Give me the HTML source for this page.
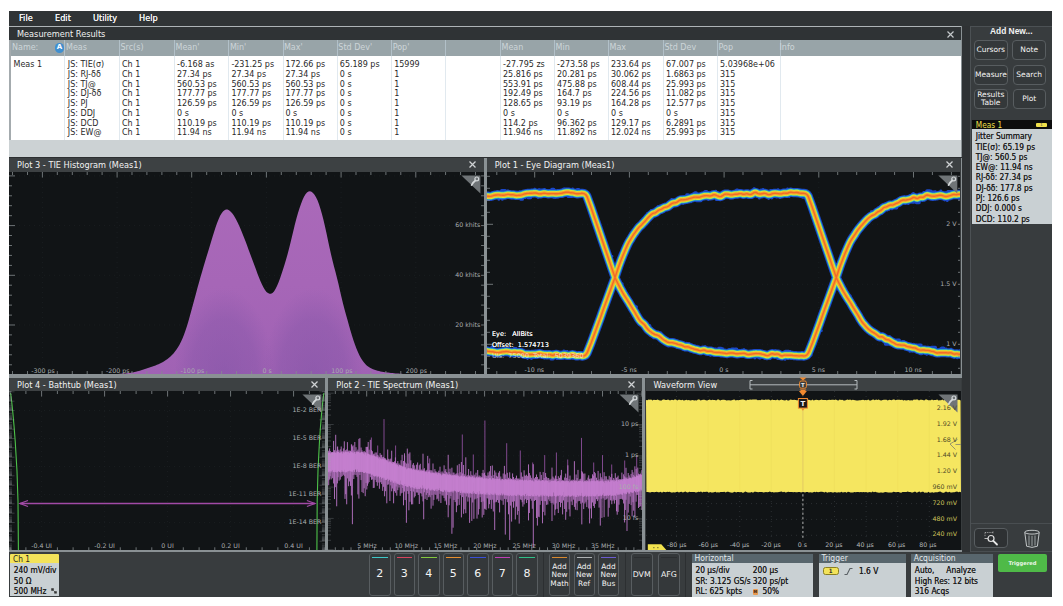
<!DOCTYPE html><html><head><meta charset="utf-8"><title>Scope</title><style>
*{box-sizing:border-box;margin:0;padding:0}
html,body{width:1063px;height:606px;background:#fff;overflow:hidden}
body{font-family:"DejaVu Sans","Liberation Sans",sans-serif;font-size:8px;color:#fff;position:relative}
.a{position:absolute}
#app{left:9px;top:11px;width:1043px;height:586px;background:#383c3e}
.t{position:absolute;white-space:nowrap;line-height:1}
.ptitle{position:absolute;background:#3d4143;color:#f2f2f2;font-size:8.2px;line-height:14px;padding-left:8px;overflow:hidden;white-space:nowrap}
.plot{position:absolute;background:#111416;overflow:hidden}
.x{position:absolute;top:3.2px;width:7px;height:7px}
.lbl{position:absolute;white-space:nowrap;font-size:6.3px;color:#a9adaf;line-height:8px}
.btn{position:absolute;border:1px solid #585d60;border-radius:4px;background:#34383a;color:#f4f4f4;text-align:center}
.cd{font-family:"DejaVu Sans Condensed","DejaVu Sans","Liberation Sans",sans-serif;font-stretch:condensed}
.bdg{position:absolute;font-family:"DejaVu Sans Condensed","DejaVu Sans","Liberation Sans",sans-serif;font-stretch:condensed;background:#c9d0d3;color:#1c1c1c;font-size:8px}
.bdg .h{position:absolute;left:0;top:0;right:0;height:9.5px;background:#58666d;color:#e4eaed;font-size:8.5px;line-height:9.5px;padding-left:3px}
</style></head><body>
<div id="app" class="a">
<div class="a" style="left:0px;top:0px;width:1043px;height:14.5px;background:#303436"></div>
<div class="t" style="left:10px;top:2.6px;font-size:8.2px;color:#f4f4f4;text-shadow:0 0 .4px #fff">File</div>
<div class="t" style="left:46px;top:2.6px;font-size:8.2px;color:#f4f4f4;text-shadow:0 0 .4px #fff">Edit</div>
<div class="t" style="left:84px;top:2.6px;font-size:8.2px;color:#f4f4f4;text-shadow:0 0 .4px #fff">Utility</div>
<div class="t" style="left:130px;top:2.6px;font-size:8.2px;color:#f4f4f4;text-shadow:0 0 .4px #fff">Help</div>
<div class="a" style="left:0px;top:14.5px;width:953px;height:1.5px;background:#aeb4b7"></div>
<div class="a" style="left:0px;top:16px;width:953px;height:13px;background:#2f3335"></div>
<div class="t" style="left:8px;top:18.6px;font-size:8.2px;color:#f0f0f0">Measurement Results</div>
<svg class="a" style="left:937.7px;top:19.6px" width="7" height="7" viewBox="0 0 7 7"><path d="M0.5 0.5L6.5 6.5M6.500 0.500L0.500 6.500" stroke="#c4c8ca" stroke-width="1.2" fill="none"/></svg>
<div class="a" style="left:0px;top:29px;width:953px;height:15.5px;background:#98a4a8"></div>
<div class="a" style="left:0px;top:44.5px;width:953px;height:84px;background:#fff"></div>
<div class="a" style="left:0px;top:128.5px;width:953px;height:17.6px;background:#ccd2d4"></div>
<div class="a" style="left:0px;top:146.1px;width:953px;height:1.2px;background:#2c2f31"></div>
<div class="a" style="left:952px;top:14.5px;width:1.5px;height:131.5px;background:#8a9194"></div>
<div class="a" style="left:0px;top:29px;width:2px;height:100px;background:#a4abae"></div>
<div class="t" style="left:3px;top:33px;color:#cdd5d8;font-size:8px">Name:</div>
<div class="a" style="left:45.8px;top:32.4px;width:9.4px;height:9.4px;border-radius:4.7px;background:#3f8fd0;color:#fff;font-size:7px;line-height:9.4px;text-align:center;font-weight:bold">A</div>
<div class="t" style="left:57px;top:33px;color:#cdd5d8;font-size:8px">Meas</div>
<div class="t" style="left:111.5px;top:33px;color:#cdd5d8;font-size:8px">Src(s)</div>
<div class="t" style="left:166.5px;top:33px;color:#cdd5d8;font-size:8px">Mean'</div>
<div class="t" style="left:220.9px;top:33px;color:#cdd5d8;font-size:8px">Min'</div>
<div class="t" style="left:274.9px;top:33px;color:#cdd5d8;font-size:8px">Max'</div>
<div class="t" style="left:329.3px;top:33px;color:#cdd5d8;font-size:8px">Std Dev'</div>
<div class="t" style="left:383.7px;top:33px;color:#cdd5d8;font-size:8px">Pop'</div>
<div class="t" style="left:492.5px;top:33px;color:#cdd5d8;font-size:8px">Mean</div>
<div class="t" style="left:546.5px;top:33px;color:#cdd5d8;font-size:8px">Min</div>
<div class="t" style="left:600.5px;top:33px;color:#cdd5d8;font-size:8px">Max</div>
<div class="t" style="left:655.5px;top:33px;color:#cdd5d8;font-size:8px">Std Dev</div>
<div class="t" style="left:709.5px;top:33px;color:#cdd5d8;font-size:8px">Pop</div>
<div class="t" style="left:770.5px;top:33px;color:#cdd5d8;font-size:8px">Info</div>
<div class="a" style="left:54.5px;top:29px;width:1px;height:99.5px;background:rgba(200,215,225,.55)"></div>
<div class="a" style="left:109.5px;top:29px;width:1px;height:99.5px;background:rgba(200,215,225,.55)"></div>
<div class="a" style="left:164.5px;top:29px;width:1px;height:99.5px;background:rgba(200,215,225,.55)"></div>
<div class="a" style="left:219px;top:29px;width:1px;height:99.5px;background:rgba(200,215,225,.55)"></div>
<div class="a" style="left:273.5px;top:29px;width:1px;height:99.5px;background:rgba(200,215,225,.55)"></div>
<div class="a" style="left:328px;top:29px;width:1px;height:99.5px;background:rgba(200,215,225,.55)"></div>
<div class="a" style="left:382px;top:29px;width:1px;height:99.5px;background:rgba(200,215,225,.55)"></div>
<div class="a" style="left:436px;top:29px;width:1px;height:99.5px;background:rgba(200,215,225,.55)"></div>
<div class="a" style="left:491px;top:29px;width:1px;height:99.5px;background:rgba(200,215,225,.55)"></div>
<div class="a" style="left:545px;top:29px;width:1px;height:99.5px;background:rgba(200,215,225,.55)"></div>
<div class="a" style="left:599px;top:29px;width:1px;height:99.5px;background:rgba(200,215,225,.55)"></div>
<div class="a" style="left:653.5px;top:29px;width:1px;height:99.5px;background:rgba(200,215,225,.55)"></div>
<div class="a" style="left:708px;top:29px;width:1px;height:99.5px;background:rgba(200,215,225,.55)"></div>
<div class="a" style="left:770.5px;top:29px;width:1px;height:99.5px;background:rgba(200,215,225,.55)"></div>
<div class="t" style="left:4.5px;top:50px;color:#2a2a2a;font-size:8px">Meas 1</div>
<div class="t" style="left:58.8px;top:49.1px;color:#2a2a2a;font-size:8px;line-height:9.73px">JS: TIE(σ)<br>JS: RJ-δδ<br>JS: TJ@<br>JS: DJ-δδ<br>JS: PJ<br>JS: DDJ<br>JS: DCD<br>JS: EW@</div>
<div class="t" style="left:113px;top:49.1px;color:#2a2a2a;font-size:8px;line-height:9.73px">Ch 1<br>Ch 1<br>Ch 1<br>Ch 1<br>Ch 1<br>Ch 1<br>Ch 1<br>Ch 1</div>
<div class="t" style="left:168px;top:49.1px;color:#2a2a2a;font-size:8px;line-height:9.73px">-6.168 as<br>27.34 ps<br>560.53 ps<br>177.77 ps<br>126.59 ps<br>0 s<br>110.19 ps<br>11.94 ns</div>
<div class="t" style="left:222.4px;top:49.1px;color:#2a2a2a;font-size:8px;line-height:9.73px">-231.25 ps<br>27.34 ps<br>560.53 ps<br>177.77 ps<br>126.59 ps<br>0 s<br>110.19 ps<br>11.94 ns</div>
<div class="t" style="left:276.4px;top:49.1px;color:#2a2a2a;font-size:8px;line-height:9.73px">172.66 ps<br>27.34 ps<br>560.53 ps<br>177.77 ps<br>126.59 ps<br>0 s<br>110.19 ps<br>11.94 ns</div>
<div class="t" style="left:330.8px;top:49.1px;color:#2a2a2a;font-size:8px;line-height:9.73px">65.189 ps<br>0 s<br>0 s<br>0 s<br>0 s<br>0 s<br>0 s<br>0 s</div>
<div class="t" style="left:385.2px;top:49.1px;color:#2a2a2a;font-size:8px;line-height:9.73px">15999<br>1<br>1<br>1<br>1<br>1<br>1<br>1</div>
<div class="t" style="left:494px;top:49.1px;color:#2a2a2a;font-size:8px;line-height:9.73px">-27.795 zs<br>25.816 ps<br>553.91 ps<br>192.49 ps<br>128.65 ps<br>0 s<br>114.2 ps<br>11.946 ns</div>
<div class="t" style="left:548px;top:49.1px;color:#2a2a2a;font-size:8px;line-height:9.73px">-273.58 ps<br>20.281 ps<br>475.88 ps<br>164.7 ps<br>93.19 ps<br>0 s<br>96.362 ps<br>11.892 ns</div>
<div class="t" style="left:602px;top:49.1px;color:#2a2a2a;font-size:8px;line-height:9.73px">233.64 ps<br>30.062 ps<br>608.44 ps<br>224.56 ps<br>164.28 ps<br>0 s<br>129.17 ps<br>12.024 ns</div>
<div class="t" style="left:657px;top:49.1px;color:#2a2a2a;font-size:8px;line-height:9.73px">67.007 ps<br>1.6863 ps<br>25.993 ps<br>11.082 ps<br>12.577 ps<br>0 s<br>6.2891 ps<br>25.993 ps</div>
<div class="t" style="left:711px;top:49.1px;color:#2a2a2a;font-size:8px;line-height:9.73px">5.03968e+06<br>315<br>315<br>315<br>315<br>315<br>315<br>315</div>
<div class="ptitle" style="left:0px;top:147.3px;width:474.9px;height:13.4px;">Plot 3 - TIE Histogram (Meas1)<svg class="x" style="right:7.5px" viewBox="0 0 7 7"><path d="M0.5 0.5L6.5 6.5M6.500 0.500L0.500 6.500" stroke="#cfd2d4" stroke-width="1.25" fill="none"/></svg></div>
<div class="a" style="left:474.9px;top:147.3px;width:2.8px;height:219px;background:#8a9194"></div>
<div class="a" style="left:0px;top:362.7px;width:953px;height:4.3px;background:#8a9194"></div>
<div class="plot" style="left:0px;top:160.7px;width:474.9px;height:202px">
<svg class="a" style="left:0;top:0" width="474.9" height="202" viewBox="0 0 474.9 202">
<path d="M33.4 0V202M108.1 0V202M182.7 0V202M257.4 0V202M332.1 0V202M406.8 0V202M0 3.9H474.9M0 53.6H474.9M0 103.3H474.9M0 153H474.9M0 202.7H474.9" stroke="#202427" stroke-width="0.8" stroke-dasharray="0.8 4.2" fill="none"/>
<defs><linearGradient id="hg" x1="0" y1="0" x2="0" y2="1"><stop offset="0" stop-color="#aa69b9"/><stop offset="0.5" stop-color="#a666b7"/><stop offset="1" stop-color="#a062b4"/></linearGradient><radialGradient id="hr"><stop offset="0" stop-color="#7d52a4" stop-opacity=".5"/><stop offset="0.65" stop-color="#8054a6" stop-opacity=".36"/><stop offset="1" stop-color="#8456a8" stop-opacity="0"/></radialGradient><clipPath id="hc"><path d="M91 202L91 202.6L92.5 202.6L94 202.5L95.5 202.5L97 202.4L98.5 202.4L100 202.3L101.5 202.3L103 202.2L104.5 202.1L106 202.1L107.5 202L109 201.9L110.5 201.8L112 201.7L113.5 201.6L115 201.5L116.5 201.4L118 201.2L119.5 201L121 200.9L122.5 200.6L124 200.4L125.5 200.1L127 199.7L128.5 199.3L130 198.9L131.5 198.5L133 198L134.5 197.5L136 197L137.5 196.5L139 196L140.5 195.5L142 195L143.5 194.5L145 194L146.5 193.4L148 192.8L149.5 192.2L151 191.5L152.5 190.8L154 190L155.5 189.1L157 188.1L158.5 187L160 185.8L161.5 184.5L163 183.1L164.5 181.5L166 179.6L167.5 177.6L169 175.3L170.5 172.7L172 169.8L173.5 166.5L175 162.8L176.5 158.6L178 154L179.5 148.9L181 143.6L182.5 138.1L184 132.6L185.5 127L187 121.4L188.5 115.8L190 110.4L191.5 105.1L193 99.9L194.5 94.8L196 89.8L197.5 84.8L199 79.9L200.5 74.9L202 70L203.5 65.1L205 60.2L206.5 55.6L208 51.2L209.5 47.4L211 44.1L212.5 41.5L214 39.6L215.5 38.3L217 37.6L218.5 37.6L220 38.2L221.5 39.4L223 41L224.5 43L226 45.5L227.5 48.3L229 51.3L230.5 54.6L232 58.1L233.5 61.7L235 65.4L236.5 69.3L238 73.3L239.5 77.4L241 81.4L242.5 85.5L244 89.5L245.5 93.6L247 97.6L248.5 101.7L250 105.6L251.5 109.2L253 112.6L254.5 115.5L256 118L257.5 119.9L259 121.1L260.5 121.8L262 121.7L263.5 120.9L265 119.4L266.5 117.1L268 114.1L269.5 110.4L271 106.4L272.5 102.1L274 97.5L275.5 92.8L277 87.7L278.5 82.4L280 76.8L281.5 70.8L283 64.5L284.5 58.2L286 52L287.5 46.2L289 41L290.5 36.2L292 31.9L293.5 28L295 24.8L296.5 22.3L298 20.5L299.5 19.5L301 19.3L302.5 19.8L304 20.9L305.5 22.7L307 25.2L308.5 28.3L310 32.2L311.5 36.9L313 42.2L314.5 48.1L316 54.5L317.5 61.3L319 68.4L320.5 75.5L322 82.2L323.5 88.5L325 94.4L326.5 100L328 105.9L329.5 112.1L331 118.7L332.5 125.2L334 131.4L335.5 137.2L337 142.7L338.5 148.1L340 153.6L341.5 158.8L343 163.8L344.5 168.5L346 172.8L347.5 176.7L349 180.2L350.5 183.4L352 186.2L353.5 188.6L355 190.6L356.5 192.3L358 193.7L359.5 194.8L361 195.8L362.5 196.6L364 197.3L365.5 197.8L367 198.3L368.5 198.7L370 199.1L371.5 199.4L373 199.7L374.5 200L376 200.2L377.5 200.4L379 200.6L380.5 200.8L382 200.9L383.5 201.1L385 201.2L386.5 201.4L388 201.5L389.5 201.6L391 201.7L392.5 201.8L394 201.9L395.5 202L397 202.1L398.5 202.2L400 202.3L401.5 202.3L403 202.4L404.5 202.4L406 202.5L407.5 202.5L409 202.6L410.5 202.6L412 202.6L413.5 202.7L415 202.7L416 202Z"/></clipPath></defs>
<path d="M91 202L91 202.6L92.5 202.6L94 202.5L95.5 202.5L97 202.4L98.5 202.4L100 202.3L101.5 202.3L103 202.2L104.5 202.1L106 202.1L107.5 202L109 201.9L110.5 201.8L112 201.7L113.5 201.6L115 201.5L116.5 201.4L118 201.2L119.5 201L121 200.9L122.5 200.6L124 200.4L125.5 200.1L127 199.7L128.5 199.3L130 198.9L131.5 198.5L133 198L134.5 197.5L136 197L137.5 196.5L139 196L140.5 195.5L142 195L143.5 194.5L145 194L146.5 193.4L148 192.8L149.5 192.2L151 191.5L152.5 190.8L154 190L155.5 189.1L157 188.1L158.5 187L160 185.8L161.5 184.5L163 183.1L164.5 181.5L166 179.6L167.5 177.6L169 175.3L170.5 172.7L172 169.8L173.5 166.5L175 162.8L176.5 158.6L178 154L179.5 148.9L181 143.6L182.5 138.1L184 132.6L185.5 127L187 121.4L188.5 115.8L190 110.4L191.5 105.1L193 99.9L194.5 94.8L196 89.8L197.5 84.8L199 79.9L200.5 74.9L202 70L203.5 65.1L205 60.2L206.5 55.6L208 51.2L209.5 47.4L211 44.1L212.5 41.5L214 39.6L215.5 38.3L217 37.6L218.5 37.6L220 38.2L221.5 39.4L223 41L224.5 43L226 45.5L227.5 48.3L229 51.3L230.5 54.6L232 58.1L233.5 61.7L235 65.4L236.5 69.3L238 73.3L239.5 77.4L241 81.4L242.5 85.5L244 89.5L245.5 93.6L247 97.6L248.5 101.7L250 105.6L251.5 109.2L253 112.6L254.5 115.5L256 118L257.5 119.9L259 121.1L260.5 121.8L262 121.7L263.5 120.9L265 119.4L266.5 117.1L268 114.1L269.5 110.4L271 106.4L272.5 102.1L274 97.5L275.5 92.8L277 87.7L278.5 82.4L280 76.8L281.5 70.8L283 64.5L284.5 58.2L286 52L287.5 46.2L289 41L290.5 36.2L292 31.9L293.5 28L295 24.8L296.5 22.3L298 20.5L299.5 19.5L301 19.3L302.5 19.8L304 20.9L305.5 22.7L307 25.2L308.5 28.3L310 32.2L311.5 36.9L313 42.2L314.5 48.1L316 54.5L317.5 61.3L319 68.4L320.5 75.5L322 82.2L323.5 88.5L325 94.4L326.5 100L328 105.9L329.5 112.1L331 118.7L332.5 125.2L334 131.4L335.5 137.2L337 142.7L338.5 148.1L340 153.6L341.5 158.8L343 163.8L344.5 168.5L346 172.8L347.5 176.7L349 180.2L350.5 183.4L352 186.2L353.5 188.6L355 190.6L356.5 192.3L358 193.7L359.5 194.8L361 195.8L362.5 196.6L364 197.3L365.5 197.8L367 198.3L368.5 198.7L370 199.1L371.5 199.4L373 199.7L374.5 200L376 200.2L377.5 200.4L379 200.6L380.5 200.8L382 200.9L383.5 201.1L385 201.2L386.5 201.4L388 201.5L389.5 201.6L391 201.7L392.5 201.8L394 201.9L395.5 202L397 202.1L398.5 202.2L400 202.3L401.5 202.3L403 202.4L404.5 202.4L406 202.5L407.5 202.5L409 202.6L410.5 202.6L412 202.6L413.5 202.7L415 202.7L416 202Z" fill="url(#hg)"/>
<g clip-path="url(#hc)"><ellipse cx="215" cy="204.3" rx="50" ry="88" fill="url(#hr)"/><ellipse cx="304" cy="204.3" rx="50" ry="88" fill="url(#hr)"/></g>
<path d="M3.5 0v3M3.5 202v-3M18.5 0v3M18.5 202v-3M33.4 0v5.5M48.3 0v3M48.3 202v-3M63.3 0v3M63.3 202v-3M78.2 0v3M78.2 202v-3M93.1 0v3M93.1 202v-3M108.1 0v5.5M123 0v3M123 202v-3M137.9 0v3M137.9 202v-3M152.9 0v3M152.9 202v-3M167.8 0v3M167.8 202v-3M182.7 0v5.5M197.7 0v3M197.7 202v-3M212.6 0v3M212.6 202v-3M227.5 0v3M227.5 202v-3M242.5 0v3M242.5 202v-3M257.4 0v5.5M272.3 0v3M272.3 202v-3M287.3 0v3M287.3 202v-3M302.2 0v3M302.2 202v-3M317.1 0v3M317.1 202v-3M332.1 0v5.5M347 0v3M347 202v-3M361.9 0v3M361.9 202v-3M376.9 0v3M376.9 202v-3M391.8 0v3M391.8 202v-3M406.8 0v5.5M421.7 0v3M421.7 202v-3M436.6 0v3M436.6 202v-3M451.6 0v3M451.6 202v-3M466.5 0v3M466.5 202v-3M0 3.9h6M474.9 3.9h-2.8M0 13.8h3M474.9 13.8h-2.8M0 23.8h3M474.9 23.8h-2.8M0 33.7h3M474.9 33.7h-2.8M0 43.7h3M474.9 43.7h-2.8M0 53.6h6M474.9 53.6h-2.8M0 63.5h3M474.9 63.5h-2.8M0 73.5h3M474.9 73.5h-2.8M0 83.4h3M474.9 83.4h-2.8M0 93.4h3M474.9 93.4h-2.8M0 103.3h6M474.9 103.3h-2.8M0 113.2h3M474.9 113.2h-2.8M0 123.2h3M474.9 123.2h-2.8M0 133.1h3M474.9 133.1h-2.8M0 143.1h3M474.9 143.1h-2.8M0 153h6M474.9 153h-2.8M0 162.9h3M474.9 162.9h-2.8M0 172.9h3M474.9 172.9h-2.8M0 182.8h3M474.9 182.8h-2.8M0 192.8h3M474.9 192.8h-2.8M0 202.7h6M474.9 202.7h-2.8" stroke="#858b8e" stroke-width="0.8" fill="none"/>
<g transform="translate(471.4,3.5)"><path d="M-19 0H0V18Z" fill="#6f7477"/><circle cx="-3.6" cy="3.4" r="1.9" fill="none" stroke="#d4d8da" stroke-width="1.2"/><path d="M-5 5Q-7.500 6.800 -8.800 9.600" stroke="#d4d8da" stroke-width="1.7" fill="none" stroke-linecap="round"/></g>
</svg>
<div class="lbl" style="left:4px;top:195.2px;width:60px;text-align:center;">-300 ps</div>
<div class="lbl" style="left:78.7px;top:195.2px;width:60px;text-align:center;">-200 ps</div>
<div class="lbl" style="left:153.4px;top:195.2px;width:60px;text-align:center;">-100 ps</div>
<div class="lbl" style="left:228.1px;top:195.2px;width:60px;text-align:center;">0 s</div>
<div class="lbl" style="left:302.8px;top:195.2px;width:60px;text-align:center;">100 ps</div>
<div class="lbl" style="left:377.5px;top:195.2px;width:60px;text-align:center;">200 ps</div>
<div class="lbl" style="right:3.6px;top:49.6px;text-align:right;">60 khits</div>
<div class="lbl" style="right:3.6px;top:99.3px;text-align:right;">40 khits</div>
<div class="lbl" style="right:3.6px;top:149px;text-align:right;">20 khits</div>
</div>
<div class="ptitle" style="left:477.7px;top:147.3px;width:473.8px;height:13.4px;">Plot 1 - Eye Diagram (Meas1)<svg class="x" style="right:7px" viewBox="0 0 7 7"><path d="M0.5 0.5L6.5 6.5M6.500 0.500L0.500 6.500" stroke="#cfd2d4" stroke-width="1.25" fill="none"/></svg></div>
<div class="a" style="left:951.5px;top:147.3px;width:1.5px;height:219px;background:#8a9194"></div>
<div class="plot" style="left:477.7px;top:160.7px;width:473.8px;height:202px">
<svg class="a" style="left:0;top:0" width="473.8" height="202" viewBox="0 0 473.8 202">
<path d="M47.7 0V202M142.4 0V202M237.1 0V202M331.8 0V202M426.5 0V202M0 52.3H473.8M0 112.3H473.8M0 172.3H473.8" stroke="#202427" stroke-width="0.8" stroke-dasharray="0.8 4.2" fill="none"/>
<g fill="none" stroke-linejoin="round" stroke-linecap="round">
<path d="M-4 175.9h0.1M-2.2 175.8h0.1M-0.1 182.3h0.1M7.9 184.2h0.1M10.8 177.2h0.1M11.8 176.7h0.1M18.1 176.4h0.1M20.4 183h0.1M22.5 183.4h0.1M25 184h0.1M27.3 176.1h0.1M29 176.3h0.1M33.1 183.5h0.1M33.9 177.5h0.1M40.5 186.6h0.1M44.4 186.7h0.1M46.2 179.4h0.1M48.3 178.8h0.1M57.5 186.1h0.1M58.5 179.6h0.1M60.4 179.6h0.1M66.4 179.9h0.1M70 186.8h0.1M75.6 186.5h0.1M76.8 178.9h0.1M78 179.2h0.1M80.1 179.4h0.1M85.8 186.5h0.1M93.6 180.3h0.1M124.7 103.1h0.1M139.6 79.8h0.1M140.3 68.8h0.1M143.3 72.2h0.1M147.9 58.2h0.1M149.7 56.2h0.1M153.1 51.2h0.1M160.3 41.5h0.1M164.3 38.2h0.1M170.9 34.6h0.1M173.2 33.8h0.1M181.1 30.2h0.1M182.9 29h0.1M184.6 27.3h0.1M189.8 33.9h0.1M191 26.2h0.1M194.6 30.9h0.1M196 31.5h0.1M200.1 23.6h0.1M203.8 29.9h0.1M206.6 21.6h0.1M211.8 22.2h0.1M214.4 28.2h0.1M216.9 20.5h0.1M221.3 27.6h0.1M224.4 20h0.1M228.7 19.1h0.1M236.4 26.3h0.1M244 26h0.1M250.6 18.9h0.1M261.2 19h0.1M267 16.5h0.1M272.3 26.3h0.1M274.1 17.9h0.1M276 17.3h0.1M281.5 26.6h0.1M283.5 18.4h0.1M284.8 26.1h0.1M287.3 18.2h0.1M289.5 25.3h0.1M291 17.6h0.1M293 25.6h0.1M296.2 24.2h0.1M300.5 16.7h0.1M302.2 24.6h0.1M309.8 24h0.1M313.5 24.6h0.1M351.7 117.8h0.1M363.2 123.9h0.1M362.4 134.8h0.1M367.8 141.1h0.1M373.1 150.6h0.1M380.6 153.2h0.1M385.8 163.1h0.1M387 157.6h0.1M392 167.7h0.1M393 161.2h0.1M395.7 161.7h0.1M397.6 170.5h0.1M402.2 172.2h0.1M402.6 164.6h0.1M407.4 168.2h0.1M411.8 169.7h0.1M415.5 169.4h0.1M416.9 169.5h0.1M420.2 177.3h0.1M422.8 179.4h0.1M425 179.2h0.1M426.9 172.6h0.1M429.9 172.8h0.1M439.7 182.4h0.1M444.2 182h0.1M445 183h0.1M448.2 176.3h0.1M449.9 177.7h0.1M452.1 177.5h0.1M453.6 176.6h0.1M454.4 176.6h0.1M458.2 177.3h0.1M458.9 176.7h0.1M464 177.1h0.1M467.2 185.3h0.1M470.2 186h0.1M473 178.5h0.1M475.1 178.2h0.1M477.2 177.1h0.1M-4.1 28.6h0.1M-2 27.9h0.1M10.2 19.5h0.1M11.8 27.4h0.1M15.3 27.5h0.1M16.3 20.2h0.1M20.7 18.8h0.1M24.9 26.1h0.1M26.1 26h0.1M32.9 19.9h0.1M38.2 25.6h0.1M41.2 25h0.1M43.6 25.6h0.1M47.7 17.1h0.1M50.9 25.5h0.1M52 17.6h0.1M55.5 24.7h0.1M57.5 17.3h0.1M60.6 18.7h0.1M62.4 18.4h0.1M66.6 25.5h0.1M68.5 25.4h0.1M70.9 25.3h0.1M75.8 24.3h0.1M81.8 17.2h0.1M85.6 16.9h0.1M87.4 24.2h0.1M89.3 18.3h0.1M90.9 18.3h0.1M92.5 24.8h0.1M125 84.3h0.1M135.2 111.7h0.1M140.8 123.7h0.1M145.3 139.4h0.1M146.5 135.9h0.1M148.6 139h0.1M150.3 141.7h0.1M152.3 152.3h0.1M155.3 154.5h0.1M158.3 151.9h0.1M160.5 153.2h0.1M166.6 165.9h0.1M173.8 160.7h0.1M174.2 162.6h0.1M181.3 174.2h0.1M187 167.7h0.1M195.8 177h0.1M196.1 170.6h0.1M199.2 171.1h0.1M200.2 171.3h0.1M202.1 171.6h0.1M205.2 179.6h0.1M212.4 175.6h0.1M218.2 174.6h0.1M220.7 182.3h0.1M223.4 183.4h0.1M227.5 183.3h0.1M228.9 176.8h0.1M233.5 177.6h0.1M235.6 176.5h0.1M242.3 177.3h0.1M249.1 178.2h0.1M250.9 178.3h0.1M253.7 184.8h0.1M256.9 177.6h0.1M267.9 186.1h0.1M269.9 178.3h0.1M270.6 185.2h0.1M278 186.4h0.1M283.1 186.7h0.1M288.4 178.5h0.1M292.8 186.3h0.1M298 187.4h0.1M303.1 179.2h0.1M320.3 183.2h0.1M324.1 183.2h0.1M334.4 158.8h0.1M349.1 94h0.1M367.4 59.3h0.1M375.9 56.2h0.1M377.3 46.5h0.1M382 50.4h0.1M384.3 39.5h0.1M386.6 39.4h0.1M391.4 35.6h0.1M395.7 32.9h0.1M398.8 31.2h0.1M402.1 37.2h0.1M404.9 37h0.1M407.1 29.2h0.1M411.8 27.5h0.1M417.4 24.6h0.1M418.4 31.4h0.1M421.3 31.8h0.1M423.3 23.6h0.1M425.5 21.9h0.1M426.3 21.3h0.1M440.9 26.2h0.1M445.7 27.8h0.1M447.6 19.9h0.1M448.3 19.5h0.1M450.5 26.6h0.1M453.8 18.9h0.1M457.8 28.1h0.1M460.2 28.8h0.1M466.6 18.9h0.1M471.9 26.5h0.1M472.4 26.5h0.1M474.6 26.4h0.1M477.1 26.5h0.1" stroke="#1b48c8" stroke-width="2.6"/>
<path d="M4.9 175.1h1.1M64.1 186.9h1.8M169.1 36.5h1.1M199.8 22.9h1.3M207.9 20.8h1.3M209.7 28.7h4M218 19.5h1.7M229.3 27.3h1.2M249.6 18.2h1.1M315.5 25.1h3.8M398.4 172.1h2.5M409.7 168.1h2.6M431.5 173.1h2.5M433.5 181.7h1.1M444.5 175.4h3.9M454.7 176.2h2M14.6 18.7h3.7M33.9 27.2h1.5M41.2 25.7h2.2M52.7 18h3.5M64.8 17.3h2M76.6 17h1.4M81.2 24.4h3.4M90.1 17.5h1.8M146.7 134.8h2.6M161.2 153.7h1.6M231.6 176.4h2.6M244.7 177h2.2M247.8 177.2h1.9M272.4 185.8h1M290.8 186.4h2.9M298.5 179.3h3.3M408.4 35.8h1.3M425.7 30.2h1.1M429.3 30.6h2.9M436.7 20.6h1.3M440 18.8h2.7M441.4 19.1h2.6M445.1 20.1h2.2M458.4 20.9h3M460.9 19.6h3.5" stroke="#1b48c8" stroke-width="3.2"/>
<path d="M-126.3 21.3L-124.3 21.6L-122.7 22.5L-121.3 24.5L-117.3 35.4L-114.9 42.4L-112.5 49.4L-110.1 56.4L-107.7 63.5L-105.3 70.5L-102.9 77.5L-100.5 84.5L-98.1 91.6L-95.7 98.6L-93.3 105.6L-92.3 107.7L-91.3 109.8L-90.3 111.8L-89.3 113.7L-88.3 115.7L-87.3 117.5L-86.3 119.3L-85.3 121L-84.3 122.6L-83.3 124.1L-82.3 125.6L-81.3 127.2L-80.3 128.9L-79.3 130.6L-78.3 132.4L-77.3 134L-76.3 135.6L-75.3 137.2L-74.3 138.7L-73.3 140.1L-72.3 141.7L-71.3 143.6L-70.3 145.6L-69.3 147.6L-68.3 149.4L-67.3 150.8L-66.3 152L-65.3 153.2L-64.3 154.2L-63.3 154.9L-62.3 155.7L-61.3 156.5L-60.3 157.4L-59.3 158.5L-58.3 159.4L-57.3 160L-56.3 160.5L-55.3 161.2L-54.3 161.9L-53.3 162.6L-52.3 163.1L-51.3 163.3L-50.3 163.6L-49.3 164.1L-48.3 164.9L-47.3 165.8L-46.3 166.7L-45.3 167.5L-44.3 168.3L-43.3 168.9L-42.3 169.4L-41.3 169.6L-40.3 169.7L-39.3 169.8L-38.3 169.9L-37.3 170.3L-36.3 170.8L-35.3 171.2L-34.3 171.5L-33.3 171.5L-32.3 171.6L-31.3 172.1L-30.3 172.8L-29.3 173.5L-28.3 174.1L-27.3 174.4L-26.3 174.4L-25.3 174.4L-24.3 174.3L-23.3 174.4L-22.3 174.9L-21.3 175.5L-20.3 176L-19.3 176.1L-18.3 176L-17.3 175.9L-16.3 176L-15.3 176.3L-14.3 176.6L-13.3 176.8L-12.3 177.2L-11.3 177.7L-10.3 178.3L-9.3 178.6L-8.3 178.7L-7.3 178.7L-6.3 178.8L-5.3 178.9L-4.3 179L-3.3 179L-2.3 178.9L-1.3 178.8L-0.3 178.9L0.7 179.2L1.7 179.4L2.7 179.5L3.7 179.6L4.7 179.7L5.7 179.8L6.7 180L7.7 180.2L8.7 180.5L9.7 180.6L10.7 180.7L11.7 180.6L12.7 180.4L13.7 180.2L14.7 180L15.7 179.9L16.7 179.8L17.7 179.7L18.7 179.5L19.7 179.5L20.7 179.6L21.7 179.8L22.7 180.1L23.7 180.4L24.7 180.6L25.7 180.4L26.7 180.2L27.7 180.2L28.7 180.3L29.7 180.5L30.7 180.5L31.7 180.5L32.7 180.4L33.7 180.5L34.7 180.8L35.7 181.4L36.7 182L37.7 182.3L38.7 182.4L39.7 182.4L40.7 182.4L41.7 182.4L42.7 182.5L43.7 182.5L44.7 182.4L45.7 182.4L46.7 182.4L47.7 182.4L48.7 182.4L49.7 182.3L50.7 182L51.7 181.8L52.7 181.7L53.7 181.9L54.7 182.2L55.7 182.4L56.7 182.6L57.7 182.7L58.7 182.7L59.7 182.8L60.7 182.8L61.7 182.7L62.7 182.7L63.7 182.8L64.7 183.1L65.7 183.3L66.7 183.1L67.7 182.7L68.7 182.4L69.7 182.4L70.7 182.7L71.7 183.2L72.7 183.4L73.7 183.5L74.7 183.3L75.7 183L76.7 182.9L77.7 182.8L78.7 183L79.7 183.3L80.7 183.5L81.7 183.5L82.7 183.4L83.7 183.1L84.7 182.8L85.7 182.7L86.7 182.9L87.7 183.2L88.7 183.7L89.7 183.9L90.7 183.8L91.7 183.7L92.7 183.6L93.7 183.7L94.7 183.8L95.1 184.1L97.1 183.8L98.7 182.9L100.1 180.9L104.1 171L106.5 164.5L108.9 157.9L111.3 151.4L113.7 144.9L116 138.3L118.4 131.8L120.8 125.2L123.2 118.7L125.6 112.1L128 105.6L129 102.5L130 99.5L131 96.6L132 93.7L133 91L134 88.3L135 85.8L136 83.3L137 80.9L138 78.5L139 76.2L140 73.9L141 71.8L142 69.9L143 68.3L144 66.7L145 65L146 63.4L147 61.9L148 60.6L149 59.2L150 57.8L151 56.5L152 55.3L153 54.3L154 53.4L155 52.4L156 51.3L157 50.3L158 49.2L159 48.1L160 46.9L161 45.7L162 44.7L163 43.7L164 42.8L165 42L166 41.4L167 41.1L168 40.9L169 40.3L170 39.5L171 38.7L172 38.1L173 37.7L174 37.4L175 36.9L176 36.2L177 35.6L178 35.3L179 35.1L180 34.8L181 34.4L182 33.7L183 32.9L184 32.1L185 31.5L186 31.1L187 30.9L188 30.8L189 30.6L190 30.1L191 29.4L192 28.7L193 28.1L194 27.8L195 27.9L196 27.9L197 27.7L198 27.6L199 27.5L200 27.2L201 27L202 26.7L203 26.4L204 26.1L205 25.8L206 25.5L207 25.2L208 25.1L209 25.1L210 25.2L211 25.2L212 25.2L213 25.1L214 24.7L215 24.3L216 24.1L217 23.8L218 23.7L219 23.6L220 23.6L221 23.7L222 23.9L223 24L224 23.8L225 23.5L226 23L227 22.7L228 22.8L229 23.2L230 23.7L231 24L232 24.4L233 24.6L234 24.5L235 24L236 23.3L237 22.7L238 22.2L239 22.1L240 22.1L241 22.2L242 22.4L243 22.7L244 22.9L245 22.9L246 22.7L247 22.4L248 22.2L249 22.2L250 22.2L251 22L252 21.8L253 21.6L254 21.6L255 21.9L256 22.3L257 22.3L258 22.1L259 21.9L260 21.8L261 22L262 22.4L263 22.5L264 22.4L265 22L266 21.3L267 20.7L268 20.4L269 20.5L270 21L271 21.6L272 21.9L273 22L274 21.9L275 21.7L276 21.5L277 21.3L278 21.4L279 21.7L280 22.1L281 22.5L282 22.6L283 22.5L284 22.2L285 21.8L286 21.5L287 21.4L288 21.3L289 21.4L290 21.5L291 21.6L292 21.8L293 21.9L294 21.9L295 21.7L296 21.3L297 21.1L298 21.1L299 21.3L300 21.3L301 21L302 20.6L303 20.3L304 20.2L305 20.4L306 20.6L307 20.6L308 20.6L309 20.5L310 20.5L311 20.7L312 21L313 21.1L314 21.3L315 21.3L316 21.3L316.3 21.3L318.3 21.6L319.9 22.5L321.3 24.5L325.3 35.4L327.7 42.4L330.1 49.4L332.5 56.4L334.9 63.5L337.3 70.5L339.7 77.5L342.1 84.5L344.5 91.6L346.9 98.6L349.3 105.6L350.3 107.7L351.3 109.8L352.3 111.8L353.3 113.7L354.3 115.7L355.3 117.5L356.3 119.3L357.3 121L358.3 122.7L359.3 124.3L360.3 125.9L361.3 127.4L362.3 128.9L363.3 130.5L364.3 132.2L365.3 133.9L366.3 135.6L367.3 137.2L368.3 138.8L369.3 140.4L370.3 142L371.3 143.7L372.3 145.4L373.3 147.2L374.3 148.8L375.3 150.3L376.3 151.5L377.3 152.6L378.3 153.8L379.3 154.9L380.3 156L381.3 156.9L382.3 157.8L383.3 158.5L384.3 159.3L385.3 159.9L386.3 160.5L387.3 161L388.3 161.7L389.3 162.4L390.3 163.2L391.3 164.1L392.3 164.7L393.3 164.9L394.3 164.8L395.3 164.8L396.3 165.3L397.3 166.2L398.3 167L399.3 167.5L400.3 167.7L401.3 167.8L402.3 168.2L403.3 168.9L404.3 169.6L405.3 170.2L406.3 170.7L407.3 171.2L408.3 171.8L409.3 172.4L410.3 172.7L411.3 172.8L412.3 172.9L413.3 173L414.3 173.1L415.3 173.1L416.3 173.1L417.3 173.2L418.3 173.6L419.3 174.2L420.3 174.6L421.3 174.8L422.3 174.9L423.3 175.1L424.3 175.4L425.3 175.7L426.3 175.8L427.3 175.9L428.3 176L429.3 176.5L430.3 177.1L431.3 177.6L432.3 177.9L433.3 178.1L434.3 178.1L435.3 178L436.3 178L437.3 178L438.3 178.3L439.3 178.4L440.3 178.4L441.3 178.4L442.3 178.6L443.3 178.9L444.3 179.2L445.3 179.4L446.3 179.5L447.3 179.9L448.3 180.4L449.3 180.8L450.3 181L451.3 180.9L452.3 180.8L453.3 180.7L454.3 180.7L455.3 180.7L456.3 180.7L457.3 180.7L458.3 180.6L459.3 180.7L460.3 180.9L461.3 181L462.3 180.9L463.3 180.8L464.3 180.9L465.3 181.3L466.3 181.8L467.3 182.1L468.3 182L469.3 181.9L470.3 181.9L471.3 182.1L472.3 182.2L473.3 182.3L474.3 182.1L475.3 181.9L476.3 181.7L477.3 181.5L478.3 181.4L479.3 181.5L480.3 181.9L481.3 182.3L482.3 182.4L483.3 182.1L484.3 181.4L485.3 180.8L486.3 180.6L487.3 180.7L488.3 181.3L489.3 182L490.3 182.6L491.3 183L492.3 183.2L493.3 183.2L494.3 183.2L495.3 183.1L496.3 182.9L497.3 182.7L498.3 182.6L499.3 182.5L500.3 182.6L501.3 182.7L502.3 182.8L503.3 183L504.3 183.1L505.3 183L506.3 183L507.3 182.9L508.3 182.9L509.3 182.9L510.3 182.9L511.3 182.9L512.3 183L513.3 183.1L514.3 183.4L515.3 183.5L516.3 183.5L517.3 183.4L518.3 183.1L519.3 182.7L520.3 182.5L521.3 182.7L522.3 183.1L523.3 183.6L524.3 183.7L525.3 183.5L526.3 183.2L527.3 183.1L528.3 183.2L529.3 183.6L530.3 183.8L531.3 183.9L532.3 183.9L533.3 183.9L534.3 183.9L535.3 183.9L536.3 183.8L537.3 183.8L537.7 184.1L539.7 183.8L541.3 182.9L542.7 180.9L546.7 171L549.1 164.5L551.5 157.9L553.9 151.4L556.3 144.9L558.6 138.3L561 131.8L563.4 125.2L565.8 118.7L568.2 112.1L570.6 105.6L571.6 102.5L572.6 99.5L573.6 96.6L574.6 93.7L575.6 91L576.6 88.3L577.6 85.8L578.6 83.3L579.6 80.8L580.6 78.3L581.6 76L582.6 73.8L583.6 71.8L584.6 69.9L585.6 68.2L586.6 66.5L587.6 65L588.6 63.4L589.6 62.1L590.6 60.8L591.6 59.5L592.6 58.2L593.6 56.8L594.6 55.5L595.6 54.5L596.6 53.7L597.6 53L598.6 51.9L599.6 50.4L600.6 48.9L601.6 47.7L602.6 46.7L603.6 45.8L604.6 44.7L605.6 43.7L606.6 43L607.6 42.5L608.6 42L609.6 41.6L610.6 41L611.6 40.2L612.6 39.2L613.6 38.1L614.6 37.2L615.6 36.7L616.6 36.6L617.6 36.6L618.6 36.3L619.6 35.7L620.6 35.1L621.6 34.5L622.6 34L623.6 33.5L624.6 32.9L625.6 32.2L626.6 31.4L627.6 30.8L628.6 30.5L629.6 30.5L630.6 30.7L631.6 30.7L632.6 30.5L633.6 30L634.6 29.6L635.6 29L636.6 28.4L637.6 27.9L638.6 27.7L639.6 27.5L640.6 27.4L641.6 27.2L642.6 27L643.6 26.9L644.6 26.9L645.6 26.6L646.6 26.3L647.6 26.1L648.6 26.1L649.6 26.1L650.6 25.9L651.6 25.4L652.6 24.9L653.6 24.5L654.6 24.5L655.6 24.5L656.6 24.4L657.6 24.4L658.6 24.3L659.6 24.4L660.6 24.5L661.6 24.6L662.6 24.6L663.6 24.5L664.6 24.3L665.6 24.1L666.6 23.8L667.6 23.4L668.6 23.1L669.6 22.7L670.6 22.7L671.6 22.8L672.6 23.1L673.6 23.5L674.6 23.7L675.6 23.7L676.6 23.5L677.6 23.2L678.6 23L679.6 22.9L680.6 23L681.6 23.1L682.6 23.1L683.6 22.9L684.6 22.7L685.6 22.4L686.6 22.3L687.6 22.4L688.6 22.5L689.6 22.4L690.6 22.2L691.6 22.1L692.6 22.1L693.6 22.2L694.6 22.2L695.6 22.2L696.6 22.2L697.6 22.2L698.6 22.3L699.6 22.5L700.6 22.7L701.6 22.7L702.6 22.6L703.6 22.3L704.6 21.9L705.6 21.5L706.6 21.2L707.6 21.2L708.6 21.4L709.6 21.6L710.6 21.7L711.6 21.5L712.6 21.2L713.6 21L714.6 21.1L715.6 21.3L716.6 21.5L717.6 21.6L718.6 21.6L719.6 21.6L720.6 21.7L721.6 21.9L722.6 22.1L723.6 22.2L724.6 22.2L725.6 22L726.6 21.8L727.6 21.9L728.6 22.2L729.6 22.3L730.6 22.4L731.6 22.3L732.6 22.2L733.6 22.2L734.6 22.3L735.6 22.2L736.6 22L737.6 21.8L738.6 21.5L739.6 21.1L740.6 21L741.6 21.2L742.6 21.8L743.6 22.4L744.6 22.5L745.6 22.4L746.6 22.1L747.6 21.8L748.6 21.6L749.6 21.1L750.6 20.6L751.6 20.3L752.6 20.3L753.6 20.7L754.6 21L755.6 21.1L756.6 21.1L757.6 21.2L758.6 21.3M-126.2 184.1L-124.2 183.8L-122.6 182.9L-121.2 180.9L-117.2 171L-114.8 164.5L-112.4 157.9L-110 151.4L-107.6 144.9L-105.3 138.3L-102.9 131.8L-100.5 125.2L-98.1 118.7L-95.7 112.1L-93.3 105.6L-92.3 102.5L-91.3 99.5L-90.3 96.6L-89.3 93.7L-88.3 91L-87.3 88.4L-86.3 85.8L-85.3 83.3L-84.3 80.8L-83.3 78.4L-82.3 76.1L-81.3 74L-80.3 72.1L-79.3 70.2L-78.3 68.4L-77.3 66.5L-76.3 64.7L-75.3 63.1L-74.3 61.6L-73.3 60.3L-72.3 59.1L-71.3 57.8L-70.3 56.6L-69.3 55.3L-68.3 54.2L-67.3 53.2L-66.3 52.2L-65.3 51.1L-64.3 49.8L-63.3 48.6L-62.3 47.8L-61.3 47.3L-60.3 46.9L-59.3 46.4L-58.3 45.7L-57.3 44.9L-56.3 44L-55.3 43L-54.3 41.9L-53.3 40.9L-52.3 40.2L-51.3 39.6L-50.3 39.1L-49.3 38.6L-48.3 38L-47.3 37.3L-46.3 36.8L-45.3 36.5L-44.3 36L-43.3 35.5L-42.3 34.9L-41.3 34.3L-40.3 33.8L-39.3 33.5L-38.3 33.3L-37.3 33L-36.3 32.6L-35.3 31.9L-34.3 31.3L-33.3 30.8L-32.3 30.4L-31.3 30L-30.3 29.5L-29.3 28.9L-28.3 28.5L-27.3 28.2L-26.3 28L-25.3 27.8L-24.3 27.7L-23.3 27.7L-22.3 27.7L-21.3 27.6L-20.3 27.2L-19.3 26.7L-18.3 26.4L-17.3 26.4L-16.3 26.7L-15.3 27L-14.3 27L-13.3 26.6L-12.3 25.9L-11.3 25.3L-10.3 25.1L-9.3 25.2L-8.3 25.3L-7.3 25.3L-6.3 25.1L-5.3 24.8L-4.3 24.4L-3.3 24.2L-2.3 24.1L-1.3 24L-0.3 24.1L0.7 24.2L1.7 24.3L2.7 24.4L3.7 24.4L4.7 24.1L5.7 23.8L6.7 23.4L7.7 23.2L8.7 23L9.7 23L10.7 22.9L11.7 22.9L12.7 23L13.7 23.1L14.7 23.1L15.7 23.2L16.7 23.2L17.7 23.1L18.7 22.8L19.7 22.6L20.7 22.4L21.7 22.4L22.7 22.6L23.7 22.8L24.7 22.8L25.7 22.8L26.7 22.9L27.7 23.1L28.7 23.4L29.7 23.5L30.7 23.4L31.7 23.3L32.7 23.2L33.7 23.1L34.7 22.9L35.7 22.6L36.7 22.2L37.7 21.9L38.7 21.7L39.7 21.5L40.7 21.4L41.7 21.4L42.7 21.3L43.7 21.3L44.7 21.2L45.7 21.1L46.7 21L47.7 21L48.7 21L49.7 21.2L50.7 21.5L51.7 21.8L52.7 21.9L53.7 21.8L54.7 21.7L55.7 21.4L56.7 21.2L57.7 21.2L58.7 21.4L59.7 21.6L60.7 21.8L61.7 21.8L62.7 21.7L63.7 21.6L64.7 21.6L65.7 21.6L66.7 21.6L67.7 21.7L68.7 21.8L69.7 21.8L70.7 21.7L71.7 21.6L72.7 21.5L73.7 21.4L74.7 21.3L75.7 21L76.7 20.7L77.7 20.5L78.7 20.3L79.7 20.2L80.7 20.1L81.7 20.2L82.7 20.5L83.7 20.7L84.7 20.8L85.7 20.9L86.7 21L87.7 21.3L88.7 21.6L89.7 21.8L90.7 21.8L91.7 21.7L92.7 21.6L93.7 21.5L94.7 21.3L95 21.3L97 21.6L98.6 22.5L100 24.5L104 35.4L106.4 42.4L108.8 49.4L111.2 56.4L113.6 63.5L116 70.5L118.4 77.5L120.8 84.5L123.2 91.6L125.6 98.6L128 105.6L129 107.7L130 109.8L131 111.8L132 113.7L133 115.7L134 117.5L135 119.3L136 121.1L137 122.8L138 124.4L139 125.9L140 127.5L141 129.1L142 130.6L143 132.3L144 134L145 135.7L146 137.3L147 138.9L148 140.5L149 142.3L150 144L151 145.7L152 147.3L153 148.7L154 149.8L155 150.6L156 151.4L157 152.3L158 153.5L159 155L160 156.3L161 157.5L162 158.4L163 159.2L164 160L165 160.8L166 161.4L167 162L168 162.5L169 162.8L170 163L171 163.3L172 163.9L173 164.7L174 165.6L175 166.5L176 167.3L177 168L178 168.6L179 169.2L180 169.8L181 170.3L182 170.5L183 170.6L184 170.6L185 170.6L186 170.8L187 171.1L188 171.3L189 171.6L190 172L191 172.4L192 172.6L193 172.9L194 173L195 173.4L196 173.9L197 174.4L198 174.8L199 174.9L200 174.8L201 174.8L202 175.1L203 175.6L204 176L205 176.3L206 176.6L207 177L208 177.3L209 177.5L210 177.7L211 178L212 178.4L213 178.7L214 178.7L215 178.4L216 178.1L217 178L218 178.2L219 178.8L220 179.2L221 179.3L222 179.2L223 179.1L224 179.2L225 179.5L226 179.9L227 180.2L228 180.4L229 180.5L230 180.5L231 180.5L232 180.4L233 180.6L234 180.8L235 180.9L236 181L237 181.1L238 181.3L239 181.5L240 181.6L241 181.3L242 181.1L243 181L244 181L245 181L246 181L247 181.2L248 181.5L249 181.7L250 181.8L251 181.8L252 181.6L253 181.5L254 181.5L255 181.4L256 181.3L257 181.3L258 181.5L259 181.9L260 182.3L261 182.5L262 182.5L263 182.3L264 182.1L265 182L266 181.9L267 181.7L268 181.6L269 181.5L270 181.6L271 181.6L272 181.6L273 181.7L274 181.9L275 182.2L276 182.4L277 182.7L278 183L279 183.3L280 183.6L281 183.5L282 183.1L283 182.5L284 181.9L285 181.7L286 181.8L287 182.1L288 182.3L289 182.1L290 182L291 182.1L292 182.5L293 183.2L294 183.8L295 184L296 183.6L297 183.3L298 183.1L299 183.1L300 183.2L301 183.3L302 183.2L303 183.2L304 183.3L305 183.3L306 183.5L307 183.6L308 183.7L309 183.7L310 183.8L311 183.9L312 184L313 183.9L314 183.8L315 183.7L316 183.8L316.4 184.1L318.4 183.8L320 182.9L321.4 180.9L325.4 171L327.8 164.5L330.2 157.9L332.6 151.4L334.9 144.9L337.3 138.3L339.7 131.8L342.1 125.2L344.5 118.7L346.9 112.1L349.3 105.6L350.3 102.5L351.3 99.5L352.3 96.6L353.3 93.7L354.3 91L355.3 88.4L356.3 85.8L357.3 83.3L358.3 80.8L359.3 78.4L360.3 76.1L361.3 73.9L362.3 71.7L363.3 69.7L364.3 67.9L365.3 66.4L366.3 64.9L367.3 63.4L368.3 61.9L369.3 60.3L370.3 58.8L371.3 57.4L372.3 56.2L373.3 55L374.3 53.8L375.3 52.7L376.3 51.5L377.3 50.4L378.3 49.3L379.3 48.2L380.3 47.2L381.3 46.3L382.3 45.5L383.3 44.7L384.3 44L385.3 43.5L386.3 43L387.3 42.6L388.3 42L389.3 41.1L390.3 40.2L391.3 39.6L392.3 39.1L393.3 38.7L394.3 37.9L395.3 37L396.3 36L397.3 35.4L398.3 35.1L399.3 34.9L400.3 34.5L401.3 33.9L402.3 33.3L403.3 33L404.3 33L405.3 33.1L406.3 32.9L407.3 32.4L408.3 31.9L409.3 31.4L410.3 31L411.3 30.6L412.3 30L413.3 29.2L414.3 28.6L415.3 28.2L416.3 28L417.3 28L418.3 28.1L419.3 28L420.3 27.8L421.3 27.6L422.3 27.3L423.3 27L424.3 26.6L425.3 26L426.3 25.5L427.3 25.4L428.3 25.8L429.3 26.3L430.3 26.5L431.3 26.1L432.3 25.5L433.3 25.1L434.3 25.1L435.3 25.3L436.3 25.2L437.3 24.6L438.3 23.8L439.3 23.2L440.3 23L441.3 23.2L442.3 23.5L443.3 23.8L444.3 24.1L445.3 24.1L446.3 24.2L447.3 24.2L448.3 24.1L449.3 23.9L450.3 23.7L451.3 23.5L452.3 23.3L453.3 23.2L454.3 23.3L455.3 23.5L456.3 23.9L457.3 24.2L458.3 24.5L459.3 24.5L460.3 24.4L461.3 24.1L462.3 23.8L463.3 23.5L464.3 23.2L465.3 22.8L466.3 22.5L467.3 22.4L468.3 22.6L469.3 22.7L470.3 22.6L471.3 22.4L472.3 22.3L473.3 22.3L474.3 22.5L475.3 22.6L476.3 22.7L477.3 22.7L478.3 22.5L479.3 22.2L480.3 21.8L481.3 21.5L482.3 21.4L483.3 21.5L484.3 21.7L485.3 21.9L486.3 22.1L487.3 22.2L488.3 22.2L489.3 22.2L490.3 22L491.3 22L492.3 22L493.3 21.9L494.3 21.9L495.3 22L496.3 22.2L497.3 22.4L498.3 22.5L499.3 22.2L500.3 21.7L501.3 21.4L502.3 21.3L503.3 21.3L504.3 21.3L505.3 21.3L506.3 21.2L507.3 21.3L508.3 21.5L509.3 21.6L510.3 21.5L511.3 21.3L512.3 21L513.3 20.8L514.3 20.8L515.3 20.8L516.3 20.8L517.3 20.8L518.3 20.8L519.3 20.7L520.3 20.7L521.3 20.7L522.3 20.9L523.3 21.1L524.3 21.3L525.3 21.5L526.3 21.6L527.3 21.6L528.3 21.5L529.3 21.3L530.3 21.1L531.3 21.1L532.3 21.2L533.3 21.3L534.3 21.3L535.3 21.3L536.3 21.3L537.3 21.3L537.6 21.3L539.6 21.6L541.2 22.5L542.6 24.5L546.6 35.4L549 42.4L551.4 49.4L553.8 56.4L556.2 63.5L558.6 70.5L561 77.5L563.4 84.5L565.8 91.6L568.2 98.6L570.6 105.6L571.6 107.7L572.6 109.8L573.6 111.8L574.6 113.7L575.6 115.7L576.6 117.5L577.6 119.3L578.6 121L579.6 122.6L580.6 124.1L581.6 125.7L582.6 127.3L583.6 129.1L584.6 130.8L585.6 132.4L586.6 134L587.6 135.6L588.6 137.3L589.6 139L590.6 140.7L591.6 142.4L592.6 144L593.6 145.4L594.6 146.7L595.6 148L596.6 149.5L597.6 151L598.6 152.5L599.6 153.8L600.6 155.1L601.6 156.2L602.6 157.1L603.6 158L604.6 159.1L605.6 160.2L606.6 161.2L607.6 161.9L608.6 162.3L609.6 162.5L610.6 162.8L611.6 163.4L612.6 163.8L613.6 164.2L614.6 164.4L615.6 164.9L616.6 165.9L617.6 167L618.6 167.9L619.6 168.2L620.6 168.2L621.6 168.1L622.6 168.3L623.6 168.5L624.6 169L625.6 169.5L626.6 170.1L627.6 170.8L628.6 171.5L629.6 172L630.6 172.3L631.6 172.5L632.6 172.5L633.6 172.5L634.6 172.5L635.6 172.7L636.6 173L637.6 173.5L638.6 174L639.6 174.5L640.6 174.8L641.6 175L642.6 175L643.6 175.1L644.6 175.1L645.6 175.1L646.6 175.3L647.6 175.6L648.6 176L649.6 176.7L650.6 177.2L651.6 177.5L652.6 177.6L653.6 177.5L654.6 177.3L655.6 177.1L656.6 177L657.6 177.3L658.6 177.7L659.6 178.3L660.6 178.7L661.6 178.7L662.6 178.4L663.6 178.2L664.6 178.3L665.6 178.7L666.6 179.1L667.6 179.5L668.6 179.8L669.6 180L670.6 180L671.6 180L672.6 179.9L673.6 179.8L674.6 180L675.6 180.4L676.6 180.8L677.6 180.9L678.6 180.9L679.6 180.7L680.6 180.6L681.6 180.6L682.6 180.9L683.6 181.3L684.6 181.6L685.6 181.7L686.6 181.5L687.6 181.1L688.6 180.9L689.6 181L690.6 181.2L691.6 181.4L692.6 181.6L693.6 181.7L694.6 181.8L695.6 181.7L696.6 181.6L697.6 181.6L698.6 181.6L699.6 181.8L700.6 181.7L701.6 181.4L702.6 181L703.6 180.7L704.6 180.8L705.6 181.2L706.6 181.8L707.6 182L708.6 182L709.6 181.9L710.6 181.7L711.6 181.7L712.6 181.8L713.6 181.8L714.6 181.6L715.6 181.5L716.6 181.5L717.6 181.7L718.6 181.9L719.6 182L720.6 181.9L721.6 181.8L722.6 182L723.6 182.4L724.6 182.7L725.6 182.8L726.6 182.9L727.6 182.9L728.6 183L729.6 183.1L730.6 183L731.6 182.8L732.6 182.7L733.6 182.8L734.6 182.9L735.6 182.8L736.6 182.7L737.6 182.6L738.6 182.8L739.6 183L740.6 183.2L741.6 183.3L742.6 183.4L743.6 183.4L744.6 183.3L745.6 183.2L746.6 183.1L747.6 182.9L748.6 182.9L749.6 182.9L750.6 182.9L751.6 182.9L752.6 182.9L753.6 183L754.6 183.2L755.6 183.3L756.6 183.5L757.6 183.6L758.6 183.8" stroke="#1b48c8" stroke-width="9.2"/>
<path d="M-126.3 21.3L-124.3 21.6L-122.7 22.5L-121.3 24.5L-117.3 35.4L-114.9 42.4L-112.5 49.4L-110.1 56.4L-107.7 63.5L-105.3 70.5L-102.9 77.5L-100.5 84.5L-98.1 91.6L-95.7 98.6L-93.3 105.6L-92.3 107.7L-91.3 109.8L-90.3 111.8L-89.3 113.7L-88.3 115.7L-87.3 117.5L-86.3 119.3L-85.3 121L-84.3 122.6L-83.3 124.1L-82.3 125.6L-81.3 127.2L-80.3 128.9L-79.3 130.6L-78.3 132.4L-77.3 134L-76.3 135.6L-75.3 137.2L-74.3 138.7L-73.3 140.1L-72.3 141.7L-71.3 143.6L-70.3 145.6L-69.3 147.6L-68.3 149.4L-67.3 150.8L-66.3 152L-65.3 153.2L-64.3 154.2L-63.3 154.9L-62.3 155.7L-61.3 156.5L-60.3 157.4L-59.3 158.5L-58.3 159.4L-57.3 160L-56.3 160.5L-55.3 161.2L-54.3 161.9L-53.3 162.6L-52.3 163.1L-51.3 163.3L-50.3 163.6L-49.3 164.1L-48.3 164.9L-47.3 165.8L-46.3 166.7L-45.3 167.5L-44.3 168.3L-43.3 168.9L-42.3 169.4L-41.3 169.6L-40.3 169.7L-39.3 169.8L-38.3 169.9L-37.3 170.3L-36.3 170.8L-35.3 171.2L-34.3 171.5L-33.3 171.5L-32.3 171.6L-31.3 172.1L-30.3 172.8L-29.3 173.5L-28.3 174.1L-27.3 174.4L-26.3 174.4L-25.3 174.4L-24.3 174.3L-23.3 174.4L-22.3 174.9L-21.3 175.5L-20.3 176L-19.3 176.1L-18.3 176L-17.3 175.9L-16.3 176L-15.3 176.3L-14.3 176.6L-13.3 176.8L-12.3 177.2L-11.3 177.7L-10.3 178.3L-9.3 178.6L-8.3 178.7L-7.3 178.7L-6.3 178.8L-5.3 178.9L-4.3 179L-3.3 179L-2.3 178.9L-1.3 178.8L-0.3 178.9L0.7 179.2L1.7 179.4L2.7 179.5L3.7 179.6L4.7 179.7L5.7 179.8L6.7 180L7.7 180.2L8.7 180.5L9.7 180.6L10.7 180.7L11.7 180.6L12.7 180.4L13.7 180.2L14.7 180L15.7 179.9L16.7 179.8L17.7 179.7L18.7 179.5L19.7 179.5L20.7 179.6L21.7 179.8L22.7 180.1L23.7 180.4L24.7 180.6L25.7 180.4L26.7 180.2L27.7 180.2L28.7 180.3L29.7 180.5L30.7 180.5L31.7 180.5L32.7 180.4L33.7 180.5L34.7 180.8L35.7 181.4L36.7 182L37.7 182.3L38.7 182.4L39.7 182.4L40.7 182.4L41.7 182.4L42.7 182.5L43.7 182.5L44.7 182.4L45.7 182.4L46.7 182.4L47.7 182.4L48.7 182.4L49.7 182.3L50.7 182L51.7 181.8L52.7 181.7L53.7 181.9L54.7 182.2L55.7 182.4L56.7 182.6L57.7 182.7L58.7 182.7L59.7 182.8L60.7 182.8L61.7 182.7L62.7 182.7L63.7 182.8L64.7 183.1L65.7 183.3L66.7 183.1L67.7 182.7L68.7 182.4L69.7 182.4L70.7 182.7L71.7 183.2L72.7 183.4L73.7 183.5L74.7 183.3L75.7 183L76.7 182.9L77.7 182.8L78.7 183L79.7 183.3L80.7 183.5L81.7 183.5L82.7 183.4L83.7 183.1L84.7 182.8L85.7 182.7L86.7 182.9L87.7 183.2L88.7 183.7L89.7 183.9L90.7 183.8L91.7 183.7L92.7 183.6L93.7 183.7L94.7 183.8L95.1 184.1L97.1 183.8L98.7 182.9L100.1 180.9L104.1 171L106.5 164.5L108.9 157.9L111.3 151.4L113.7 144.9L116 138.3L118.4 131.8L120.8 125.2L123.2 118.7L125.6 112.1L128 105.6L129 102.5L130 99.5L131 96.6L132 93.7L133 91L134 88.3L135 85.8L136 83.3L137 80.9L138 78.5L139 76.2L140 73.9L141 71.8L142 69.9L143 68.3L144 66.7L145 65L146 63.4L147 61.9L148 60.6L149 59.2L150 57.8L151 56.5L152 55.3L153 54.3L154 53.4L155 52.4L156 51.3L157 50.3L158 49.2L159 48.1L160 46.9L161 45.7L162 44.7L163 43.7L164 42.8L165 42L166 41.4L167 41.1L168 40.9L169 40.3L170 39.5L171 38.7L172 38.1L173 37.7L174 37.4L175 36.9L176 36.2L177 35.6L178 35.3L179 35.1L180 34.8L181 34.4L182 33.7L183 32.9L184 32.1L185 31.5L186 31.1L187 30.9L188 30.8L189 30.6L190 30.1L191 29.4L192 28.7L193 28.1L194 27.8L195 27.9L196 27.9L197 27.7L198 27.6L199 27.5L200 27.2L201 27L202 26.7L203 26.4L204 26.1L205 25.8L206 25.5L207 25.2L208 25.1L209 25.1L210 25.2L211 25.2L212 25.2L213 25.1L214 24.7L215 24.3L216 24.1L217 23.8L218 23.7L219 23.6L220 23.6L221 23.7L222 23.9L223 24L224 23.8L225 23.5L226 23L227 22.7L228 22.8L229 23.2L230 23.7L231 24L232 24.4L233 24.6L234 24.5L235 24L236 23.3L237 22.7L238 22.2L239 22.1L240 22.1L241 22.2L242 22.4L243 22.7L244 22.9L245 22.9L246 22.7L247 22.4L248 22.2L249 22.2L250 22.2L251 22L252 21.8L253 21.6L254 21.6L255 21.9L256 22.3L257 22.3L258 22.1L259 21.9L260 21.8L261 22L262 22.4L263 22.5L264 22.4L265 22L266 21.3L267 20.7L268 20.4L269 20.5L270 21L271 21.6L272 21.9L273 22L274 21.9L275 21.7L276 21.5L277 21.3L278 21.4L279 21.7L280 22.1L281 22.5L282 22.6L283 22.5L284 22.2L285 21.8L286 21.5L287 21.4L288 21.3L289 21.4L290 21.5L291 21.6L292 21.8L293 21.9L294 21.9L295 21.7L296 21.3L297 21.1L298 21.1L299 21.3L300 21.3L301 21L302 20.6L303 20.3L304 20.2L305 20.4L306 20.6L307 20.6L308 20.6L309 20.5L310 20.5L311 20.7L312 21L313 21.1L314 21.3L315 21.3L316 21.3L316.3 21.3L318.3 21.6L319.9 22.5L321.3 24.5L325.3 35.4L327.7 42.4L330.1 49.4L332.5 56.4L334.9 63.5L337.3 70.5L339.7 77.5L342.1 84.5L344.5 91.6L346.9 98.6L349.3 105.6L350.3 107.7L351.3 109.8L352.3 111.8L353.3 113.7L354.3 115.7L355.3 117.5L356.3 119.3L357.3 121L358.3 122.7L359.3 124.3L360.3 125.9L361.3 127.4L362.3 128.9L363.3 130.5L364.3 132.2L365.3 133.9L366.3 135.6L367.3 137.2L368.3 138.8L369.3 140.4L370.3 142L371.3 143.7L372.3 145.4L373.3 147.2L374.3 148.8L375.3 150.3L376.3 151.5L377.3 152.6L378.3 153.8L379.3 154.9L380.3 156L381.3 156.9L382.3 157.8L383.3 158.5L384.3 159.3L385.3 159.9L386.3 160.5L387.3 161L388.3 161.7L389.3 162.4L390.3 163.2L391.3 164.1L392.3 164.7L393.3 164.9L394.3 164.8L395.3 164.8L396.3 165.3L397.3 166.2L398.3 167L399.3 167.5L400.3 167.7L401.3 167.8L402.3 168.2L403.3 168.9L404.3 169.6L405.3 170.2L406.3 170.7L407.3 171.2L408.3 171.8L409.3 172.4L410.3 172.7L411.3 172.8L412.3 172.9L413.3 173L414.3 173.1L415.3 173.1L416.3 173.1L417.3 173.2L418.3 173.6L419.3 174.2L420.3 174.6L421.3 174.8L422.3 174.9L423.3 175.1L424.3 175.4L425.3 175.7L426.3 175.8L427.3 175.9L428.3 176L429.3 176.5L430.3 177.1L431.3 177.6L432.3 177.9L433.3 178.1L434.3 178.1L435.3 178L436.3 178L437.3 178L438.3 178.3L439.3 178.4L440.3 178.4L441.3 178.4L442.3 178.6L443.3 178.9L444.3 179.2L445.3 179.4L446.3 179.5L447.3 179.9L448.3 180.4L449.3 180.8L450.3 181L451.3 180.9L452.3 180.8L453.3 180.7L454.3 180.7L455.3 180.7L456.3 180.7L457.3 180.7L458.3 180.6L459.3 180.7L460.3 180.9L461.3 181L462.3 180.9L463.3 180.8L464.3 180.9L465.3 181.3L466.3 181.8L467.3 182.1L468.3 182L469.3 181.9L470.3 181.9L471.3 182.1L472.3 182.2L473.3 182.3L474.3 182.1L475.3 181.9L476.3 181.7L477.3 181.5L478.3 181.4L479.3 181.5L480.3 181.9L481.3 182.3L482.3 182.4L483.3 182.1L484.3 181.4L485.3 180.8L486.3 180.6L487.3 180.7L488.3 181.3L489.3 182L490.3 182.6L491.3 183L492.3 183.2L493.3 183.2L494.3 183.2L495.3 183.1L496.3 182.9L497.3 182.7L498.3 182.6L499.3 182.5L500.3 182.6L501.3 182.7L502.3 182.8L503.3 183L504.3 183.1L505.3 183L506.3 183L507.3 182.9L508.3 182.9L509.3 182.9L510.3 182.9L511.3 182.9L512.3 183L513.3 183.1L514.3 183.4L515.3 183.5L516.3 183.5L517.3 183.4L518.3 183.1L519.3 182.7L520.3 182.5L521.3 182.7L522.3 183.1L523.3 183.6L524.3 183.7L525.3 183.5L526.3 183.2L527.3 183.1L528.3 183.2L529.3 183.6L530.3 183.8L531.3 183.9L532.3 183.9L533.3 183.9L534.3 183.9L535.3 183.9L536.3 183.8L537.3 183.8L537.7 184.1L539.7 183.8L541.3 182.9L542.7 180.9L546.7 171L549.1 164.5L551.5 157.9L553.9 151.4L556.3 144.9L558.6 138.3L561 131.8L563.4 125.2L565.8 118.7L568.2 112.1L570.6 105.6L571.6 102.5L572.6 99.5L573.6 96.6L574.6 93.7L575.6 91L576.6 88.3L577.6 85.8L578.6 83.3L579.6 80.8L580.6 78.3L581.6 76L582.6 73.8L583.6 71.8L584.6 69.9L585.6 68.2L586.6 66.5L587.6 65L588.6 63.4L589.6 62.1L590.6 60.8L591.6 59.5L592.6 58.2L593.6 56.8L594.6 55.5L595.6 54.5L596.6 53.7L597.6 53L598.6 51.9L599.6 50.4L600.6 48.9L601.6 47.7L602.6 46.7L603.6 45.8L604.6 44.7L605.6 43.7L606.6 43L607.6 42.5L608.6 42L609.6 41.6L610.6 41L611.6 40.2L612.6 39.2L613.6 38.1L614.6 37.2L615.6 36.7L616.6 36.6L617.6 36.6L618.6 36.3L619.6 35.7L620.6 35.1L621.6 34.5L622.6 34L623.6 33.5L624.6 32.9L625.6 32.2L626.6 31.4L627.6 30.8L628.6 30.5L629.6 30.5L630.6 30.7L631.6 30.7L632.6 30.5L633.6 30L634.6 29.6L635.6 29L636.6 28.4L637.6 27.9L638.6 27.7L639.6 27.5L640.6 27.4L641.6 27.2L642.6 27L643.6 26.9L644.6 26.9L645.6 26.6L646.6 26.3L647.6 26.1L648.6 26.1L649.6 26.1L650.6 25.9L651.6 25.4L652.6 24.9L653.6 24.5L654.6 24.5L655.6 24.5L656.6 24.4L657.6 24.4L658.6 24.3L659.6 24.4L660.6 24.5L661.6 24.6L662.6 24.6L663.6 24.5L664.6 24.3L665.6 24.1L666.6 23.8L667.6 23.4L668.6 23.1L669.6 22.7L670.6 22.7L671.6 22.8L672.6 23.1L673.6 23.5L674.6 23.7L675.6 23.7L676.6 23.5L677.6 23.2L678.6 23L679.6 22.9L680.6 23L681.6 23.1L682.6 23.1L683.6 22.9L684.6 22.7L685.6 22.4L686.6 22.3L687.6 22.4L688.6 22.5L689.6 22.4L690.6 22.2L691.6 22.1L692.6 22.1L693.6 22.2L694.6 22.2L695.6 22.2L696.6 22.2L697.6 22.2L698.6 22.3L699.6 22.5L700.6 22.7L701.6 22.7L702.6 22.6L703.6 22.3L704.6 21.9L705.6 21.5L706.6 21.2L707.6 21.2L708.6 21.4L709.6 21.6L710.6 21.7L711.6 21.5L712.6 21.2L713.6 21L714.6 21.1L715.6 21.3L716.6 21.5L717.6 21.6L718.6 21.6L719.6 21.6L720.6 21.7L721.6 21.9L722.6 22.1L723.6 22.2L724.6 22.2L725.6 22L726.6 21.8L727.6 21.9L728.6 22.2L729.6 22.3L730.6 22.4L731.6 22.3L732.6 22.2L733.6 22.2L734.6 22.3L735.6 22.2L736.6 22L737.6 21.8L738.6 21.5L739.6 21.1L740.6 21L741.6 21.2L742.6 21.8L743.6 22.4L744.6 22.5L745.6 22.4L746.6 22.1L747.6 21.8L748.6 21.6L749.6 21.1L750.6 20.6L751.6 20.3L752.6 20.3L753.6 20.7L754.6 21L755.6 21.1L756.6 21.1L757.6 21.2L758.6 21.3M-126.2 184.1L-124.2 183.8L-122.6 182.9L-121.2 180.9L-117.2 171L-114.8 164.5L-112.4 157.9L-110 151.4L-107.6 144.9L-105.3 138.3L-102.9 131.8L-100.5 125.2L-98.1 118.7L-95.7 112.1L-93.3 105.6L-92.3 102.5L-91.3 99.5L-90.3 96.6L-89.3 93.7L-88.3 91L-87.3 88.4L-86.3 85.8L-85.3 83.3L-84.3 80.8L-83.3 78.4L-82.3 76.1L-81.3 74L-80.3 72.1L-79.3 70.2L-78.3 68.4L-77.3 66.5L-76.3 64.7L-75.3 63.1L-74.3 61.6L-73.3 60.3L-72.3 59.1L-71.3 57.8L-70.3 56.6L-69.3 55.3L-68.3 54.2L-67.3 53.2L-66.3 52.2L-65.3 51.1L-64.3 49.8L-63.3 48.6L-62.3 47.8L-61.3 47.3L-60.3 46.9L-59.3 46.4L-58.3 45.7L-57.3 44.9L-56.3 44L-55.3 43L-54.3 41.9L-53.3 40.9L-52.3 40.2L-51.3 39.6L-50.3 39.1L-49.3 38.6L-48.3 38L-47.3 37.3L-46.3 36.8L-45.3 36.5L-44.3 36L-43.3 35.5L-42.3 34.9L-41.3 34.3L-40.3 33.8L-39.3 33.5L-38.3 33.3L-37.3 33L-36.3 32.6L-35.3 31.9L-34.3 31.3L-33.3 30.8L-32.3 30.4L-31.3 30L-30.3 29.5L-29.3 28.9L-28.3 28.5L-27.3 28.2L-26.3 28L-25.3 27.8L-24.3 27.7L-23.3 27.7L-22.3 27.7L-21.3 27.6L-20.3 27.2L-19.3 26.7L-18.3 26.4L-17.3 26.4L-16.3 26.7L-15.3 27L-14.3 27L-13.3 26.6L-12.3 25.9L-11.3 25.3L-10.3 25.1L-9.3 25.2L-8.3 25.3L-7.3 25.3L-6.3 25.1L-5.3 24.8L-4.3 24.4L-3.3 24.2L-2.3 24.1L-1.3 24L-0.3 24.1L0.7 24.2L1.7 24.3L2.7 24.4L3.7 24.4L4.7 24.1L5.7 23.8L6.7 23.4L7.7 23.2L8.7 23L9.7 23L10.7 22.9L11.7 22.9L12.7 23L13.7 23.1L14.7 23.1L15.7 23.2L16.7 23.2L17.7 23.1L18.7 22.8L19.7 22.6L20.7 22.4L21.7 22.4L22.7 22.6L23.7 22.8L24.7 22.8L25.7 22.8L26.7 22.9L27.7 23.1L28.7 23.4L29.7 23.5L30.7 23.4L31.7 23.3L32.7 23.2L33.7 23.1L34.7 22.9L35.7 22.6L36.7 22.2L37.7 21.9L38.7 21.7L39.7 21.5L40.7 21.4L41.7 21.4L42.7 21.3L43.7 21.3L44.7 21.2L45.7 21.1L46.7 21L47.7 21L48.7 21L49.7 21.2L50.7 21.5L51.7 21.8L52.7 21.9L53.7 21.8L54.7 21.7L55.7 21.4L56.7 21.2L57.7 21.2L58.7 21.4L59.7 21.6L60.7 21.8L61.7 21.8L62.7 21.7L63.7 21.6L64.7 21.6L65.7 21.6L66.7 21.6L67.7 21.7L68.7 21.8L69.7 21.8L70.7 21.7L71.7 21.6L72.7 21.5L73.7 21.4L74.7 21.3L75.7 21L76.7 20.7L77.7 20.5L78.7 20.3L79.7 20.2L80.7 20.1L81.7 20.2L82.7 20.5L83.7 20.7L84.7 20.8L85.7 20.9L86.7 21L87.7 21.3L88.7 21.6L89.7 21.8L90.7 21.8L91.7 21.7L92.7 21.6L93.7 21.5L94.7 21.3L95 21.3L97 21.6L98.6 22.5L100 24.5L104 35.4L106.4 42.4L108.8 49.4L111.2 56.4L113.6 63.5L116 70.5L118.4 77.5L120.8 84.5L123.2 91.6L125.6 98.6L128 105.6L129 107.7L130 109.8L131 111.8L132 113.7L133 115.7L134 117.5L135 119.3L136 121.1L137 122.8L138 124.4L139 125.9L140 127.5L141 129.1L142 130.6L143 132.3L144 134L145 135.7L146 137.3L147 138.9L148 140.5L149 142.3L150 144L151 145.7L152 147.3L153 148.7L154 149.8L155 150.6L156 151.4L157 152.3L158 153.5L159 155L160 156.3L161 157.5L162 158.4L163 159.2L164 160L165 160.8L166 161.4L167 162L168 162.5L169 162.8L170 163L171 163.3L172 163.9L173 164.7L174 165.6L175 166.5L176 167.3L177 168L178 168.6L179 169.2L180 169.8L181 170.3L182 170.5L183 170.6L184 170.6L185 170.6L186 170.8L187 171.1L188 171.3L189 171.6L190 172L191 172.4L192 172.6L193 172.9L194 173L195 173.4L196 173.9L197 174.4L198 174.8L199 174.9L200 174.8L201 174.8L202 175.1L203 175.6L204 176L205 176.3L206 176.6L207 177L208 177.3L209 177.5L210 177.7L211 178L212 178.4L213 178.7L214 178.7L215 178.4L216 178.1L217 178L218 178.2L219 178.8L220 179.2L221 179.3L222 179.2L223 179.1L224 179.2L225 179.5L226 179.9L227 180.2L228 180.4L229 180.5L230 180.5L231 180.5L232 180.4L233 180.6L234 180.8L235 180.9L236 181L237 181.1L238 181.3L239 181.5L240 181.6L241 181.3L242 181.1L243 181L244 181L245 181L246 181L247 181.2L248 181.5L249 181.7L250 181.8L251 181.8L252 181.6L253 181.5L254 181.5L255 181.4L256 181.3L257 181.3L258 181.5L259 181.9L260 182.3L261 182.5L262 182.5L263 182.3L264 182.1L265 182L266 181.9L267 181.7L268 181.6L269 181.5L270 181.6L271 181.6L272 181.6L273 181.7L274 181.9L275 182.2L276 182.4L277 182.7L278 183L279 183.3L280 183.6L281 183.5L282 183.1L283 182.5L284 181.9L285 181.7L286 181.8L287 182.1L288 182.3L289 182.1L290 182L291 182.1L292 182.5L293 183.2L294 183.8L295 184L296 183.6L297 183.3L298 183.1L299 183.1L300 183.2L301 183.3L302 183.2L303 183.2L304 183.3L305 183.3L306 183.5L307 183.6L308 183.7L309 183.7L310 183.8L311 183.9L312 184L313 183.9L314 183.8L315 183.7L316 183.8L316.4 184.1L318.4 183.8L320 182.9L321.4 180.9L325.4 171L327.8 164.5L330.2 157.9L332.6 151.4L334.9 144.9L337.3 138.3L339.7 131.8L342.1 125.2L344.5 118.7L346.9 112.1L349.3 105.6L350.3 102.5L351.3 99.5L352.3 96.6L353.3 93.7L354.3 91L355.3 88.4L356.3 85.8L357.3 83.3L358.3 80.8L359.3 78.4L360.3 76.1L361.3 73.9L362.3 71.7L363.3 69.7L364.3 67.9L365.3 66.4L366.3 64.9L367.3 63.4L368.3 61.9L369.3 60.3L370.3 58.8L371.3 57.4L372.3 56.2L373.3 55L374.3 53.8L375.3 52.7L376.3 51.5L377.3 50.4L378.3 49.3L379.3 48.2L380.3 47.2L381.3 46.3L382.3 45.5L383.3 44.7L384.3 44L385.3 43.5L386.3 43L387.3 42.6L388.3 42L389.3 41.1L390.3 40.2L391.3 39.6L392.3 39.1L393.3 38.7L394.3 37.9L395.3 37L396.3 36L397.3 35.4L398.3 35.1L399.3 34.9L400.3 34.5L401.3 33.9L402.3 33.3L403.3 33L404.3 33L405.3 33.1L406.3 32.9L407.3 32.4L408.3 31.9L409.3 31.4L410.3 31L411.3 30.6L412.3 30L413.3 29.2L414.3 28.6L415.3 28.2L416.3 28L417.3 28L418.3 28.1L419.3 28L420.3 27.8L421.3 27.6L422.3 27.3L423.3 27L424.3 26.6L425.3 26L426.3 25.5L427.3 25.4L428.3 25.8L429.3 26.3L430.3 26.5L431.3 26.1L432.3 25.5L433.3 25.1L434.3 25.1L435.3 25.3L436.3 25.2L437.3 24.6L438.3 23.8L439.3 23.2L440.3 23L441.3 23.2L442.3 23.5L443.3 23.8L444.3 24.1L445.3 24.1L446.3 24.2L447.3 24.2L448.3 24.1L449.3 23.9L450.3 23.7L451.3 23.5L452.3 23.3L453.3 23.2L454.3 23.3L455.3 23.5L456.3 23.9L457.3 24.2L458.3 24.5L459.3 24.5L460.3 24.4L461.3 24.1L462.3 23.8L463.3 23.5L464.3 23.2L465.3 22.8L466.3 22.5L467.3 22.4L468.3 22.6L469.3 22.7L470.3 22.6L471.3 22.4L472.3 22.3L473.3 22.3L474.3 22.5L475.3 22.6L476.3 22.7L477.3 22.7L478.3 22.5L479.3 22.2L480.3 21.8L481.3 21.5L482.3 21.4L483.3 21.5L484.3 21.7L485.3 21.9L486.3 22.1L487.3 22.2L488.3 22.2L489.3 22.2L490.3 22L491.3 22L492.3 22L493.3 21.9L494.3 21.9L495.3 22L496.3 22.2L497.3 22.4L498.3 22.5L499.3 22.2L500.3 21.7L501.3 21.4L502.3 21.3L503.3 21.3L504.3 21.3L505.3 21.3L506.3 21.2L507.3 21.3L508.3 21.5L509.3 21.6L510.3 21.5L511.3 21.3L512.3 21L513.3 20.8L514.3 20.8L515.3 20.8L516.3 20.8L517.3 20.8L518.3 20.8L519.3 20.7L520.3 20.7L521.3 20.7L522.3 20.9L523.3 21.1L524.3 21.3L525.3 21.5L526.3 21.6L527.3 21.6L528.3 21.5L529.3 21.3L530.3 21.1L531.3 21.1L532.3 21.2L533.3 21.3L534.3 21.3L535.3 21.3L536.3 21.3L537.3 21.3L537.6 21.3L539.6 21.6L541.2 22.5L542.6 24.5L546.6 35.4L549 42.4L551.4 49.4L553.8 56.4L556.2 63.5L558.6 70.5L561 77.5L563.4 84.5L565.8 91.6L568.2 98.6L570.6 105.6L571.6 107.7L572.6 109.8L573.6 111.8L574.6 113.7L575.6 115.7L576.6 117.5L577.6 119.3L578.6 121L579.6 122.6L580.6 124.1L581.6 125.7L582.6 127.3L583.6 129.1L584.6 130.8L585.6 132.4L586.6 134L587.6 135.6L588.6 137.3L589.6 139L590.6 140.7L591.6 142.4L592.6 144L593.6 145.4L594.6 146.7L595.6 148L596.6 149.5L597.6 151L598.6 152.5L599.6 153.8L600.6 155.1L601.6 156.2L602.6 157.1L603.6 158L604.6 159.1L605.6 160.2L606.6 161.2L607.6 161.9L608.6 162.3L609.6 162.5L610.6 162.8L611.6 163.4L612.6 163.8L613.6 164.2L614.6 164.4L615.6 164.9L616.6 165.9L617.6 167L618.6 167.9L619.6 168.2L620.6 168.2L621.6 168.1L622.6 168.3L623.6 168.5L624.6 169L625.6 169.5L626.6 170.1L627.6 170.8L628.6 171.5L629.6 172L630.6 172.3L631.6 172.5L632.6 172.5L633.6 172.5L634.6 172.5L635.6 172.7L636.6 173L637.6 173.5L638.6 174L639.6 174.5L640.6 174.8L641.6 175L642.6 175L643.6 175.1L644.6 175.1L645.6 175.1L646.6 175.3L647.6 175.6L648.6 176L649.6 176.7L650.6 177.2L651.6 177.5L652.6 177.6L653.6 177.5L654.6 177.3L655.6 177.1L656.6 177L657.6 177.3L658.6 177.7L659.6 178.3L660.6 178.7L661.6 178.7L662.6 178.4L663.6 178.2L664.6 178.3L665.6 178.7L666.6 179.1L667.6 179.5L668.6 179.8L669.6 180L670.6 180L671.6 180L672.6 179.9L673.6 179.8L674.6 180L675.6 180.4L676.6 180.8L677.6 180.9L678.6 180.9L679.6 180.7L680.6 180.6L681.6 180.6L682.6 180.9L683.6 181.3L684.6 181.6L685.6 181.7L686.6 181.5L687.6 181.1L688.6 180.9L689.6 181L690.6 181.2L691.6 181.4L692.6 181.6L693.6 181.7L694.6 181.8L695.6 181.7L696.6 181.6L697.6 181.6L698.6 181.6L699.6 181.8L700.6 181.7L701.6 181.4L702.6 181L703.6 180.7L704.6 180.8L705.6 181.2L706.6 181.8L707.6 182L708.6 182L709.6 181.9L710.6 181.7L711.6 181.7L712.6 181.8L713.6 181.8L714.6 181.6L715.6 181.5L716.6 181.5L717.6 181.7L718.6 181.9L719.6 182L720.6 181.9L721.6 181.8L722.6 182L723.6 182.4L724.6 182.7L725.6 182.8L726.6 182.9L727.6 182.9L728.6 183L729.6 183.1L730.6 183L731.6 182.8L732.6 182.7L733.6 182.8L734.6 182.9L735.6 182.8L736.6 182.7L737.6 182.6L738.6 182.8L739.6 183L740.6 183.2L741.6 183.3L742.6 183.4L743.6 183.4L744.6 183.3L745.6 183.2L746.6 183.1L747.6 182.9L748.6 182.9L749.6 182.9L750.6 182.9L751.6 182.9L752.6 182.9L753.6 183L754.6 183.2L755.6 183.3L756.6 183.5L757.6 183.6L758.6 183.8" stroke="#2a8fe0" stroke-width="7.2"/>
<path d="M-126.3 21.3L-124.3 21.6L-122.7 22.5L-121.3 24.5L-117.3 35.4L-114.9 42.4L-112.5 49.4L-110.1 56.4L-107.7 63.5L-105.3 70.5L-102.9 77.5L-100.5 84.5L-98.1 91.6L-95.7 98.6L-93.3 105.6L-92.3 107.7L-91.3 109.8L-90.3 111.8L-89.3 113.7L-88.3 115.7L-87.3 117.5L-86.3 119.3L-85.3 121L-84.3 122.6L-83.3 124.1L-82.3 125.6L-81.3 127.2L-80.3 128.9L-79.3 130.6L-78.3 132.4L-77.3 134L-76.3 135.6L-75.3 137.2L-74.3 138.7L-73.3 140.1L-72.3 141.7L-71.3 143.6L-70.3 145.6L-69.3 147.6L-68.3 149.4L-67.3 150.8L-66.3 152L-65.3 153.2L-64.3 154.2L-63.3 154.9L-62.3 155.7L-61.3 156.5L-60.3 157.4L-59.3 158.5L-58.3 159.4L-57.3 160L-56.3 160.5L-55.3 161.2L-54.3 161.9L-53.3 162.6L-52.3 163.1L-51.3 163.3L-50.3 163.6L-49.3 164.1L-48.3 164.9L-47.3 165.8L-46.3 166.7L-45.3 167.5L-44.3 168.3L-43.3 168.9L-42.3 169.4L-41.3 169.6L-40.3 169.7L-39.3 169.8L-38.3 169.9L-37.3 170.3L-36.3 170.8L-35.3 171.2L-34.3 171.5L-33.3 171.5L-32.3 171.6L-31.3 172.1L-30.3 172.8L-29.3 173.5L-28.3 174.1L-27.3 174.4L-26.3 174.4L-25.3 174.4L-24.3 174.3L-23.3 174.4L-22.3 174.9L-21.3 175.5L-20.3 176L-19.3 176.1L-18.3 176L-17.3 175.9L-16.3 176L-15.3 176.3L-14.3 176.6L-13.3 176.8L-12.3 177.2L-11.3 177.7L-10.3 178.3L-9.3 178.6L-8.3 178.7L-7.3 178.7L-6.3 178.8L-5.3 178.9L-4.3 179L-3.3 179L-2.3 178.9L-1.3 178.8L-0.3 178.9L0.7 179.2L1.7 179.4L2.7 179.5L3.7 179.6L4.7 179.7L5.7 179.8L6.7 180L7.7 180.2L8.7 180.5L9.7 180.6L10.7 180.7L11.7 180.6L12.7 180.4L13.7 180.2L14.7 180L15.7 179.9L16.7 179.8L17.7 179.7L18.7 179.5L19.7 179.5L20.7 179.6L21.7 179.8L22.7 180.1L23.7 180.4L24.7 180.6L25.7 180.4L26.7 180.2L27.7 180.2L28.7 180.3L29.7 180.5L30.7 180.5L31.7 180.5L32.7 180.4L33.7 180.5L34.7 180.8L35.7 181.4L36.7 182L37.7 182.3L38.7 182.4L39.7 182.4L40.7 182.4L41.7 182.4L42.7 182.5L43.7 182.5L44.7 182.4L45.7 182.4L46.7 182.4L47.7 182.4L48.7 182.4L49.7 182.3L50.7 182L51.7 181.8L52.7 181.7L53.7 181.9L54.7 182.2L55.7 182.4L56.7 182.6L57.7 182.7L58.7 182.7L59.7 182.8L60.7 182.8L61.7 182.7L62.7 182.7L63.7 182.8L64.7 183.1L65.7 183.3L66.7 183.1L67.7 182.7L68.7 182.4L69.7 182.4L70.7 182.7L71.7 183.2L72.7 183.4L73.7 183.5L74.7 183.3L75.7 183L76.7 182.9L77.7 182.8L78.7 183L79.7 183.3L80.7 183.5L81.7 183.5L82.7 183.4L83.7 183.1L84.7 182.8L85.7 182.7L86.7 182.9L87.7 183.2L88.7 183.7L89.7 183.9L90.7 183.8L91.7 183.7L92.7 183.6L93.7 183.7L94.7 183.8L95.1 184.1L97.1 183.8L98.7 182.9L100.1 180.9L104.1 171L106.5 164.5L108.9 157.9L111.3 151.4L113.7 144.9L116 138.3L118.4 131.8L120.8 125.2L123.2 118.7L125.6 112.1L128 105.6L129 102.5L130 99.5L131 96.6L132 93.7L133 91L134 88.3L135 85.8L136 83.3L137 80.9L138 78.5L139 76.2L140 73.9L141 71.8L142 69.9L143 68.3L144 66.7L145 65L146 63.4L147 61.9L148 60.6L149 59.2L150 57.8L151 56.5L152 55.3L153 54.3L154 53.4L155 52.4L156 51.3L157 50.3L158 49.2L159 48.1L160 46.9L161 45.7L162 44.7L163 43.7L164 42.8L165 42L166 41.4L167 41.1L168 40.9L169 40.3L170 39.5L171 38.7L172 38.1L173 37.7L174 37.4L175 36.9L176 36.2L177 35.6L178 35.3L179 35.1L180 34.8L181 34.4L182 33.7L183 32.9L184 32.1L185 31.5L186 31.1L187 30.9L188 30.8L189 30.6L190 30.1L191 29.4L192 28.7L193 28.1L194 27.8L195 27.9L196 27.9L197 27.7L198 27.6L199 27.5L200 27.2L201 27L202 26.7L203 26.4L204 26.1L205 25.8L206 25.5L207 25.2L208 25.1L209 25.1L210 25.2L211 25.2L212 25.2L213 25.1L214 24.7L215 24.3L216 24.1L217 23.8L218 23.7L219 23.6L220 23.6L221 23.7L222 23.9L223 24L224 23.8L225 23.5L226 23L227 22.7L228 22.8L229 23.2L230 23.7L231 24L232 24.4L233 24.6L234 24.5L235 24L236 23.3L237 22.7L238 22.2L239 22.1L240 22.1L241 22.2L242 22.4L243 22.7L244 22.9L245 22.9L246 22.7L247 22.4L248 22.2L249 22.2L250 22.2L251 22L252 21.8L253 21.6L254 21.6L255 21.9L256 22.3L257 22.3L258 22.1L259 21.9L260 21.8L261 22L262 22.4L263 22.5L264 22.4L265 22L266 21.3L267 20.7L268 20.4L269 20.5L270 21L271 21.6L272 21.9L273 22L274 21.9L275 21.7L276 21.5L277 21.3L278 21.4L279 21.7L280 22.1L281 22.5L282 22.6L283 22.5L284 22.2L285 21.8L286 21.5L287 21.4L288 21.3L289 21.4L290 21.5L291 21.6L292 21.8L293 21.9L294 21.9L295 21.7L296 21.3L297 21.1L298 21.1L299 21.3L300 21.3L301 21L302 20.6L303 20.3L304 20.2L305 20.4L306 20.6L307 20.6L308 20.6L309 20.5L310 20.5L311 20.7L312 21L313 21.1L314 21.3L315 21.3L316 21.3L316.3 21.3L318.3 21.6L319.9 22.5L321.3 24.5L325.3 35.4L327.7 42.4L330.1 49.4L332.5 56.4L334.9 63.5L337.3 70.5L339.7 77.5L342.1 84.5L344.5 91.6L346.9 98.6L349.3 105.6L350.3 107.7L351.3 109.8L352.3 111.8L353.3 113.7L354.3 115.7L355.3 117.5L356.3 119.3L357.3 121L358.3 122.7L359.3 124.3L360.3 125.9L361.3 127.4L362.3 128.9L363.3 130.5L364.3 132.2L365.3 133.9L366.3 135.6L367.3 137.2L368.3 138.8L369.3 140.4L370.3 142L371.3 143.7L372.3 145.4L373.3 147.2L374.3 148.8L375.3 150.3L376.3 151.5L377.3 152.6L378.3 153.8L379.3 154.9L380.3 156L381.3 156.9L382.3 157.8L383.3 158.5L384.3 159.3L385.3 159.9L386.3 160.5L387.3 161L388.3 161.7L389.3 162.4L390.3 163.2L391.3 164.1L392.3 164.7L393.3 164.9L394.3 164.8L395.3 164.8L396.3 165.3L397.3 166.2L398.3 167L399.3 167.5L400.3 167.7L401.3 167.8L402.3 168.2L403.3 168.9L404.3 169.6L405.3 170.2L406.3 170.7L407.3 171.2L408.3 171.8L409.3 172.4L410.3 172.7L411.3 172.8L412.3 172.9L413.3 173L414.3 173.1L415.3 173.1L416.3 173.1L417.3 173.2L418.3 173.6L419.3 174.2L420.3 174.6L421.3 174.8L422.3 174.9L423.3 175.1L424.3 175.4L425.3 175.7L426.3 175.8L427.3 175.9L428.3 176L429.3 176.5L430.3 177.1L431.3 177.6L432.3 177.9L433.3 178.1L434.3 178.1L435.3 178L436.3 178L437.3 178L438.3 178.3L439.3 178.4L440.3 178.4L441.3 178.4L442.3 178.6L443.3 178.9L444.3 179.2L445.3 179.4L446.3 179.5L447.3 179.9L448.3 180.4L449.3 180.8L450.3 181L451.3 180.9L452.3 180.8L453.3 180.7L454.3 180.7L455.3 180.7L456.3 180.7L457.3 180.7L458.3 180.6L459.3 180.7L460.3 180.9L461.3 181L462.3 180.9L463.3 180.8L464.3 180.9L465.3 181.3L466.3 181.8L467.3 182.1L468.3 182L469.3 181.9L470.3 181.9L471.3 182.1L472.3 182.2L473.3 182.3L474.3 182.1L475.3 181.9L476.3 181.7L477.3 181.5L478.3 181.4L479.3 181.5L480.3 181.9L481.3 182.3L482.3 182.4L483.3 182.1L484.3 181.4L485.3 180.8L486.3 180.6L487.3 180.7L488.3 181.3L489.3 182L490.3 182.6L491.3 183L492.3 183.2L493.3 183.2L494.3 183.2L495.3 183.1L496.3 182.9L497.3 182.7L498.3 182.6L499.3 182.5L500.3 182.6L501.3 182.7L502.3 182.8L503.3 183L504.3 183.1L505.3 183L506.3 183L507.3 182.9L508.3 182.9L509.3 182.9L510.3 182.9L511.3 182.9L512.3 183L513.3 183.1L514.3 183.4L515.3 183.5L516.3 183.5L517.3 183.4L518.3 183.1L519.3 182.7L520.3 182.5L521.3 182.7L522.3 183.1L523.3 183.6L524.3 183.7L525.3 183.5L526.3 183.2L527.3 183.1L528.3 183.2L529.3 183.6L530.3 183.8L531.3 183.9L532.3 183.9L533.3 183.9L534.3 183.9L535.3 183.9L536.3 183.8L537.3 183.8L537.7 184.1L539.7 183.8L541.3 182.9L542.7 180.9L546.7 171L549.1 164.5L551.5 157.9L553.9 151.4L556.3 144.9L558.6 138.3L561 131.8L563.4 125.2L565.8 118.7L568.2 112.1L570.6 105.6L571.6 102.5L572.6 99.5L573.6 96.6L574.6 93.7L575.6 91L576.6 88.3L577.6 85.8L578.6 83.3L579.6 80.8L580.6 78.3L581.6 76L582.6 73.8L583.6 71.8L584.6 69.9L585.6 68.2L586.6 66.5L587.6 65L588.6 63.4L589.6 62.1L590.6 60.8L591.6 59.5L592.6 58.2L593.6 56.8L594.6 55.5L595.6 54.5L596.6 53.7L597.6 53L598.6 51.9L599.6 50.4L600.6 48.9L601.6 47.7L602.6 46.7L603.6 45.8L604.6 44.7L605.6 43.7L606.6 43L607.6 42.5L608.6 42L609.6 41.6L610.6 41L611.6 40.2L612.6 39.2L613.6 38.1L614.6 37.2L615.6 36.7L616.6 36.6L617.6 36.6L618.6 36.3L619.6 35.7L620.6 35.1L621.6 34.5L622.6 34L623.6 33.5L624.6 32.9L625.6 32.2L626.6 31.4L627.6 30.8L628.6 30.5L629.6 30.5L630.6 30.7L631.6 30.7L632.6 30.5L633.6 30L634.6 29.6L635.6 29L636.6 28.4L637.6 27.9L638.6 27.7L639.6 27.5L640.6 27.4L641.6 27.2L642.6 27L643.6 26.9L644.6 26.9L645.6 26.6L646.6 26.3L647.6 26.1L648.6 26.1L649.6 26.1L650.6 25.9L651.6 25.4L652.6 24.9L653.6 24.5L654.6 24.5L655.6 24.5L656.6 24.4L657.6 24.4L658.6 24.3L659.6 24.4L660.6 24.5L661.6 24.6L662.6 24.6L663.6 24.5L664.6 24.3L665.6 24.1L666.6 23.8L667.6 23.4L668.6 23.1L669.6 22.7L670.6 22.7L671.6 22.8L672.6 23.1L673.6 23.5L674.6 23.7L675.6 23.7L676.6 23.5L677.6 23.2L678.6 23L679.6 22.9L680.6 23L681.6 23.1L682.6 23.1L683.6 22.9L684.6 22.7L685.6 22.4L686.6 22.3L687.6 22.4L688.6 22.5L689.6 22.4L690.6 22.2L691.6 22.1L692.6 22.1L693.6 22.2L694.6 22.2L695.6 22.2L696.6 22.2L697.6 22.2L698.6 22.3L699.6 22.5L700.6 22.7L701.6 22.7L702.6 22.6L703.6 22.3L704.6 21.9L705.6 21.5L706.6 21.2L707.6 21.2L708.6 21.4L709.6 21.6L710.6 21.7L711.6 21.5L712.6 21.2L713.6 21L714.6 21.1L715.6 21.3L716.6 21.5L717.6 21.6L718.6 21.6L719.6 21.6L720.6 21.7L721.6 21.9L722.6 22.1L723.6 22.2L724.6 22.2L725.6 22L726.6 21.8L727.6 21.9L728.6 22.2L729.6 22.3L730.6 22.4L731.6 22.3L732.6 22.2L733.6 22.2L734.6 22.3L735.6 22.2L736.6 22L737.6 21.8L738.6 21.5L739.6 21.1L740.6 21L741.6 21.2L742.6 21.8L743.6 22.4L744.6 22.5L745.6 22.4L746.6 22.1L747.6 21.8L748.6 21.6L749.6 21.1L750.6 20.6L751.6 20.3L752.6 20.3L753.6 20.7L754.6 21L755.6 21.1L756.6 21.1L757.6 21.2L758.6 21.3M-126.2 184.1L-124.2 183.8L-122.6 182.9L-121.2 180.9L-117.2 171L-114.8 164.5L-112.4 157.9L-110 151.4L-107.6 144.9L-105.3 138.3L-102.9 131.8L-100.5 125.2L-98.1 118.7L-95.7 112.1L-93.3 105.6L-92.3 102.5L-91.3 99.5L-90.3 96.6L-89.3 93.7L-88.3 91L-87.3 88.4L-86.3 85.8L-85.3 83.3L-84.3 80.8L-83.3 78.4L-82.3 76.1L-81.3 74L-80.3 72.1L-79.3 70.2L-78.3 68.4L-77.3 66.5L-76.3 64.7L-75.3 63.1L-74.3 61.6L-73.3 60.3L-72.3 59.1L-71.3 57.8L-70.3 56.6L-69.3 55.3L-68.3 54.2L-67.3 53.2L-66.3 52.2L-65.3 51.1L-64.3 49.8L-63.3 48.6L-62.3 47.8L-61.3 47.3L-60.3 46.9L-59.3 46.4L-58.3 45.7L-57.3 44.9L-56.3 44L-55.3 43L-54.3 41.9L-53.3 40.9L-52.3 40.2L-51.3 39.6L-50.3 39.1L-49.3 38.6L-48.3 38L-47.3 37.3L-46.3 36.8L-45.3 36.5L-44.3 36L-43.3 35.5L-42.3 34.9L-41.3 34.3L-40.3 33.8L-39.3 33.5L-38.3 33.3L-37.3 33L-36.3 32.6L-35.3 31.9L-34.3 31.3L-33.3 30.8L-32.3 30.4L-31.3 30L-30.3 29.5L-29.3 28.9L-28.3 28.5L-27.3 28.2L-26.3 28L-25.3 27.8L-24.3 27.7L-23.3 27.7L-22.3 27.7L-21.3 27.6L-20.3 27.2L-19.3 26.7L-18.3 26.4L-17.3 26.4L-16.3 26.7L-15.3 27L-14.3 27L-13.3 26.6L-12.3 25.9L-11.3 25.3L-10.3 25.1L-9.3 25.2L-8.3 25.3L-7.3 25.3L-6.3 25.1L-5.3 24.8L-4.3 24.4L-3.3 24.2L-2.3 24.1L-1.3 24L-0.3 24.1L0.7 24.2L1.7 24.3L2.7 24.4L3.7 24.4L4.7 24.1L5.7 23.8L6.7 23.4L7.7 23.2L8.7 23L9.7 23L10.7 22.9L11.7 22.9L12.7 23L13.7 23.1L14.7 23.1L15.7 23.2L16.7 23.2L17.7 23.1L18.7 22.8L19.7 22.6L20.7 22.4L21.7 22.4L22.7 22.6L23.7 22.8L24.7 22.8L25.7 22.8L26.7 22.9L27.7 23.1L28.7 23.4L29.7 23.5L30.7 23.4L31.7 23.3L32.7 23.2L33.7 23.1L34.7 22.9L35.7 22.6L36.7 22.2L37.7 21.9L38.7 21.7L39.7 21.5L40.7 21.4L41.7 21.4L42.7 21.3L43.7 21.3L44.7 21.2L45.7 21.1L46.7 21L47.7 21L48.7 21L49.7 21.2L50.7 21.5L51.7 21.8L52.7 21.9L53.7 21.8L54.7 21.7L55.7 21.4L56.7 21.2L57.7 21.2L58.7 21.4L59.7 21.6L60.7 21.8L61.7 21.8L62.7 21.7L63.7 21.6L64.7 21.6L65.7 21.6L66.7 21.6L67.7 21.7L68.7 21.8L69.7 21.8L70.7 21.7L71.7 21.6L72.7 21.5L73.7 21.4L74.7 21.3L75.7 21L76.7 20.7L77.7 20.5L78.7 20.3L79.7 20.2L80.7 20.1L81.7 20.2L82.7 20.5L83.7 20.7L84.7 20.8L85.7 20.9L86.7 21L87.7 21.3L88.7 21.6L89.7 21.8L90.7 21.8L91.7 21.7L92.7 21.6L93.7 21.5L94.7 21.3L95 21.3L97 21.6L98.6 22.5L100 24.5L104 35.4L106.4 42.4L108.8 49.4L111.2 56.4L113.6 63.5L116 70.5L118.4 77.5L120.8 84.5L123.2 91.6L125.6 98.6L128 105.6L129 107.7L130 109.8L131 111.8L132 113.7L133 115.7L134 117.5L135 119.3L136 121.1L137 122.8L138 124.4L139 125.9L140 127.5L141 129.1L142 130.6L143 132.3L144 134L145 135.7L146 137.3L147 138.9L148 140.5L149 142.3L150 144L151 145.7L152 147.3L153 148.7L154 149.8L155 150.6L156 151.4L157 152.3L158 153.5L159 155L160 156.3L161 157.5L162 158.4L163 159.2L164 160L165 160.8L166 161.4L167 162L168 162.5L169 162.8L170 163L171 163.3L172 163.9L173 164.7L174 165.6L175 166.5L176 167.3L177 168L178 168.6L179 169.2L180 169.8L181 170.3L182 170.5L183 170.6L184 170.6L185 170.6L186 170.8L187 171.1L188 171.3L189 171.6L190 172L191 172.4L192 172.6L193 172.9L194 173L195 173.4L196 173.9L197 174.4L198 174.8L199 174.9L200 174.8L201 174.8L202 175.1L203 175.6L204 176L205 176.3L206 176.6L207 177L208 177.3L209 177.5L210 177.7L211 178L212 178.4L213 178.7L214 178.7L215 178.4L216 178.1L217 178L218 178.2L219 178.8L220 179.2L221 179.3L222 179.2L223 179.1L224 179.2L225 179.5L226 179.9L227 180.2L228 180.4L229 180.5L230 180.5L231 180.5L232 180.4L233 180.6L234 180.8L235 180.9L236 181L237 181.1L238 181.3L239 181.5L240 181.6L241 181.3L242 181.1L243 181L244 181L245 181L246 181L247 181.2L248 181.5L249 181.7L250 181.8L251 181.8L252 181.6L253 181.5L254 181.5L255 181.4L256 181.3L257 181.3L258 181.5L259 181.9L260 182.3L261 182.5L262 182.5L263 182.3L264 182.1L265 182L266 181.9L267 181.7L268 181.6L269 181.5L270 181.6L271 181.6L272 181.6L273 181.7L274 181.9L275 182.2L276 182.4L277 182.7L278 183L279 183.3L280 183.6L281 183.5L282 183.1L283 182.5L284 181.9L285 181.7L286 181.8L287 182.1L288 182.3L289 182.1L290 182L291 182.1L292 182.5L293 183.2L294 183.8L295 184L296 183.6L297 183.3L298 183.1L299 183.1L300 183.2L301 183.3L302 183.2L303 183.2L304 183.3L305 183.3L306 183.5L307 183.6L308 183.7L309 183.7L310 183.8L311 183.9L312 184L313 183.9L314 183.8L315 183.7L316 183.8L316.4 184.1L318.4 183.8L320 182.9L321.4 180.9L325.4 171L327.8 164.5L330.2 157.9L332.6 151.4L334.9 144.9L337.3 138.3L339.7 131.8L342.1 125.2L344.5 118.7L346.9 112.1L349.3 105.6L350.3 102.5L351.3 99.5L352.3 96.6L353.3 93.7L354.3 91L355.3 88.4L356.3 85.8L357.3 83.3L358.3 80.8L359.3 78.4L360.3 76.1L361.3 73.9L362.3 71.7L363.3 69.7L364.3 67.9L365.3 66.4L366.3 64.9L367.3 63.4L368.3 61.9L369.3 60.3L370.3 58.8L371.3 57.4L372.3 56.2L373.3 55L374.3 53.8L375.3 52.7L376.3 51.5L377.3 50.4L378.3 49.3L379.3 48.2L380.3 47.2L381.3 46.3L382.3 45.5L383.3 44.7L384.3 44L385.3 43.5L386.3 43L387.3 42.6L388.3 42L389.3 41.1L390.3 40.2L391.3 39.6L392.3 39.1L393.3 38.7L394.3 37.9L395.3 37L396.3 36L397.3 35.4L398.3 35.1L399.3 34.9L400.3 34.5L401.3 33.9L402.3 33.3L403.3 33L404.3 33L405.3 33.1L406.3 32.9L407.3 32.4L408.3 31.9L409.3 31.4L410.3 31L411.3 30.6L412.3 30L413.3 29.2L414.3 28.6L415.3 28.2L416.3 28L417.3 28L418.3 28.1L419.3 28L420.3 27.8L421.3 27.6L422.3 27.3L423.3 27L424.3 26.6L425.3 26L426.3 25.5L427.3 25.4L428.3 25.8L429.3 26.3L430.3 26.5L431.3 26.1L432.3 25.5L433.3 25.1L434.3 25.1L435.3 25.3L436.3 25.2L437.3 24.6L438.3 23.8L439.3 23.2L440.3 23L441.3 23.2L442.3 23.5L443.3 23.8L444.3 24.1L445.3 24.1L446.3 24.2L447.3 24.2L448.3 24.1L449.3 23.9L450.3 23.7L451.3 23.5L452.3 23.3L453.3 23.2L454.3 23.3L455.3 23.5L456.3 23.9L457.3 24.2L458.3 24.5L459.3 24.5L460.3 24.4L461.3 24.1L462.3 23.8L463.3 23.5L464.3 23.2L465.3 22.8L466.3 22.5L467.3 22.4L468.3 22.6L469.3 22.7L470.3 22.6L471.3 22.4L472.3 22.3L473.3 22.3L474.3 22.5L475.3 22.6L476.3 22.7L477.3 22.7L478.3 22.5L479.3 22.2L480.3 21.8L481.3 21.5L482.3 21.4L483.3 21.5L484.3 21.7L485.3 21.9L486.3 22.1L487.3 22.2L488.3 22.2L489.3 22.2L490.3 22L491.3 22L492.3 22L493.3 21.9L494.3 21.9L495.3 22L496.3 22.2L497.3 22.4L498.3 22.5L499.3 22.2L500.3 21.7L501.3 21.4L502.3 21.3L503.3 21.3L504.3 21.3L505.3 21.3L506.3 21.2L507.3 21.3L508.3 21.5L509.3 21.6L510.3 21.5L511.3 21.3L512.3 21L513.3 20.8L514.3 20.8L515.3 20.8L516.3 20.8L517.3 20.8L518.3 20.8L519.3 20.7L520.3 20.7L521.3 20.7L522.3 20.9L523.3 21.1L524.3 21.3L525.3 21.5L526.3 21.6L527.3 21.6L528.3 21.5L529.3 21.3L530.3 21.1L531.3 21.1L532.3 21.2L533.3 21.3L534.3 21.3L535.3 21.3L536.3 21.3L537.3 21.3L537.6 21.3L539.6 21.6L541.2 22.5L542.6 24.5L546.6 35.4L549 42.4L551.4 49.4L553.8 56.4L556.2 63.5L558.6 70.5L561 77.5L563.4 84.5L565.8 91.6L568.2 98.6L570.6 105.6L571.6 107.7L572.6 109.8L573.6 111.8L574.6 113.7L575.6 115.7L576.6 117.5L577.6 119.3L578.6 121L579.6 122.6L580.6 124.1L581.6 125.7L582.6 127.3L583.6 129.1L584.6 130.8L585.6 132.4L586.6 134L587.6 135.6L588.6 137.3L589.6 139L590.6 140.7L591.6 142.4L592.6 144L593.6 145.4L594.6 146.7L595.6 148L596.6 149.5L597.6 151L598.6 152.5L599.6 153.8L600.6 155.1L601.6 156.2L602.6 157.1L603.6 158L604.6 159.1L605.6 160.2L606.6 161.2L607.6 161.9L608.6 162.3L609.6 162.5L610.6 162.8L611.6 163.4L612.6 163.8L613.6 164.2L614.6 164.4L615.6 164.9L616.6 165.9L617.6 167L618.6 167.9L619.6 168.2L620.6 168.2L621.6 168.1L622.6 168.3L623.6 168.5L624.6 169L625.6 169.5L626.6 170.1L627.6 170.8L628.6 171.5L629.6 172L630.6 172.3L631.6 172.5L632.6 172.5L633.6 172.5L634.6 172.5L635.6 172.7L636.6 173L637.6 173.5L638.6 174L639.6 174.5L640.6 174.8L641.6 175L642.6 175L643.6 175.1L644.6 175.1L645.6 175.1L646.6 175.3L647.6 175.6L648.6 176L649.6 176.7L650.6 177.2L651.6 177.5L652.6 177.6L653.6 177.5L654.6 177.3L655.6 177.1L656.6 177L657.6 177.3L658.6 177.7L659.6 178.3L660.6 178.7L661.6 178.7L662.6 178.4L663.6 178.2L664.6 178.3L665.6 178.7L666.6 179.1L667.6 179.5L668.6 179.8L669.6 180L670.6 180L671.6 180L672.6 179.9L673.6 179.8L674.6 180L675.6 180.4L676.6 180.8L677.6 180.9L678.6 180.9L679.6 180.7L680.6 180.6L681.6 180.6L682.6 180.9L683.6 181.3L684.6 181.6L685.6 181.7L686.6 181.5L687.6 181.1L688.6 180.9L689.6 181L690.6 181.2L691.6 181.4L692.6 181.6L693.6 181.7L694.6 181.8L695.6 181.7L696.6 181.6L697.6 181.6L698.6 181.6L699.6 181.8L700.6 181.7L701.6 181.4L702.6 181L703.6 180.7L704.6 180.8L705.6 181.2L706.6 181.8L707.6 182L708.6 182L709.6 181.9L710.6 181.7L711.6 181.7L712.6 181.8L713.6 181.8L714.6 181.6L715.6 181.5L716.6 181.5L717.6 181.7L718.6 181.9L719.6 182L720.6 181.9L721.6 181.8L722.6 182L723.6 182.4L724.6 182.7L725.6 182.8L726.6 182.9L727.6 182.9L728.6 183L729.6 183.1L730.6 183L731.6 182.8L732.6 182.7L733.6 182.8L734.6 182.9L735.6 182.8L736.6 182.7L737.6 182.6L738.6 182.8L739.6 183L740.6 183.2L741.6 183.3L742.6 183.4L743.6 183.4L744.6 183.3L745.6 183.2L746.6 183.1L747.6 182.9L748.6 182.9L749.6 182.9L750.6 182.9L751.6 182.9L752.6 182.9L753.6 183L754.6 183.2L755.6 183.3L756.6 183.5L757.6 183.6L758.6 183.8" stroke="#3fd0a0" stroke-width="6.3"/>
<path d="M-126.3 21.3L-124.3 21.6L-122.7 22.5L-121.3 24.5L-117.3 35.4L-114.9 42.4L-112.5 49.4L-110.1 56.4L-107.7 63.5L-105.3 70.5L-102.9 77.5L-100.5 84.5L-98.1 91.6L-95.7 98.6L-93.3 105.6L-92.3 107.7L-91.3 109.8L-90.3 111.8L-89.3 113.7L-88.3 115.7L-87.3 117.5L-86.3 119.3L-85.3 121L-84.3 122.6L-83.3 124.1L-82.3 125.6L-81.3 127.2L-80.3 128.9L-79.3 130.6L-78.3 132.4L-77.3 134L-76.3 135.6L-75.3 137.2L-74.3 138.7L-73.3 140.1L-72.3 141.7L-71.3 143.6L-70.3 145.6L-69.3 147.6L-68.3 149.4L-67.3 150.8L-66.3 152L-65.3 153.2L-64.3 154.2L-63.3 154.9L-62.3 155.7L-61.3 156.5L-60.3 157.4L-59.3 158.5L-58.3 159.4L-57.3 160L-56.3 160.5L-55.3 161.2L-54.3 161.9L-53.3 162.6L-52.3 163.1L-51.3 163.3L-50.3 163.6L-49.3 164.1L-48.3 164.9L-47.3 165.8L-46.3 166.7L-45.3 167.5L-44.3 168.3L-43.3 168.9L-42.3 169.4L-41.3 169.6L-40.3 169.7L-39.3 169.8L-38.3 169.9L-37.3 170.3L-36.3 170.8L-35.3 171.2L-34.3 171.5L-33.3 171.5L-32.3 171.6L-31.3 172.1L-30.3 172.8L-29.3 173.5L-28.3 174.1L-27.3 174.4L-26.3 174.4L-25.3 174.4L-24.3 174.3L-23.3 174.4L-22.3 174.9L-21.3 175.5L-20.3 176L-19.3 176.1L-18.3 176L-17.3 175.9L-16.3 176L-15.3 176.3L-14.3 176.6L-13.3 176.8L-12.3 177.2L-11.3 177.7L-10.3 178.3L-9.3 178.6L-8.3 178.7L-7.3 178.7L-6.3 178.8L-5.3 178.9L-4.3 179L-3.3 179L-2.3 178.9L-1.3 178.8L-0.3 178.9L0.7 179.2L1.7 179.4L2.7 179.5L3.7 179.6L4.7 179.7L5.7 179.8L6.7 180L7.7 180.2L8.7 180.5L9.7 180.6L10.7 180.7L11.7 180.6L12.7 180.4L13.7 180.2L14.7 180L15.7 179.9L16.7 179.8L17.7 179.7L18.7 179.5L19.7 179.5L20.7 179.6L21.7 179.8L22.7 180.1L23.7 180.4L24.7 180.6L25.7 180.4L26.7 180.2L27.7 180.2L28.7 180.3L29.7 180.5L30.7 180.5L31.7 180.5L32.7 180.4L33.7 180.5L34.7 180.8L35.7 181.4L36.7 182L37.7 182.3L38.7 182.4L39.7 182.4L40.7 182.4L41.7 182.4L42.7 182.5L43.7 182.5L44.7 182.4L45.7 182.4L46.7 182.4L47.7 182.4L48.7 182.4L49.7 182.3L50.7 182L51.7 181.8L52.7 181.7L53.7 181.9L54.7 182.2L55.7 182.4L56.7 182.6L57.7 182.7L58.7 182.7L59.7 182.8L60.7 182.8L61.7 182.7L62.7 182.7L63.7 182.8L64.7 183.1L65.7 183.3L66.7 183.1L67.7 182.7L68.7 182.4L69.7 182.4L70.7 182.7L71.7 183.2L72.7 183.4L73.7 183.5L74.7 183.3L75.7 183L76.7 182.9L77.7 182.8L78.7 183L79.7 183.3L80.7 183.5L81.7 183.5L82.7 183.4L83.7 183.1L84.7 182.8L85.7 182.7L86.7 182.9L87.7 183.2L88.7 183.7L89.7 183.9L90.7 183.8L91.7 183.7L92.7 183.6L93.7 183.7L94.7 183.8L95.1 184.1L97.1 183.8L98.7 182.9L100.1 180.9L104.1 171L106.5 164.5L108.9 157.9L111.3 151.4L113.7 144.9L116 138.3L118.4 131.8L120.8 125.2L123.2 118.7L125.6 112.1L128 105.6L129 102.5L130 99.5L131 96.6L132 93.7L133 91L134 88.3L135 85.8L136 83.3L137 80.9L138 78.5L139 76.2L140 73.9L141 71.8L142 69.9L143 68.3L144 66.7L145 65L146 63.4L147 61.9L148 60.6L149 59.2L150 57.8L151 56.5L152 55.3L153 54.3L154 53.4L155 52.4L156 51.3L157 50.3L158 49.2L159 48.1L160 46.9L161 45.7L162 44.7L163 43.7L164 42.8L165 42L166 41.4L167 41.1L168 40.9L169 40.3L170 39.5L171 38.7L172 38.1L173 37.7L174 37.4L175 36.9L176 36.2L177 35.6L178 35.3L179 35.1L180 34.8L181 34.4L182 33.7L183 32.9L184 32.1L185 31.5L186 31.1L187 30.9L188 30.8L189 30.6L190 30.1L191 29.4L192 28.7L193 28.1L194 27.8L195 27.9L196 27.9L197 27.7L198 27.6L199 27.5L200 27.2L201 27L202 26.7L203 26.4L204 26.1L205 25.8L206 25.5L207 25.2L208 25.1L209 25.1L210 25.2L211 25.2L212 25.2L213 25.1L214 24.7L215 24.3L216 24.1L217 23.8L218 23.7L219 23.6L220 23.6L221 23.7L222 23.9L223 24L224 23.8L225 23.5L226 23L227 22.7L228 22.8L229 23.2L230 23.7L231 24L232 24.4L233 24.6L234 24.5L235 24L236 23.3L237 22.7L238 22.2L239 22.1L240 22.1L241 22.2L242 22.4L243 22.7L244 22.9L245 22.9L246 22.7L247 22.4L248 22.2L249 22.2L250 22.2L251 22L252 21.8L253 21.6L254 21.6L255 21.9L256 22.3L257 22.3L258 22.1L259 21.9L260 21.8L261 22L262 22.4L263 22.5L264 22.4L265 22L266 21.3L267 20.7L268 20.4L269 20.5L270 21L271 21.6L272 21.9L273 22L274 21.9L275 21.7L276 21.5L277 21.3L278 21.4L279 21.7L280 22.1L281 22.5L282 22.6L283 22.5L284 22.2L285 21.8L286 21.5L287 21.4L288 21.3L289 21.4L290 21.5L291 21.6L292 21.8L293 21.9L294 21.9L295 21.7L296 21.3L297 21.1L298 21.1L299 21.3L300 21.3L301 21L302 20.6L303 20.3L304 20.2L305 20.4L306 20.6L307 20.6L308 20.6L309 20.5L310 20.5L311 20.7L312 21L313 21.1L314 21.3L315 21.3L316 21.3L316.3 21.3L318.3 21.6L319.9 22.5L321.3 24.5L325.3 35.4L327.7 42.4L330.1 49.4L332.5 56.4L334.9 63.5L337.3 70.5L339.7 77.5L342.1 84.5L344.5 91.6L346.9 98.6L349.3 105.6L350.3 107.7L351.3 109.8L352.3 111.8L353.3 113.7L354.3 115.7L355.3 117.5L356.3 119.3L357.3 121L358.3 122.7L359.3 124.3L360.3 125.9L361.3 127.4L362.3 128.9L363.3 130.5L364.3 132.2L365.3 133.9L366.3 135.6L367.3 137.2L368.3 138.8L369.3 140.4L370.3 142L371.3 143.7L372.3 145.4L373.3 147.2L374.3 148.8L375.3 150.3L376.3 151.5L377.3 152.6L378.3 153.8L379.3 154.9L380.3 156L381.3 156.9L382.3 157.8L383.3 158.5L384.3 159.3L385.3 159.9L386.3 160.5L387.3 161L388.3 161.7L389.3 162.4L390.3 163.2L391.3 164.1L392.3 164.7L393.3 164.9L394.3 164.8L395.3 164.8L396.3 165.3L397.3 166.2L398.3 167L399.3 167.5L400.3 167.7L401.3 167.8L402.3 168.2L403.3 168.9L404.3 169.6L405.3 170.2L406.3 170.7L407.3 171.2L408.3 171.8L409.3 172.4L410.3 172.7L411.3 172.8L412.3 172.9L413.3 173L414.3 173.1L415.3 173.1L416.3 173.1L417.3 173.2L418.3 173.6L419.3 174.2L420.3 174.6L421.3 174.8L422.3 174.9L423.3 175.1L424.3 175.4L425.3 175.7L426.3 175.8L427.3 175.9L428.3 176L429.3 176.5L430.3 177.1L431.3 177.6L432.3 177.9L433.3 178.1L434.3 178.1L435.3 178L436.3 178L437.3 178L438.3 178.3L439.3 178.4L440.3 178.4L441.3 178.4L442.3 178.6L443.3 178.9L444.3 179.2L445.3 179.4L446.3 179.5L447.3 179.9L448.3 180.4L449.3 180.8L450.3 181L451.3 180.9L452.3 180.8L453.3 180.7L454.3 180.7L455.3 180.7L456.3 180.7L457.3 180.7L458.3 180.6L459.3 180.7L460.3 180.9L461.3 181L462.3 180.9L463.3 180.8L464.3 180.9L465.3 181.3L466.3 181.8L467.3 182.1L468.3 182L469.3 181.9L470.3 181.9L471.3 182.1L472.3 182.2L473.3 182.3L474.3 182.1L475.3 181.9L476.3 181.7L477.3 181.5L478.3 181.4L479.3 181.5L480.3 181.9L481.3 182.3L482.3 182.4L483.3 182.1L484.3 181.4L485.3 180.8L486.3 180.6L487.3 180.7L488.3 181.3L489.3 182L490.3 182.6L491.3 183L492.3 183.2L493.3 183.2L494.3 183.2L495.3 183.1L496.3 182.9L497.3 182.7L498.3 182.6L499.3 182.5L500.3 182.6L501.3 182.7L502.3 182.8L503.3 183L504.3 183.1L505.3 183L506.3 183L507.3 182.9L508.3 182.9L509.3 182.9L510.3 182.9L511.3 182.9L512.3 183L513.3 183.1L514.3 183.4L515.3 183.5L516.3 183.5L517.3 183.4L518.3 183.1L519.3 182.7L520.3 182.5L521.3 182.7L522.3 183.1L523.3 183.6L524.3 183.7L525.3 183.5L526.3 183.2L527.3 183.1L528.3 183.2L529.3 183.6L530.3 183.8L531.3 183.9L532.3 183.9L533.3 183.9L534.3 183.9L535.3 183.9L536.3 183.8L537.3 183.8L537.7 184.1L539.7 183.8L541.3 182.9L542.7 180.9L546.7 171L549.1 164.5L551.5 157.9L553.9 151.4L556.3 144.9L558.6 138.3L561 131.8L563.4 125.2L565.8 118.7L568.2 112.1L570.6 105.6L571.6 102.5L572.6 99.5L573.6 96.6L574.6 93.7L575.6 91L576.6 88.3L577.6 85.8L578.6 83.3L579.6 80.8L580.6 78.3L581.6 76L582.6 73.8L583.6 71.8L584.6 69.9L585.6 68.2L586.6 66.5L587.6 65L588.6 63.4L589.6 62.1L590.6 60.8L591.6 59.5L592.6 58.2L593.6 56.8L594.6 55.5L595.6 54.5L596.6 53.7L597.6 53L598.6 51.9L599.6 50.4L600.6 48.9L601.6 47.7L602.6 46.7L603.6 45.8L604.6 44.7L605.6 43.7L606.6 43L607.6 42.5L608.6 42L609.6 41.6L610.6 41L611.6 40.2L612.6 39.2L613.6 38.1L614.6 37.2L615.6 36.7L616.6 36.6L617.6 36.6L618.6 36.3L619.6 35.7L620.6 35.1L621.6 34.5L622.6 34L623.6 33.5L624.6 32.9L625.6 32.2L626.6 31.4L627.6 30.8L628.6 30.5L629.6 30.5L630.6 30.7L631.6 30.7L632.6 30.5L633.6 30L634.6 29.6L635.6 29L636.6 28.4L637.6 27.9L638.6 27.7L639.6 27.5L640.6 27.4L641.6 27.2L642.6 27L643.6 26.9L644.6 26.9L645.6 26.6L646.6 26.3L647.6 26.1L648.6 26.1L649.6 26.1L650.6 25.9L651.6 25.4L652.6 24.9L653.6 24.5L654.6 24.5L655.6 24.5L656.6 24.4L657.6 24.4L658.6 24.3L659.6 24.4L660.6 24.5L661.6 24.6L662.6 24.6L663.6 24.5L664.6 24.3L665.6 24.1L666.6 23.8L667.6 23.4L668.6 23.1L669.6 22.7L670.6 22.7L671.6 22.8L672.6 23.1L673.6 23.5L674.6 23.7L675.6 23.7L676.6 23.5L677.6 23.2L678.6 23L679.6 22.9L680.6 23L681.6 23.1L682.6 23.1L683.6 22.9L684.6 22.7L685.6 22.4L686.6 22.3L687.6 22.4L688.6 22.5L689.6 22.4L690.6 22.2L691.6 22.1L692.6 22.1L693.6 22.2L694.6 22.2L695.6 22.2L696.6 22.2L697.6 22.2L698.6 22.3L699.6 22.5L700.6 22.7L701.6 22.7L702.6 22.6L703.6 22.3L704.6 21.9L705.6 21.5L706.6 21.2L707.6 21.2L708.6 21.4L709.6 21.6L710.6 21.7L711.6 21.5L712.6 21.2L713.6 21L714.6 21.1L715.6 21.3L716.6 21.5L717.6 21.6L718.6 21.6L719.6 21.6L720.6 21.7L721.6 21.9L722.6 22.1L723.6 22.2L724.6 22.2L725.6 22L726.6 21.8L727.6 21.9L728.6 22.2L729.6 22.3L730.6 22.4L731.6 22.3L732.6 22.2L733.6 22.2L734.6 22.3L735.6 22.2L736.6 22L737.6 21.8L738.6 21.5L739.6 21.1L740.6 21L741.6 21.2L742.6 21.8L743.6 22.4L744.6 22.5L745.6 22.4L746.6 22.1L747.6 21.8L748.6 21.6L749.6 21.1L750.6 20.6L751.6 20.3L752.6 20.3L753.6 20.7L754.6 21L755.6 21.1L756.6 21.1L757.6 21.2L758.6 21.3M-126.2 184.1L-124.2 183.8L-122.6 182.9L-121.2 180.9L-117.2 171L-114.8 164.5L-112.4 157.9L-110 151.4L-107.6 144.9L-105.3 138.3L-102.9 131.8L-100.5 125.2L-98.1 118.7L-95.7 112.1L-93.3 105.6L-92.3 102.5L-91.3 99.5L-90.3 96.6L-89.3 93.7L-88.3 91L-87.3 88.4L-86.3 85.8L-85.3 83.3L-84.3 80.8L-83.3 78.4L-82.3 76.1L-81.3 74L-80.3 72.1L-79.3 70.2L-78.3 68.4L-77.3 66.5L-76.3 64.7L-75.3 63.1L-74.3 61.6L-73.3 60.3L-72.3 59.1L-71.3 57.8L-70.3 56.6L-69.3 55.3L-68.3 54.2L-67.3 53.2L-66.3 52.2L-65.3 51.1L-64.3 49.8L-63.3 48.6L-62.3 47.8L-61.3 47.3L-60.3 46.9L-59.3 46.4L-58.3 45.7L-57.3 44.9L-56.3 44L-55.3 43L-54.3 41.9L-53.3 40.9L-52.3 40.2L-51.3 39.6L-50.3 39.1L-49.3 38.6L-48.3 38L-47.3 37.3L-46.3 36.8L-45.3 36.5L-44.3 36L-43.3 35.5L-42.3 34.9L-41.3 34.3L-40.3 33.8L-39.3 33.5L-38.3 33.3L-37.3 33L-36.3 32.6L-35.3 31.9L-34.3 31.3L-33.3 30.8L-32.3 30.4L-31.3 30L-30.3 29.5L-29.3 28.9L-28.3 28.5L-27.3 28.2L-26.3 28L-25.3 27.8L-24.3 27.7L-23.3 27.7L-22.3 27.7L-21.3 27.6L-20.3 27.2L-19.3 26.7L-18.3 26.4L-17.3 26.4L-16.3 26.7L-15.3 27L-14.3 27L-13.3 26.6L-12.3 25.9L-11.3 25.3L-10.3 25.1L-9.3 25.2L-8.3 25.3L-7.3 25.3L-6.3 25.1L-5.3 24.8L-4.3 24.4L-3.3 24.2L-2.3 24.1L-1.3 24L-0.3 24.1L0.7 24.2L1.7 24.3L2.7 24.4L3.7 24.4L4.7 24.1L5.7 23.8L6.7 23.4L7.7 23.2L8.7 23L9.7 23L10.7 22.9L11.7 22.9L12.7 23L13.7 23.1L14.7 23.1L15.7 23.2L16.7 23.2L17.7 23.1L18.7 22.8L19.7 22.6L20.7 22.4L21.7 22.4L22.7 22.6L23.7 22.8L24.7 22.8L25.7 22.8L26.7 22.9L27.7 23.1L28.7 23.4L29.7 23.5L30.7 23.4L31.7 23.3L32.7 23.2L33.7 23.1L34.7 22.9L35.7 22.6L36.7 22.2L37.7 21.9L38.7 21.7L39.7 21.5L40.7 21.4L41.7 21.4L42.7 21.3L43.7 21.3L44.7 21.2L45.7 21.1L46.7 21L47.7 21L48.7 21L49.7 21.2L50.7 21.5L51.7 21.8L52.7 21.9L53.7 21.8L54.7 21.7L55.7 21.4L56.7 21.2L57.7 21.2L58.7 21.4L59.7 21.6L60.7 21.8L61.7 21.8L62.7 21.7L63.7 21.6L64.7 21.6L65.7 21.6L66.7 21.6L67.7 21.7L68.7 21.8L69.7 21.8L70.7 21.7L71.7 21.6L72.7 21.5L73.7 21.4L74.7 21.3L75.7 21L76.7 20.7L77.7 20.5L78.7 20.3L79.7 20.2L80.7 20.1L81.7 20.2L82.7 20.5L83.7 20.7L84.7 20.8L85.7 20.9L86.7 21L87.7 21.3L88.7 21.6L89.7 21.8L90.7 21.8L91.7 21.7L92.7 21.6L93.7 21.5L94.7 21.3L95 21.3L97 21.6L98.6 22.5L100 24.5L104 35.4L106.4 42.4L108.8 49.4L111.2 56.4L113.6 63.5L116 70.5L118.4 77.5L120.8 84.5L123.2 91.6L125.6 98.6L128 105.6L129 107.7L130 109.8L131 111.8L132 113.7L133 115.7L134 117.5L135 119.3L136 121.1L137 122.8L138 124.4L139 125.9L140 127.5L141 129.1L142 130.6L143 132.3L144 134L145 135.7L146 137.3L147 138.9L148 140.5L149 142.3L150 144L151 145.7L152 147.3L153 148.7L154 149.8L155 150.6L156 151.4L157 152.3L158 153.5L159 155L160 156.3L161 157.5L162 158.4L163 159.2L164 160L165 160.8L166 161.4L167 162L168 162.5L169 162.8L170 163L171 163.3L172 163.9L173 164.7L174 165.6L175 166.5L176 167.3L177 168L178 168.6L179 169.2L180 169.8L181 170.3L182 170.5L183 170.6L184 170.6L185 170.6L186 170.8L187 171.1L188 171.3L189 171.6L190 172L191 172.4L192 172.6L193 172.9L194 173L195 173.4L196 173.9L197 174.4L198 174.8L199 174.9L200 174.8L201 174.8L202 175.1L203 175.6L204 176L205 176.3L206 176.6L207 177L208 177.3L209 177.5L210 177.7L211 178L212 178.4L213 178.7L214 178.7L215 178.4L216 178.1L217 178L218 178.2L219 178.8L220 179.2L221 179.3L222 179.2L223 179.1L224 179.2L225 179.5L226 179.9L227 180.2L228 180.4L229 180.5L230 180.5L231 180.5L232 180.4L233 180.6L234 180.8L235 180.9L236 181L237 181.1L238 181.3L239 181.5L240 181.6L241 181.3L242 181.1L243 181L244 181L245 181L246 181L247 181.2L248 181.5L249 181.7L250 181.8L251 181.8L252 181.6L253 181.5L254 181.5L255 181.4L256 181.3L257 181.3L258 181.5L259 181.9L260 182.3L261 182.5L262 182.5L263 182.3L264 182.1L265 182L266 181.9L267 181.7L268 181.6L269 181.5L270 181.6L271 181.6L272 181.6L273 181.7L274 181.9L275 182.2L276 182.4L277 182.7L278 183L279 183.3L280 183.6L281 183.5L282 183.1L283 182.5L284 181.9L285 181.7L286 181.8L287 182.1L288 182.3L289 182.1L290 182L291 182.1L292 182.5L293 183.2L294 183.8L295 184L296 183.6L297 183.3L298 183.1L299 183.1L300 183.2L301 183.3L302 183.2L303 183.2L304 183.3L305 183.3L306 183.5L307 183.6L308 183.7L309 183.7L310 183.8L311 183.9L312 184L313 183.9L314 183.8L315 183.7L316 183.8L316.4 184.1L318.4 183.8L320 182.9L321.4 180.9L325.4 171L327.8 164.5L330.2 157.9L332.6 151.4L334.9 144.9L337.3 138.3L339.7 131.8L342.1 125.2L344.5 118.7L346.9 112.1L349.3 105.6L350.3 102.5L351.3 99.5L352.3 96.6L353.3 93.7L354.3 91L355.3 88.4L356.3 85.8L357.3 83.3L358.3 80.8L359.3 78.4L360.3 76.1L361.3 73.9L362.3 71.7L363.3 69.7L364.3 67.9L365.3 66.4L366.3 64.9L367.3 63.4L368.3 61.9L369.3 60.3L370.3 58.8L371.3 57.4L372.3 56.2L373.3 55L374.3 53.8L375.3 52.7L376.3 51.5L377.3 50.4L378.3 49.3L379.3 48.2L380.3 47.2L381.3 46.3L382.3 45.5L383.3 44.7L384.3 44L385.3 43.5L386.3 43L387.3 42.6L388.3 42L389.3 41.1L390.3 40.2L391.3 39.6L392.3 39.1L393.3 38.7L394.3 37.9L395.3 37L396.3 36L397.3 35.4L398.3 35.1L399.3 34.9L400.3 34.5L401.3 33.9L402.3 33.3L403.3 33L404.3 33L405.3 33.1L406.3 32.9L407.3 32.4L408.3 31.9L409.3 31.4L410.3 31L411.3 30.6L412.3 30L413.3 29.2L414.3 28.6L415.3 28.2L416.3 28L417.3 28L418.3 28.1L419.3 28L420.3 27.8L421.3 27.6L422.3 27.3L423.3 27L424.3 26.6L425.3 26L426.3 25.5L427.3 25.4L428.3 25.8L429.3 26.3L430.3 26.5L431.3 26.1L432.3 25.5L433.3 25.1L434.3 25.1L435.3 25.3L436.3 25.2L437.3 24.6L438.3 23.8L439.3 23.2L440.3 23L441.3 23.2L442.3 23.5L443.3 23.8L444.3 24.1L445.3 24.1L446.3 24.2L447.3 24.2L448.3 24.1L449.3 23.9L450.3 23.7L451.3 23.5L452.3 23.3L453.3 23.2L454.3 23.3L455.3 23.5L456.3 23.9L457.3 24.2L458.3 24.5L459.3 24.5L460.3 24.4L461.3 24.1L462.3 23.8L463.3 23.5L464.3 23.2L465.3 22.8L466.3 22.5L467.3 22.4L468.3 22.6L469.3 22.7L470.3 22.6L471.3 22.4L472.3 22.3L473.3 22.3L474.3 22.5L475.3 22.6L476.3 22.7L477.3 22.7L478.3 22.5L479.3 22.2L480.3 21.8L481.3 21.5L482.3 21.4L483.3 21.5L484.3 21.7L485.3 21.9L486.3 22.1L487.3 22.2L488.3 22.2L489.3 22.2L490.3 22L491.3 22L492.3 22L493.3 21.9L494.3 21.9L495.3 22L496.3 22.2L497.3 22.4L498.3 22.5L499.3 22.2L500.3 21.7L501.3 21.4L502.3 21.3L503.3 21.3L504.3 21.3L505.3 21.3L506.3 21.2L507.3 21.3L508.3 21.5L509.3 21.6L510.3 21.5L511.3 21.3L512.3 21L513.3 20.8L514.3 20.8L515.3 20.8L516.3 20.8L517.3 20.8L518.3 20.8L519.3 20.7L520.3 20.7L521.3 20.7L522.3 20.9L523.3 21.1L524.3 21.3L525.3 21.5L526.3 21.6L527.3 21.6L528.3 21.5L529.3 21.3L530.3 21.1L531.3 21.1L532.3 21.2L533.3 21.3L534.3 21.3L535.3 21.3L536.3 21.3L537.3 21.3L537.6 21.3L539.6 21.6L541.2 22.5L542.6 24.5L546.6 35.4L549 42.4L551.4 49.4L553.8 56.4L556.2 63.5L558.6 70.5L561 77.5L563.4 84.5L565.8 91.6L568.2 98.6L570.6 105.6L571.6 107.7L572.6 109.8L573.6 111.8L574.6 113.7L575.6 115.7L576.6 117.5L577.6 119.3L578.6 121L579.6 122.6L580.6 124.1L581.6 125.7L582.6 127.3L583.6 129.1L584.6 130.8L585.6 132.4L586.6 134L587.6 135.6L588.6 137.3L589.6 139L590.6 140.7L591.6 142.4L592.6 144L593.6 145.4L594.6 146.7L595.6 148L596.6 149.5L597.6 151L598.6 152.5L599.6 153.8L600.6 155.1L601.6 156.2L602.6 157.1L603.6 158L604.6 159.1L605.6 160.2L606.6 161.2L607.6 161.9L608.6 162.3L609.6 162.5L610.6 162.8L611.6 163.4L612.6 163.8L613.6 164.2L614.6 164.4L615.6 164.9L616.6 165.9L617.6 167L618.6 167.9L619.6 168.2L620.6 168.2L621.6 168.1L622.6 168.3L623.6 168.5L624.6 169L625.6 169.5L626.6 170.1L627.6 170.8L628.6 171.5L629.6 172L630.6 172.3L631.6 172.5L632.6 172.5L633.6 172.5L634.6 172.5L635.6 172.7L636.6 173L637.6 173.5L638.6 174L639.6 174.5L640.6 174.8L641.6 175L642.6 175L643.6 175.1L644.6 175.1L645.6 175.1L646.6 175.3L647.6 175.6L648.6 176L649.6 176.7L650.6 177.2L651.6 177.5L652.6 177.6L653.6 177.5L654.6 177.3L655.6 177.1L656.6 177L657.6 177.3L658.6 177.7L659.6 178.3L660.6 178.7L661.6 178.7L662.6 178.4L663.6 178.2L664.6 178.3L665.6 178.7L666.6 179.1L667.6 179.5L668.6 179.8L669.6 180L670.6 180L671.6 180L672.6 179.9L673.6 179.8L674.6 180L675.6 180.4L676.6 180.8L677.6 180.9L678.6 180.9L679.6 180.7L680.6 180.6L681.6 180.6L682.6 180.9L683.6 181.3L684.6 181.6L685.6 181.7L686.6 181.5L687.6 181.1L688.6 180.9L689.6 181L690.6 181.2L691.6 181.4L692.6 181.6L693.6 181.7L694.6 181.8L695.6 181.7L696.6 181.6L697.6 181.6L698.6 181.6L699.6 181.8L700.6 181.7L701.6 181.4L702.6 181L703.6 180.7L704.6 180.8L705.6 181.2L706.6 181.8L707.6 182L708.6 182L709.6 181.9L710.6 181.7L711.6 181.7L712.6 181.8L713.6 181.8L714.6 181.6L715.6 181.5L716.6 181.5L717.6 181.7L718.6 181.9L719.6 182L720.6 181.9L721.6 181.8L722.6 182L723.6 182.4L724.6 182.7L725.6 182.8L726.6 182.9L727.6 182.9L728.6 183L729.6 183.1L730.6 183L731.6 182.8L732.6 182.7L733.6 182.8L734.6 182.9L735.6 182.8L736.6 182.7L737.6 182.6L738.6 182.8L739.6 183L740.6 183.2L741.6 183.3L742.6 183.4L743.6 183.4L744.6 183.3L745.6 183.2L746.6 183.1L747.6 182.9L748.6 182.9L749.6 182.9L750.6 182.9L751.6 182.9L752.6 182.9L753.6 183L754.6 183.2L755.6 183.3L756.6 183.5L757.6 183.6L758.6 183.8" stroke="#d8e63a" stroke-width="5.4"/>
<path d="M-126.3 21.3L-124.3 21.6L-122.7 22.5L-121.3 24.5L-117.3 35.4L-114.9 42.4L-112.5 49.4L-110.1 56.4L-107.7 63.5L-105.3 70.5L-102.9 77.5L-100.5 84.5L-98.1 91.6L-95.7 98.6L-93.3 105.6L-92.3 107.7L-91.3 109.8L-90.3 111.8L-89.3 113.7L-88.3 115.7L-87.3 117.5L-86.3 119.3L-85.3 121L-84.3 122.6L-83.3 124.1L-82.3 125.6L-81.3 127.2L-80.3 128.9L-79.3 130.6L-78.3 132.4L-77.3 134L-76.3 135.6L-75.3 137.2L-74.3 138.7L-73.3 140.1L-72.3 141.7L-71.3 143.6L-70.3 145.6L-69.3 147.6L-68.3 149.4L-67.3 150.8L-66.3 152L-65.3 153.2L-64.3 154.2L-63.3 154.9L-62.3 155.7L-61.3 156.5L-60.3 157.4L-59.3 158.5L-58.3 159.4L-57.3 160L-56.3 160.5L-55.3 161.2L-54.3 161.9L-53.3 162.6L-52.3 163.1L-51.3 163.3L-50.3 163.6L-49.3 164.1L-48.3 164.9L-47.3 165.8L-46.3 166.7L-45.3 167.5L-44.3 168.3L-43.3 168.9L-42.3 169.4L-41.3 169.6L-40.3 169.7L-39.3 169.8L-38.3 169.9L-37.3 170.3L-36.3 170.8L-35.3 171.2L-34.3 171.5L-33.3 171.5L-32.3 171.6L-31.3 172.1L-30.3 172.8L-29.3 173.5L-28.3 174.1L-27.3 174.4L-26.3 174.4L-25.3 174.4L-24.3 174.3L-23.3 174.4L-22.3 174.9L-21.3 175.5L-20.3 176L-19.3 176.1L-18.3 176L-17.3 175.9L-16.3 176L-15.3 176.3L-14.3 176.6L-13.3 176.8L-12.3 177.2L-11.3 177.7L-10.3 178.3L-9.3 178.6L-8.3 178.7L-7.3 178.7L-6.3 178.8L-5.3 178.9L-4.3 179L-3.3 179L-2.3 178.9L-1.3 178.8L-0.3 178.9L0.7 179.2L1.7 179.4L2.7 179.5L3.7 179.6L4.7 179.7L5.7 179.8L6.7 180L7.7 180.2L8.7 180.5L9.7 180.6L10.7 180.7L11.7 180.6L12.7 180.4L13.7 180.2L14.7 180L15.7 179.9L16.7 179.8L17.7 179.7L18.7 179.5L19.7 179.5L20.7 179.6L21.7 179.8L22.7 180.1L23.7 180.4L24.7 180.6L25.7 180.4L26.7 180.2L27.7 180.2L28.7 180.3L29.7 180.5L30.7 180.5L31.7 180.5L32.7 180.4L33.7 180.5L34.7 180.8L35.7 181.4L36.7 182L37.7 182.3L38.7 182.4L39.7 182.4L40.7 182.4L41.7 182.4L42.7 182.5L43.7 182.5L44.7 182.4L45.7 182.4L46.7 182.4L47.7 182.4L48.7 182.4L49.7 182.3L50.7 182L51.7 181.8L52.7 181.7L53.7 181.9L54.7 182.2L55.7 182.4L56.7 182.6L57.7 182.7L58.7 182.7L59.7 182.8L60.7 182.8L61.7 182.7L62.7 182.7L63.7 182.8L64.7 183.1L65.7 183.3L66.7 183.1L67.7 182.7L68.7 182.4L69.7 182.4L70.7 182.7L71.7 183.2L72.7 183.4L73.7 183.5L74.7 183.3L75.7 183L76.7 182.9L77.7 182.8L78.7 183L79.7 183.3L80.7 183.5L81.7 183.5L82.7 183.4L83.7 183.1L84.7 182.8L85.7 182.7L86.7 182.9L87.7 183.2L88.7 183.7L89.7 183.9L90.7 183.8L91.7 183.7L92.7 183.6L93.7 183.7L94.7 183.8L95.1 184.1L97.1 183.8L98.7 182.9L100.1 180.9L104.1 171L106.5 164.5L108.9 157.9L111.3 151.4L113.7 144.9L116 138.3L118.4 131.8L120.8 125.2L123.2 118.7L125.6 112.1L128 105.6L129 102.5L130 99.5L131 96.6L132 93.7L133 91L134 88.3L135 85.8L136 83.3L137 80.9L138 78.5L139 76.2L140 73.9L141 71.8L142 69.9L143 68.3L144 66.7L145 65L146 63.4L147 61.9L148 60.6L149 59.2L150 57.8L151 56.5L152 55.3L153 54.3L154 53.4L155 52.4L156 51.3L157 50.3L158 49.2L159 48.1L160 46.9L161 45.7L162 44.7L163 43.7L164 42.8L165 42L166 41.4L167 41.1L168 40.9L169 40.3L170 39.5L171 38.7L172 38.1L173 37.7L174 37.4L175 36.9L176 36.2L177 35.6L178 35.3L179 35.1L180 34.8L181 34.4L182 33.7L183 32.9L184 32.1L185 31.5L186 31.1L187 30.9L188 30.8L189 30.6L190 30.1L191 29.4L192 28.7L193 28.1L194 27.8L195 27.9L196 27.9L197 27.7L198 27.6L199 27.5L200 27.2L201 27L202 26.7L203 26.4L204 26.1L205 25.8L206 25.5L207 25.2L208 25.1L209 25.1L210 25.2L211 25.2L212 25.2L213 25.1L214 24.7L215 24.3L216 24.1L217 23.8L218 23.7L219 23.6L220 23.6L221 23.7L222 23.9L223 24L224 23.8L225 23.5L226 23L227 22.7L228 22.8L229 23.2L230 23.7L231 24L232 24.4L233 24.6L234 24.5L235 24L236 23.3L237 22.7L238 22.2L239 22.1L240 22.1L241 22.2L242 22.4L243 22.7L244 22.9L245 22.9L246 22.7L247 22.4L248 22.2L249 22.2L250 22.2L251 22L252 21.8L253 21.6L254 21.6L255 21.9L256 22.3L257 22.3L258 22.1L259 21.9L260 21.8L261 22L262 22.4L263 22.5L264 22.4L265 22L266 21.3L267 20.7L268 20.4L269 20.5L270 21L271 21.6L272 21.9L273 22L274 21.9L275 21.7L276 21.5L277 21.3L278 21.4L279 21.7L280 22.1L281 22.5L282 22.6L283 22.5L284 22.2L285 21.8L286 21.5L287 21.4L288 21.3L289 21.4L290 21.5L291 21.6L292 21.8L293 21.9L294 21.9L295 21.7L296 21.3L297 21.1L298 21.1L299 21.3L300 21.3L301 21L302 20.6L303 20.3L304 20.2L305 20.4L306 20.6L307 20.6L308 20.6L309 20.5L310 20.5L311 20.7L312 21L313 21.1L314 21.3L315 21.3L316 21.3L316.3 21.3L318.3 21.6L319.9 22.5L321.3 24.5L325.3 35.4L327.7 42.4L330.1 49.4L332.5 56.4L334.9 63.5L337.3 70.5L339.7 77.5L342.1 84.5L344.5 91.6L346.9 98.6L349.3 105.6L350.3 107.7L351.3 109.8L352.3 111.8L353.3 113.7L354.3 115.7L355.3 117.5L356.3 119.3L357.3 121L358.3 122.7L359.3 124.3L360.3 125.9L361.3 127.4L362.3 128.9L363.3 130.5L364.3 132.2L365.3 133.9L366.3 135.6L367.3 137.2L368.3 138.8L369.3 140.4L370.3 142L371.3 143.7L372.3 145.4L373.3 147.2L374.3 148.8L375.3 150.3L376.3 151.5L377.3 152.6L378.3 153.8L379.3 154.9L380.3 156L381.3 156.9L382.3 157.8L383.3 158.5L384.3 159.3L385.3 159.9L386.3 160.5L387.3 161L388.3 161.7L389.3 162.4L390.3 163.2L391.3 164.1L392.3 164.7L393.3 164.9L394.3 164.8L395.3 164.8L396.3 165.3L397.3 166.2L398.3 167L399.3 167.5L400.3 167.7L401.3 167.8L402.3 168.2L403.3 168.9L404.3 169.6L405.3 170.2L406.3 170.7L407.3 171.2L408.3 171.8L409.3 172.4L410.3 172.7L411.3 172.8L412.3 172.9L413.3 173L414.3 173.1L415.3 173.1L416.3 173.1L417.3 173.2L418.3 173.6L419.3 174.2L420.3 174.6L421.3 174.8L422.3 174.9L423.3 175.1L424.3 175.4L425.3 175.7L426.3 175.8L427.3 175.9L428.3 176L429.3 176.5L430.3 177.1L431.3 177.6L432.3 177.9L433.3 178.1L434.3 178.1L435.3 178L436.3 178L437.3 178L438.3 178.3L439.3 178.4L440.3 178.4L441.3 178.4L442.3 178.6L443.3 178.9L444.3 179.2L445.3 179.4L446.3 179.5L447.3 179.9L448.3 180.4L449.3 180.8L450.3 181L451.3 180.9L452.3 180.8L453.3 180.7L454.3 180.7L455.3 180.7L456.3 180.7L457.3 180.7L458.3 180.6L459.3 180.7L460.3 180.9L461.3 181L462.3 180.9L463.3 180.8L464.3 180.9L465.3 181.3L466.3 181.8L467.3 182.1L468.3 182L469.3 181.9L470.3 181.9L471.3 182.1L472.3 182.2L473.3 182.3L474.3 182.1L475.3 181.9L476.3 181.7L477.3 181.5L478.3 181.4L479.3 181.5L480.3 181.9L481.3 182.3L482.3 182.4L483.3 182.1L484.3 181.4L485.3 180.8L486.3 180.6L487.3 180.7L488.3 181.3L489.3 182L490.3 182.6L491.3 183L492.3 183.2L493.3 183.2L494.3 183.2L495.3 183.1L496.3 182.9L497.3 182.7L498.3 182.6L499.3 182.5L500.3 182.6L501.3 182.7L502.3 182.8L503.3 183L504.3 183.1L505.3 183L506.3 183L507.3 182.9L508.3 182.9L509.3 182.9L510.3 182.9L511.3 182.9L512.3 183L513.3 183.1L514.3 183.4L515.3 183.5L516.3 183.5L517.3 183.4L518.3 183.1L519.3 182.7L520.3 182.5L521.3 182.7L522.3 183.1L523.3 183.6L524.3 183.7L525.3 183.5L526.3 183.2L527.3 183.1L528.3 183.2L529.3 183.6L530.3 183.8L531.3 183.9L532.3 183.9L533.3 183.9L534.3 183.9L535.3 183.9L536.3 183.8L537.3 183.8L537.7 184.1L539.7 183.8L541.3 182.9L542.7 180.9L546.7 171L549.1 164.5L551.5 157.9L553.9 151.4L556.3 144.9L558.6 138.3L561 131.8L563.4 125.2L565.8 118.7L568.2 112.1L570.6 105.6L571.6 102.5L572.6 99.5L573.6 96.6L574.6 93.7L575.6 91L576.6 88.3L577.6 85.8L578.6 83.3L579.6 80.8L580.6 78.3L581.6 76L582.6 73.8L583.6 71.8L584.6 69.9L585.6 68.2L586.6 66.5L587.6 65L588.6 63.4L589.6 62.1L590.6 60.8L591.6 59.5L592.6 58.2L593.6 56.8L594.6 55.5L595.6 54.5L596.6 53.7L597.6 53L598.6 51.9L599.6 50.4L600.6 48.9L601.6 47.7L602.6 46.7L603.6 45.8L604.6 44.7L605.6 43.7L606.6 43L607.6 42.5L608.6 42L609.6 41.6L610.6 41L611.6 40.2L612.6 39.2L613.6 38.1L614.6 37.2L615.6 36.7L616.6 36.6L617.6 36.6L618.6 36.3L619.6 35.7L620.6 35.1L621.6 34.5L622.6 34L623.6 33.5L624.6 32.9L625.6 32.2L626.6 31.4L627.6 30.8L628.6 30.5L629.6 30.5L630.6 30.7L631.6 30.7L632.6 30.5L633.6 30L634.6 29.6L635.6 29L636.6 28.4L637.6 27.9L638.6 27.7L639.6 27.5L640.6 27.4L641.6 27.2L642.6 27L643.6 26.9L644.6 26.9L645.6 26.6L646.6 26.3L647.6 26.1L648.6 26.1L649.6 26.1L650.6 25.9L651.6 25.4L652.6 24.9L653.6 24.5L654.6 24.5L655.6 24.5L656.6 24.4L657.6 24.4L658.6 24.3L659.6 24.4L660.6 24.5L661.6 24.6L662.6 24.6L663.6 24.5L664.6 24.3L665.6 24.1L666.6 23.8L667.6 23.4L668.6 23.1L669.6 22.7L670.6 22.7L671.6 22.8L672.6 23.1L673.6 23.5L674.6 23.7L675.6 23.7L676.6 23.5L677.6 23.2L678.6 23L679.6 22.9L680.6 23L681.6 23.1L682.6 23.1L683.6 22.9L684.6 22.7L685.6 22.4L686.6 22.3L687.6 22.4L688.6 22.5L689.6 22.4L690.6 22.2L691.6 22.1L692.6 22.1L693.6 22.2L694.6 22.2L695.6 22.2L696.6 22.2L697.6 22.2L698.6 22.3L699.6 22.5L700.6 22.7L701.6 22.7L702.6 22.6L703.6 22.3L704.6 21.9L705.6 21.5L706.6 21.2L707.6 21.2L708.6 21.4L709.6 21.6L710.6 21.7L711.6 21.5L712.6 21.2L713.6 21L714.6 21.1L715.6 21.3L716.6 21.5L717.6 21.6L718.6 21.6L719.6 21.6L720.6 21.7L721.6 21.9L722.6 22.1L723.6 22.2L724.6 22.2L725.6 22L726.6 21.8L727.6 21.9L728.6 22.2L729.6 22.3L730.6 22.4L731.6 22.3L732.6 22.2L733.6 22.2L734.6 22.3L735.6 22.2L736.6 22L737.6 21.8L738.6 21.5L739.6 21.1L740.6 21L741.6 21.2L742.6 21.8L743.6 22.4L744.6 22.5L745.6 22.4L746.6 22.1L747.6 21.8L748.6 21.6L749.6 21.1L750.6 20.6L751.6 20.3L752.6 20.3L753.6 20.7L754.6 21L755.6 21.1L756.6 21.1L757.6 21.2L758.6 21.3M-126.2 184.1L-124.2 183.8L-122.6 182.9L-121.2 180.9L-117.2 171L-114.8 164.5L-112.4 157.9L-110 151.4L-107.6 144.9L-105.3 138.3L-102.9 131.8L-100.5 125.2L-98.1 118.7L-95.7 112.1L-93.3 105.6L-92.3 102.5L-91.3 99.5L-90.3 96.6L-89.3 93.7L-88.3 91L-87.3 88.4L-86.3 85.8L-85.3 83.3L-84.3 80.8L-83.3 78.4L-82.3 76.1L-81.3 74L-80.3 72.1L-79.3 70.2L-78.3 68.4L-77.3 66.5L-76.3 64.7L-75.3 63.1L-74.3 61.6L-73.3 60.3L-72.3 59.1L-71.3 57.8L-70.3 56.6L-69.3 55.3L-68.3 54.2L-67.3 53.2L-66.3 52.2L-65.3 51.1L-64.3 49.8L-63.3 48.6L-62.3 47.8L-61.3 47.3L-60.3 46.9L-59.3 46.4L-58.3 45.7L-57.3 44.9L-56.3 44L-55.3 43L-54.3 41.9L-53.3 40.9L-52.3 40.2L-51.3 39.6L-50.3 39.1L-49.3 38.6L-48.3 38L-47.3 37.3L-46.3 36.8L-45.3 36.5L-44.3 36L-43.3 35.5L-42.3 34.9L-41.3 34.3L-40.3 33.8L-39.3 33.5L-38.3 33.3L-37.3 33L-36.3 32.6L-35.3 31.9L-34.3 31.3L-33.3 30.8L-32.3 30.4L-31.3 30L-30.3 29.5L-29.3 28.9L-28.3 28.5L-27.3 28.2L-26.3 28L-25.3 27.8L-24.3 27.7L-23.3 27.7L-22.3 27.7L-21.3 27.6L-20.3 27.2L-19.3 26.7L-18.3 26.4L-17.3 26.4L-16.3 26.7L-15.3 27L-14.3 27L-13.3 26.6L-12.3 25.9L-11.3 25.3L-10.3 25.1L-9.3 25.2L-8.3 25.3L-7.3 25.3L-6.3 25.1L-5.3 24.8L-4.3 24.4L-3.3 24.2L-2.3 24.1L-1.3 24L-0.3 24.1L0.7 24.2L1.7 24.3L2.7 24.4L3.7 24.4L4.7 24.1L5.7 23.8L6.7 23.4L7.7 23.2L8.7 23L9.7 23L10.7 22.9L11.7 22.9L12.7 23L13.7 23.1L14.7 23.1L15.7 23.2L16.7 23.2L17.7 23.1L18.7 22.8L19.7 22.6L20.7 22.4L21.7 22.4L22.7 22.6L23.7 22.8L24.7 22.8L25.7 22.8L26.7 22.9L27.7 23.1L28.7 23.4L29.7 23.5L30.7 23.4L31.7 23.3L32.7 23.2L33.7 23.1L34.7 22.9L35.7 22.6L36.7 22.2L37.7 21.9L38.7 21.7L39.7 21.5L40.7 21.4L41.7 21.4L42.7 21.3L43.7 21.3L44.7 21.2L45.7 21.1L46.7 21L47.7 21L48.7 21L49.7 21.2L50.7 21.5L51.7 21.8L52.7 21.9L53.7 21.8L54.7 21.7L55.7 21.4L56.7 21.2L57.7 21.2L58.7 21.4L59.7 21.6L60.7 21.8L61.7 21.8L62.7 21.7L63.7 21.6L64.7 21.6L65.7 21.6L66.7 21.6L67.7 21.7L68.7 21.8L69.7 21.8L70.7 21.7L71.7 21.6L72.7 21.5L73.7 21.4L74.7 21.3L75.7 21L76.7 20.7L77.7 20.5L78.7 20.3L79.7 20.2L80.7 20.1L81.7 20.2L82.7 20.5L83.7 20.7L84.7 20.8L85.7 20.9L86.7 21L87.7 21.3L88.7 21.6L89.7 21.8L90.7 21.8L91.7 21.7L92.7 21.6L93.7 21.5L94.7 21.3L95 21.3L97 21.6L98.6 22.5L100 24.5L104 35.4L106.4 42.4L108.8 49.4L111.2 56.4L113.6 63.5L116 70.5L118.4 77.5L120.8 84.5L123.2 91.6L125.6 98.6L128 105.6L129 107.7L130 109.8L131 111.8L132 113.7L133 115.7L134 117.5L135 119.3L136 121.1L137 122.8L138 124.4L139 125.9L140 127.5L141 129.1L142 130.6L143 132.3L144 134L145 135.7L146 137.3L147 138.9L148 140.5L149 142.3L150 144L151 145.7L152 147.3L153 148.7L154 149.8L155 150.6L156 151.4L157 152.3L158 153.5L159 155L160 156.3L161 157.5L162 158.4L163 159.2L164 160L165 160.8L166 161.4L167 162L168 162.5L169 162.8L170 163L171 163.3L172 163.9L173 164.7L174 165.6L175 166.5L176 167.3L177 168L178 168.6L179 169.2L180 169.8L181 170.3L182 170.5L183 170.6L184 170.6L185 170.6L186 170.8L187 171.1L188 171.3L189 171.6L190 172L191 172.4L192 172.6L193 172.9L194 173L195 173.4L196 173.9L197 174.4L198 174.8L199 174.9L200 174.8L201 174.8L202 175.1L203 175.6L204 176L205 176.3L206 176.6L207 177L208 177.3L209 177.5L210 177.7L211 178L212 178.4L213 178.7L214 178.7L215 178.4L216 178.1L217 178L218 178.2L219 178.8L220 179.2L221 179.3L222 179.2L223 179.1L224 179.2L225 179.5L226 179.9L227 180.2L228 180.4L229 180.5L230 180.5L231 180.5L232 180.4L233 180.6L234 180.8L235 180.9L236 181L237 181.1L238 181.3L239 181.5L240 181.6L241 181.3L242 181.1L243 181L244 181L245 181L246 181L247 181.2L248 181.5L249 181.7L250 181.8L251 181.8L252 181.6L253 181.5L254 181.5L255 181.4L256 181.3L257 181.3L258 181.5L259 181.9L260 182.3L261 182.5L262 182.5L263 182.3L264 182.1L265 182L266 181.9L267 181.7L268 181.6L269 181.5L270 181.6L271 181.6L272 181.6L273 181.7L274 181.9L275 182.2L276 182.4L277 182.7L278 183L279 183.3L280 183.6L281 183.5L282 183.1L283 182.5L284 181.9L285 181.7L286 181.8L287 182.1L288 182.3L289 182.1L290 182L291 182.1L292 182.5L293 183.2L294 183.8L295 184L296 183.6L297 183.3L298 183.1L299 183.1L300 183.2L301 183.3L302 183.2L303 183.2L304 183.3L305 183.3L306 183.5L307 183.6L308 183.7L309 183.7L310 183.8L311 183.9L312 184L313 183.9L314 183.8L315 183.7L316 183.8L316.4 184.1L318.4 183.8L320 182.9L321.4 180.9L325.4 171L327.8 164.5L330.2 157.9L332.6 151.4L334.9 144.9L337.3 138.3L339.7 131.8L342.1 125.2L344.5 118.7L346.9 112.1L349.3 105.6L350.3 102.5L351.3 99.5L352.3 96.6L353.3 93.7L354.3 91L355.3 88.4L356.3 85.8L357.3 83.3L358.3 80.8L359.3 78.4L360.3 76.1L361.3 73.9L362.3 71.7L363.3 69.7L364.3 67.9L365.3 66.4L366.3 64.9L367.3 63.4L368.3 61.9L369.3 60.3L370.3 58.8L371.3 57.4L372.3 56.2L373.3 55L374.3 53.8L375.3 52.7L376.3 51.5L377.3 50.4L378.3 49.3L379.3 48.2L380.3 47.2L381.3 46.3L382.3 45.5L383.3 44.7L384.3 44L385.3 43.5L386.3 43L387.3 42.6L388.3 42L389.3 41.1L390.3 40.2L391.3 39.6L392.3 39.1L393.3 38.7L394.3 37.9L395.3 37L396.3 36L397.3 35.4L398.3 35.1L399.3 34.9L400.3 34.5L401.3 33.9L402.3 33.3L403.3 33L404.3 33L405.3 33.1L406.3 32.9L407.3 32.4L408.3 31.9L409.3 31.4L410.3 31L411.3 30.6L412.3 30L413.3 29.2L414.3 28.6L415.3 28.2L416.3 28L417.3 28L418.3 28.1L419.3 28L420.3 27.8L421.3 27.6L422.3 27.3L423.3 27L424.3 26.6L425.3 26L426.3 25.5L427.3 25.4L428.3 25.8L429.3 26.3L430.3 26.5L431.3 26.1L432.3 25.5L433.3 25.1L434.3 25.1L435.3 25.3L436.3 25.2L437.3 24.6L438.3 23.8L439.3 23.2L440.3 23L441.3 23.2L442.3 23.5L443.3 23.8L444.3 24.1L445.3 24.1L446.3 24.2L447.3 24.2L448.3 24.1L449.3 23.9L450.3 23.7L451.3 23.5L452.3 23.3L453.3 23.2L454.3 23.3L455.3 23.5L456.3 23.9L457.3 24.2L458.3 24.5L459.3 24.5L460.3 24.4L461.3 24.1L462.3 23.8L463.3 23.5L464.3 23.2L465.3 22.8L466.3 22.5L467.3 22.4L468.3 22.6L469.3 22.7L470.3 22.6L471.3 22.4L472.3 22.3L473.3 22.3L474.3 22.5L475.3 22.6L476.3 22.7L477.3 22.7L478.3 22.5L479.3 22.2L480.3 21.8L481.3 21.5L482.3 21.4L483.3 21.5L484.3 21.7L485.3 21.9L486.3 22.1L487.3 22.2L488.3 22.2L489.3 22.2L490.3 22L491.3 22L492.3 22L493.3 21.9L494.3 21.9L495.3 22L496.3 22.2L497.3 22.4L498.3 22.5L499.3 22.2L500.3 21.7L501.3 21.4L502.3 21.3L503.3 21.3L504.3 21.3L505.3 21.3L506.3 21.2L507.3 21.3L508.3 21.5L509.3 21.6L510.3 21.5L511.3 21.3L512.3 21L513.3 20.8L514.3 20.8L515.3 20.8L516.3 20.8L517.3 20.8L518.3 20.8L519.3 20.7L520.3 20.7L521.3 20.7L522.3 20.9L523.3 21.1L524.3 21.3L525.3 21.5L526.3 21.6L527.3 21.6L528.3 21.5L529.3 21.3L530.3 21.1L531.3 21.1L532.3 21.2L533.3 21.3L534.3 21.3L535.3 21.3L536.3 21.3L537.3 21.3L537.6 21.3L539.6 21.6L541.2 22.5L542.6 24.5L546.6 35.4L549 42.4L551.4 49.4L553.8 56.4L556.2 63.5L558.6 70.5L561 77.5L563.4 84.5L565.8 91.6L568.2 98.6L570.6 105.6L571.6 107.7L572.6 109.8L573.6 111.8L574.6 113.7L575.6 115.7L576.6 117.5L577.6 119.3L578.6 121L579.6 122.6L580.6 124.1L581.6 125.7L582.6 127.3L583.6 129.1L584.6 130.8L585.6 132.4L586.6 134L587.6 135.6L588.6 137.3L589.6 139L590.6 140.7L591.6 142.4L592.6 144L593.6 145.4L594.6 146.7L595.6 148L596.6 149.5L597.6 151L598.6 152.5L599.6 153.8L600.6 155.1L601.6 156.2L602.6 157.1L603.6 158L604.6 159.1L605.6 160.2L606.6 161.2L607.6 161.9L608.6 162.3L609.6 162.5L610.6 162.8L611.6 163.4L612.6 163.8L613.6 164.2L614.6 164.4L615.6 164.9L616.6 165.9L617.6 167L618.6 167.9L619.6 168.2L620.6 168.2L621.6 168.1L622.6 168.3L623.6 168.5L624.6 169L625.6 169.5L626.6 170.1L627.6 170.8L628.6 171.5L629.6 172L630.6 172.3L631.6 172.5L632.6 172.5L633.6 172.5L634.6 172.5L635.6 172.7L636.6 173L637.6 173.5L638.6 174L639.6 174.5L640.6 174.8L641.6 175L642.6 175L643.6 175.1L644.6 175.1L645.6 175.1L646.6 175.3L647.6 175.6L648.6 176L649.6 176.7L650.6 177.2L651.6 177.5L652.6 177.6L653.6 177.5L654.6 177.3L655.6 177.1L656.6 177L657.6 177.3L658.6 177.7L659.6 178.3L660.6 178.7L661.6 178.7L662.6 178.4L663.6 178.2L664.6 178.3L665.6 178.7L666.6 179.1L667.6 179.5L668.6 179.8L669.6 180L670.6 180L671.6 180L672.6 179.9L673.6 179.8L674.6 180L675.6 180.4L676.6 180.8L677.6 180.9L678.6 180.9L679.6 180.7L680.6 180.6L681.6 180.6L682.6 180.9L683.6 181.3L684.6 181.6L685.6 181.7L686.6 181.5L687.6 181.1L688.6 180.9L689.6 181L690.6 181.2L691.6 181.4L692.6 181.6L693.6 181.7L694.6 181.8L695.6 181.7L696.6 181.6L697.6 181.6L698.6 181.6L699.6 181.8L700.6 181.7L701.6 181.4L702.6 181L703.6 180.7L704.6 180.8L705.6 181.2L706.6 181.8L707.6 182L708.6 182L709.6 181.9L710.6 181.7L711.6 181.7L712.6 181.8L713.6 181.8L714.6 181.6L715.6 181.5L716.6 181.5L717.6 181.7L718.6 181.9L719.6 182L720.6 181.9L721.6 181.8L722.6 182L723.6 182.4L724.6 182.7L725.6 182.8L726.6 182.9L727.6 182.9L728.6 183L729.6 183.1L730.6 183L731.6 182.8L732.6 182.7L733.6 182.8L734.6 182.9L735.6 182.8L736.6 182.7L737.6 182.6L738.6 182.8L739.6 183L740.6 183.2L741.6 183.3L742.6 183.4L743.6 183.4L744.6 183.3L745.6 183.2L746.6 183.1L747.6 182.9L748.6 182.9L749.6 182.9L750.6 182.9L751.6 182.9L752.6 182.9L753.6 183L754.6 183.2L755.6 183.3L756.6 183.5L757.6 183.6L758.6 183.8" stroke="#f8a62a" stroke-width="3.7"/>
<path d="M-126.3 21.3L-124.3 21.6L-122.7 22.5L-121.3 24.5L-117.3 35.4L-114.9 42.4L-112.5 49.4L-110.1 56.4L-107.7 63.5L-105.3 70.5L-102.9 77.5L-100.5 84.5L-98.1 91.6L-95.7 98.6L-93.3 105.6L-92.3 107.7L-91.3 109.8L-90.3 111.8L-89.3 113.7L-88.3 115.7L-87.3 117.5L-86.3 119.3L-85.3 121L-84.3 122.6L-83.3 124.1L-82.3 125.6L-81.3 127.2L-80.3 128.9L-79.3 130.6L-78.3 132.4L-77.3 134L-76.3 135.6L-75.3 137.2L-74.3 138.7L-73.3 140.1L-72.3 141.7L-71.3 143.6L-70.3 145.6L-69.3 147.6L-68.3 149.4L-67.3 150.8L-66.3 152L-65.3 153.2L-64.3 154.2L-63.3 154.9L-62.3 155.7L-61.3 156.5L-60.3 157.4L-59.3 158.5L-58.3 159.4L-57.3 160L-56.3 160.5L-55.3 161.2L-54.3 161.9L-53.3 162.6L-52.3 163.1L-51.3 163.3L-50.3 163.6L-49.3 164.1L-48.3 164.9L-47.3 165.8L-46.3 166.7L-45.3 167.5L-44.3 168.3L-43.3 168.9L-42.3 169.4L-41.3 169.6L-40.3 169.7L-39.3 169.8L-38.3 169.9L-37.3 170.3L-36.3 170.8L-35.3 171.2L-34.3 171.5L-33.3 171.5L-32.3 171.6L-31.3 172.1L-30.3 172.8L-29.3 173.5L-28.3 174.1L-27.3 174.4L-26.3 174.4L-25.3 174.4L-24.3 174.3L-23.3 174.4L-22.3 174.9L-21.3 175.5L-20.3 176L-19.3 176.1L-18.3 176L-17.3 175.9L-16.3 176L-15.3 176.3L-14.3 176.6L-13.3 176.8L-12.3 177.2L-11.3 177.7L-10.3 178.3L-9.3 178.6L-8.3 178.7L-7.3 178.7L-6.3 178.8L-5.3 178.9L-4.3 179L-3.3 179L-2.3 178.9L-1.3 178.8L-0.3 178.9L0.7 179.2L1.7 179.4L2.7 179.5L3.7 179.6L4.7 179.7L5.7 179.8L6.7 180L7.7 180.2L8.7 180.5L9.7 180.6L10.7 180.7L11.7 180.6L12.7 180.4L13.7 180.2L14.7 180L15.7 179.9L16.7 179.8L17.7 179.7L18.7 179.5L19.7 179.5L20.7 179.6L21.7 179.8L22.7 180.1L23.7 180.4L24.7 180.6L25.7 180.4L26.7 180.2L27.7 180.2L28.7 180.3L29.7 180.5L30.7 180.5L31.7 180.5L32.7 180.4L33.7 180.5L34.7 180.8L35.7 181.4L36.7 182L37.7 182.3L38.7 182.4L39.7 182.4L40.7 182.4L41.7 182.4L42.7 182.5L43.7 182.5L44.7 182.4L45.7 182.4L46.7 182.4L47.7 182.4L48.7 182.4L49.7 182.3L50.7 182L51.7 181.8L52.7 181.7L53.7 181.9L54.7 182.2L55.7 182.4L56.7 182.6L57.7 182.7L58.7 182.7L59.7 182.8L60.7 182.8L61.7 182.7L62.7 182.7L63.7 182.8L64.7 183.1L65.7 183.3L66.7 183.1L67.7 182.7L68.7 182.4L69.7 182.4L70.7 182.7L71.7 183.2L72.7 183.4L73.7 183.5L74.7 183.3L75.7 183L76.7 182.9L77.7 182.8L78.7 183L79.7 183.3L80.7 183.5L81.7 183.5L82.7 183.4L83.7 183.1L84.7 182.8L85.7 182.7L86.7 182.9L87.7 183.2L88.7 183.7L89.7 183.9L90.7 183.8L91.7 183.7L92.7 183.6L93.7 183.7L94.7 183.8L95.1 184.1L97.1 183.8L98.7 182.9L100.1 180.9L104.1 171L106.5 164.5L108.9 157.9L111.3 151.4L113.7 144.9L116 138.3L118.4 131.8L120.8 125.2L123.2 118.7L125.6 112.1L128 105.6L129 102.5L130 99.5L131 96.6L132 93.7L133 91L134 88.3L135 85.8L136 83.3L137 80.9L138 78.5L139 76.2L140 73.9L141 71.8L142 69.9L143 68.3L144 66.7L145 65L146 63.4L147 61.9L148 60.6L149 59.2L150 57.8L151 56.5L152 55.3L153 54.3L154 53.4L155 52.4L156 51.3L157 50.3L158 49.2L159 48.1L160 46.9L161 45.7L162 44.7L163 43.7L164 42.8L165 42L166 41.4L167 41.1L168 40.9L169 40.3L170 39.5L171 38.7L172 38.1L173 37.7L174 37.4L175 36.9L176 36.2L177 35.6L178 35.3L179 35.1L180 34.8L181 34.4L182 33.7L183 32.9L184 32.1L185 31.5L186 31.1L187 30.9L188 30.8L189 30.6L190 30.1L191 29.4L192 28.7L193 28.1L194 27.8L195 27.9L196 27.9L197 27.7L198 27.6L199 27.5L200 27.2L201 27L202 26.7L203 26.4L204 26.1L205 25.8L206 25.5L207 25.2L208 25.1L209 25.1L210 25.2L211 25.2L212 25.2L213 25.1L214 24.7L215 24.3L216 24.1L217 23.8L218 23.7L219 23.6L220 23.6L221 23.7L222 23.9L223 24L224 23.8L225 23.5L226 23L227 22.7L228 22.8L229 23.2L230 23.7L231 24L232 24.4L233 24.6L234 24.5L235 24L236 23.3L237 22.7L238 22.2L239 22.1L240 22.1L241 22.2L242 22.4L243 22.7L244 22.9L245 22.9L246 22.7L247 22.4L248 22.2L249 22.2L250 22.2L251 22L252 21.8L253 21.6L254 21.6L255 21.9L256 22.3L257 22.3L258 22.1L259 21.9L260 21.8L261 22L262 22.4L263 22.5L264 22.4L265 22L266 21.3L267 20.7L268 20.4L269 20.5L270 21L271 21.6L272 21.9L273 22L274 21.9L275 21.7L276 21.5L277 21.3L278 21.4L279 21.7L280 22.1L281 22.5L282 22.6L283 22.5L284 22.2L285 21.8L286 21.5L287 21.4L288 21.3L289 21.4L290 21.5L291 21.6L292 21.8L293 21.9L294 21.9L295 21.7L296 21.3L297 21.1L298 21.1L299 21.3L300 21.3L301 21L302 20.6L303 20.3L304 20.2L305 20.4L306 20.6L307 20.6L308 20.6L309 20.5L310 20.5L311 20.7L312 21L313 21.1L314 21.3L315 21.3L316 21.3L316.3 21.3L318.3 21.6L319.9 22.5L321.3 24.5L325.3 35.4L327.7 42.4L330.1 49.4L332.5 56.4L334.9 63.5L337.3 70.5L339.7 77.5L342.1 84.5L344.5 91.6L346.9 98.6L349.3 105.6L350.3 107.7L351.3 109.8L352.3 111.8L353.3 113.7L354.3 115.7L355.3 117.5L356.3 119.3L357.3 121L358.3 122.7L359.3 124.3L360.3 125.9L361.3 127.4L362.3 128.9L363.3 130.5L364.3 132.2L365.3 133.9L366.3 135.6L367.3 137.2L368.3 138.8L369.3 140.4L370.3 142L371.3 143.7L372.3 145.4L373.3 147.2L374.3 148.8L375.3 150.3L376.3 151.5L377.3 152.6L378.3 153.8L379.3 154.9L380.3 156L381.3 156.9L382.3 157.8L383.3 158.5L384.3 159.3L385.3 159.9L386.3 160.5L387.3 161L388.3 161.7L389.3 162.4L390.3 163.2L391.3 164.1L392.3 164.7L393.3 164.9L394.3 164.8L395.3 164.8L396.3 165.3L397.3 166.2L398.3 167L399.3 167.5L400.3 167.7L401.3 167.8L402.3 168.2L403.3 168.9L404.3 169.6L405.3 170.2L406.3 170.7L407.3 171.2L408.3 171.8L409.3 172.4L410.3 172.7L411.3 172.8L412.3 172.9L413.3 173L414.3 173.1L415.3 173.1L416.3 173.1L417.3 173.2L418.3 173.6L419.3 174.2L420.3 174.6L421.3 174.8L422.3 174.9L423.3 175.1L424.3 175.4L425.3 175.7L426.3 175.8L427.3 175.9L428.3 176L429.3 176.5L430.3 177.1L431.3 177.6L432.3 177.9L433.3 178.1L434.3 178.1L435.3 178L436.3 178L437.3 178L438.3 178.3L439.3 178.4L440.3 178.4L441.3 178.4L442.3 178.6L443.3 178.9L444.3 179.2L445.3 179.4L446.3 179.5L447.3 179.9L448.3 180.4L449.3 180.8L450.3 181L451.3 180.9L452.3 180.8L453.3 180.7L454.3 180.7L455.3 180.7L456.3 180.7L457.3 180.7L458.3 180.6L459.3 180.7L460.3 180.9L461.3 181L462.3 180.9L463.3 180.8L464.3 180.9L465.3 181.3L466.3 181.8L467.3 182.1L468.3 182L469.3 181.9L470.3 181.9L471.3 182.1L472.3 182.2L473.3 182.3L474.3 182.1L475.3 181.9L476.3 181.7L477.3 181.5L478.3 181.4L479.3 181.5L480.3 181.9L481.3 182.3L482.3 182.4L483.3 182.1L484.3 181.4L485.3 180.8L486.3 180.6L487.3 180.7L488.3 181.3L489.3 182L490.3 182.6L491.3 183L492.3 183.2L493.3 183.2L494.3 183.2L495.3 183.1L496.3 182.9L497.3 182.7L498.3 182.6L499.3 182.5L500.3 182.6L501.3 182.7L502.3 182.8L503.3 183L504.3 183.1L505.3 183L506.3 183L507.3 182.9L508.3 182.9L509.3 182.9L510.3 182.9L511.3 182.9L512.3 183L513.3 183.1L514.3 183.4L515.3 183.5L516.3 183.5L517.3 183.4L518.3 183.1L519.3 182.7L520.3 182.5L521.3 182.7L522.3 183.1L523.3 183.6L524.3 183.7L525.3 183.5L526.3 183.2L527.3 183.1L528.3 183.2L529.3 183.6L530.3 183.8L531.3 183.9L532.3 183.9L533.3 183.9L534.3 183.9L535.3 183.9L536.3 183.8L537.3 183.8L537.7 184.1L539.7 183.8L541.3 182.9L542.7 180.9L546.7 171L549.1 164.5L551.5 157.9L553.9 151.4L556.3 144.9L558.6 138.3L561 131.8L563.4 125.2L565.8 118.7L568.2 112.1L570.6 105.6L571.6 102.5L572.6 99.5L573.6 96.6L574.6 93.7L575.6 91L576.6 88.3L577.6 85.8L578.6 83.3L579.6 80.8L580.6 78.3L581.6 76L582.6 73.8L583.6 71.8L584.6 69.9L585.6 68.2L586.6 66.5L587.6 65L588.6 63.4L589.6 62.1L590.6 60.8L591.6 59.5L592.6 58.2L593.6 56.8L594.6 55.5L595.6 54.5L596.6 53.7L597.6 53L598.6 51.9L599.6 50.4L600.6 48.9L601.6 47.7L602.6 46.7L603.6 45.8L604.6 44.7L605.6 43.7L606.6 43L607.6 42.5L608.6 42L609.6 41.6L610.6 41L611.6 40.2L612.6 39.2L613.6 38.1L614.6 37.2L615.6 36.7L616.6 36.6L617.6 36.6L618.6 36.3L619.6 35.7L620.6 35.1L621.6 34.5L622.6 34L623.6 33.5L624.6 32.9L625.6 32.2L626.6 31.4L627.6 30.8L628.6 30.5L629.6 30.5L630.6 30.7L631.6 30.7L632.6 30.5L633.6 30L634.6 29.6L635.6 29L636.6 28.4L637.6 27.9L638.6 27.7L639.6 27.5L640.6 27.4L641.6 27.2L642.6 27L643.6 26.9L644.6 26.9L645.6 26.6L646.6 26.3L647.6 26.1L648.6 26.1L649.6 26.1L650.6 25.9L651.6 25.4L652.6 24.9L653.6 24.5L654.6 24.5L655.6 24.5L656.6 24.4L657.6 24.4L658.6 24.3L659.6 24.4L660.6 24.5L661.6 24.6L662.6 24.6L663.6 24.5L664.6 24.3L665.6 24.1L666.6 23.8L667.6 23.4L668.6 23.1L669.6 22.7L670.6 22.7L671.6 22.8L672.6 23.1L673.6 23.5L674.6 23.7L675.6 23.7L676.6 23.5L677.6 23.2L678.6 23L679.6 22.9L680.6 23L681.6 23.1L682.6 23.1L683.6 22.9L684.6 22.7L685.6 22.4L686.6 22.3L687.6 22.4L688.6 22.5L689.6 22.4L690.6 22.2L691.6 22.1L692.6 22.1L693.6 22.2L694.6 22.2L695.6 22.2L696.6 22.2L697.6 22.2L698.6 22.3L699.6 22.5L700.6 22.7L701.6 22.7L702.6 22.6L703.6 22.3L704.6 21.9L705.6 21.5L706.6 21.2L707.6 21.2L708.6 21.4L709.6 21.6L710.6 21.7L711.6 21.5L712.6 21.2L713.6 21L714.6 21.1L715.6 21.3L716.6 21.5L717.6 21.6L718.6 21.6L719.6 21.6L720.6 21.7L721.6 21.9L722.6 22.1L723.6 22.2L724.6 22.2L725.6 22L726.6 21.8L727.6 21.9L728.6 22.2L729.6 22.3L730.6 22.4L731.6 22.3L732.6 22.2L733.6 22.2L734.6 22.3L735.6 22.2L736.6 22L737.6 21.8L738.6 21.5L739.6 21.1L740.6 21L741.6 21.2L742.6 21.8L743.6 22.4L744.6 22.5L745.6 22.4L746.6 22.1L747.6 21.8L748.6 21.6L749.6 21.1L750.6 20.6L751.6 20.3L752.6 20.3L753.6 20.7L754.6 21L755.6 21.1L756.6 21.1L757.6 21.2L758.6 21.3M-126.2 184.1L-124.2 183.8L-122.6 182.9L-121.2 180.9L-117.2 171L-114.8 164.5L-112.4 157.9L-110 151.4L-107.6 144.9L-105.3 138.3L-102.9 131.8L-100.5 125.2L-98.1 118.7L-95.7 112.1L-93.3 105.6L-92.3 102.5L-91.3 99.5L-90.3 96.6L-89.3 93.7L-88.3 91L-87.3 88.4L-86.3 85.8L-85.3 83.3L-84.3 80.8L-83.3 78.4L-82.3 76.1L-81.3 74L-80.3 72.1L-79.3 70.2L-78.3 68.4L-77.3 66.5L-76.3 64.7L-75.3 63.1L-74.3 61.6L-73.3 60.3L-72.3 59.1L-71.3 57.8L-70.3 56.6L-69.3 55.3L-68.3 54.2L-67.3 53.2L-66.3 52.2L-65.3 51.1L-64.3 49.8L-63.3 48.6L-62.3 47.8L-61.3 47.3L-60.3 46.9L-59.3 46.4L-58.3 45.7L-57.3 44.9L-56.3 44L-55.3 43L-54.3 41.9L-53.3 40.9L-52.3 40.2L-51.3 39.6L-50.3 39.1L-49.3 38.6L-48.3 38L-47.3 37.3L-46.3 36.8L-45.3 36.5L-44.3 36L-43.3 35.5L-42.3 34.9L-41.3 34.3L-40.3 33.8L-39.3 33.5L-38.3 33.3L-37.3 33L-36.3 32.6L-35.3 31.9L-34.3 31.3L-33.3 30.8L-32.3 30.4L-31.3 30L-30.3 29.5L-29.3 28.9L-28.3 28.5L-27.3 28.2L-26.3 28L-25.3 27.8L-24.3 27.7L-23.3 27.7L-22.3 27.7L-21.3 27.6L-20.3 27.2L-19.3 26.7L-18.3 26.4L-17.3 26.4L-16.3 26.7L-15.3 27L-14.3 27L-13.3 26.6L-12.3 25.9L-11.3 25.3L-10.3 25.1L-9.3 25.2L-8.3 25.3L-7.3 25.3L-6.3 25.1L-5.3 24.8L-4.3 24.4L-3.3 24.2L-2.3 24.1L-1.3 24L-0.3 24.1L0.7 24.2L1.7 24.3L2.7 24.4L3.7 24.4L4.7 24.1L5.7 23.8L6.7 23.4L7.7 23.2L8.7 23L9.7 23L10.7 22.9L11.7 22.9L12.7 23L13.7 23.1L14.7 23.1L15.7 23.2L16.7 23.2L17.7 23.1L18.7 22.8L19.7 22.6L20.7 22.4L21.7 22.4L22.7 22.6L23.7 22.8L24.7 22.8L25.7 22.8L26.7 22.9L27.7 23.1L28.7 23.4L29.7 23.5L30.7 23.4L31.7 23.3L32.7 23.2L33.7 23.1L34.7 22.9L35.7 22.6L36.7 22.2L37.7 21.9L38.7 21.7L39.7 21.5L40.7 21.4L41.7 21.4L42.7 21.3L43.7 21.3L44.7 21.2L45.7 21.1L46.7 21L47.7 21L48.7 21L49.7 21.2L50.7 21.5L51.7 21.8L52.7 21.9L53.7 21.8L54.7 21.7L55.7 21.4L56.7 21.2L57.7 21.2L58.7 21.4L59.7 21.6L60.7 21.8L61.7 21.8L62.7 21.7L63.7 21.6L64.7 21.6L65.7 21.6L66.7 21.6L67.7 21.7L68.7 21.8L69.7 21.8L70.7 21.7L71.7 21.6L72.7 21.5L73.7 21.4L74.7 21.3L75.7 21L76.7 20.7L77.7 20.5L78.7 20.3L79.7 20.2L80.7 20.1L81.7 20.2L82.7 20.5L83.7 20.7L84.7 20.8L85.7 20.9L86.7 21L87.7 21.3L88.7 21.6L89.7 21.8L90.7 21.8L91.7 21.7L92.7 21.6L93.7 21.5L94.7 21.3L95 21.3L97 21.6L98.6 22.5L100 24.5L104 35.4L106.4 42.4L108.8 49.4L111.2 56.4L113.6 63.5L116 70.5L118.4 77.5L120.8 84.5L123.2 91.6L125.6 98.6L128 105.6L129 107.7L130 109.8L131 111.8L132 113.7L133 115.7L134 117.5L135 119.3L136 121.1L137 122.8L138 124.4L139 125.9L140 127.5L141 129.1L142 130.6L143 132.3L144 134L145 135.7L146 137.3L147 138.9L148 140.5L149 142.3L150 144L151 145.7L152 147.3L153 148.7L154 149.8L155 150.6L156 151.4L157 152.3L158 153.5L159 155L160 156.3L161 157.5L162 158.4L163 159.2L164 160L165 160.8L166 161.4L167 162L168 162.5L169 162.8L170 163L171 163.3L172 163.9L173 164.7L174 165.6L175 166.5L176 167.3L177 168L178 168.6L179 169.2L180 169.8L181 170.3L182 170.5L183 170.6L184 170.6L185 170.6L186 170.8L187 171.1L188 171.3L189 171.6L190 172L191 172.4L192 172.6L193 172.9L194 173L195 173.4L196 173.9L197 174.4L198 174.8L199 174.9L200 174.8L201 174.8L202 175.1L203 175.6L204 176L205 176.3L206 176.6L207 177L208 177.3L209 177.5L210 177.7L211 178L212 178.4L213 178.7L214 178.7L215 178.4L216 178.1L217 178L218 178.2L219 178.8L220 179.2L221 179.3L222 179.2L223 179.1L224 179.2L225 179.5L226 179.9L227 180.2L228 180.4L229 180.5L230 180.5L231 180.5L232 180.4L233 180.6L234 180.8L235 180.9L236 181L237 181.1L238 181.3L239 181.5L240 181.6L241 181.3L242 181.1L243 181L244 181L245 181L246 181L247 181.2L248 181.5L249 181.7L250 181.8L251 181.8L252 181.6L253 181.5L254 181.5L255 181.4L256 181.3L257 181.3L258 181.5L259 181.9L260 182.3L261 182.5L262 182.5L263 182.3L264 182.1L265 182L266 181.9L267 181.7L268 181.6L269 181.5L270 181.6L271 181.6L272 181.6L273 181.7L274 181.9L275 182.2L276 182.4L277 182.7L278 183L279 183.3L280 183.6L281 183.5L282 183.1L283 182.5L284 181.9L285 181.7L286 181.8L287 182.1L288 182.3L289 182.1L290 182L291 182.1L292 182.5L293 183.2L294 183.8L295 184L296 183.6L297 183.3L298 183.1L299 183.1L300 183.2L301 183.3L302 183.2L303 183.2L304 183.3L305 183.3L306 183.5L307 183.6L308 183.7L309 183.7L310 183.8L311 183.9L312 184L313 183.9L314 183.8L315 183.7L316 183.8L316.4 184.1L318.4 183.8L320 182.9L321.4 180.9L325.4 171L327.8 164.5L330.2 157.9L332.6 151.4L334.9 144.9L337.3 138.3L339.7 131.8L342.1 125.2L344.5 118.7L346.9 112.1L349.3 105.6L350.3 102.5L351.3 99.5L352.3 96.6L353.3 93.7L354.3 91L355.3 88.4L356.3 85.8L357.3 83.3L358.3 80.8L359.3 78.4L360.3 76.1L361.3 73.9L362.3 71.7L363.3 69.7L364.3 67.9L365.3 66.4L366.3 64.9L367.3 63.4L368.3 61.9L369.3 60.3L370.3 58.8L371.3 57.4L372.3 56.2L373.3 55L374.3 53.8L375.3 52.7L376.3 51.5L377.3 50.4L378.3 49.3L379.3 48.2L380.3 47.2L381.3 46.3L382.3 45.5L383.3 44.7L384.3 44L385.3 43.5L386.3 43L387.3 42.6L388.3 42L389.3 41.1L390.3 40.2L391.3 39.6L392.3 39.1L393.3 38.7L394.3 37.9L395.3 37L396.3 36L397.3 35.4L398.3 35.1L399.3 34.9L400.3 34.5L401.3 33.9L402.3 33.3L403.3 33L404.3 33L405.3 33.1L406.3 32.9L407.3 32.4L408.3 31.9L409.3 31.4L410.3 31L411.3 30.6L412.3 30L413.3 29.2L414.3 28.6L415.3 28.2L416.3 28L417.3 28L418.3 28.1L419.3 28L420.3 27.8L421.3 27.6L422.3 27.3L423.3 27L424.3 26.6L425.3 26L426.3 25.5L427.3 25.4L428.3 25.8L429.3 26.3L430.3 26.5L431.3 26.1L432.3 25.5L433.3 25.1L434.3 25.1L435.3 25.3L436.3 25.2L437.3 24.6L438.3 23.8L439.3 23.2L440.3 23L441.3 23.2L442.3 23.5L443.3 23.8L444.3 24.1L445.3 24.1L446.3 24.2L447.3 24.2L448.3 24.1L449.3 23.9L450.3 23.7L451.3 23.5L452.3 23.3L453.3 23.2L454.3 23.3L455.3 23.5L456.3 23.9L457.3 24.2L458.3 24.5L459.3 24.5L460.3 24.4L461.3 24.1L462.3 23.8L463.3 23.5L464.3 23.2L465.3 22.8L466.3 22.5L467.3 22.4L468.3 22.6L469.3 22.7L470.3 22.6L471.3 22.4L472.3 22.3L473.3 22.3L474.3 22.5L475.3 22.6L476.3 22.7L477.3 22.7L478.3 22.5L479.3 22.2L480.3 21.8L481.3 21.5L482.3 21.4L483.3 21.5L484.3 21.7L485.3 21.9L486.3 22.1L487.3 22.2L488.3 22.2L489.3 22.2L490.3 22L491.3 22L492.3 22L493.3 21.9L494.3 21.9L495.3 22L496.3 22.2L497.3 22.4L498.3 22.5L499.3 22.2L500.3 21.7L501.3 21.4L502.3 21.3L503.3 21.3L504.3 21.3L505.3 21.3L506.3 21.2L507.3 21.3L508.3 21.5L509.3 21.6L510.3 21.5L511.3 21.3L512.3 21L513.3 20.8L514.3 20.8L515.3 20.8L516.3 20.8L517.3 20.8L518.3 20.8L519.3 20.7L520.3 20.7L521.3 20.7L522.3 20.9L523.3 21.1L524.3 21.3L525.3 21.5L526.3 21.6L527.3 21.6L528.3 21.5L529.3 21.3L530.3 21.1L531.3 21.1L532.3 21.2L533.3 21.3L534.3 21.3L535.3 21.3L536.3 21.3L537.3 21.3L537.6 21.3L539.6 21.6L541.2 22.5L542.6 24.5L546.6 35.4L549 42.4L551.4 49.4L553.8 56.4L556.2 63.5L558.6 70.5L561 77.5L563.4 84.5L565.8 91.6L568.2 98.6L570.6 105.6L571.6 107.7L572.6 109.8L573.6 111.8L574.6 113.7L575.6 115.7L576.6 117.5L577.6 119.3L578.6 121L579.6 122.6L580.6 124.1L581.6 125.7L582.6 127.3L583.6 129.1L584.6 130.8L585.6 132.4L586.6 134L587.6 135.6L588.6 137.3L589.6 139L590.6 140.7L591.6 142.4L592.6 144L593.6 145.4L594.6 146.7L595.6 148L596.6 149.5L597.6 151L598.6 152.5L599.6 153.8L600.6 155.1L601.6 156.2L602.6 157.1L603.6 158L604.6 159.1L605.6 160.2L606.6 161.2L607.6 161.9L608.6 162.3L609.6 162.5L610.6 162.8L611.6 163.4L612.6 163.8L613.6 164.2L614.6 164.4L615.6 164.9L616.6 165.9L617.6 167L618.6 167.9L619.6 168.2L620.6 168.2L621.6 168.1L622.6 168.3L623.6 168.5L624.6 169L625.6 169.5L626.6 170.1L627.6 170.8L628.6 171.5L629.6 172L630.6 172.3L631.6 172.5L632.6 172.5L633.6 172.5L634.6 172.5L635.6 172.7L636.6 173L637.6 173.5L638.6 174L639.6 174.5L640.6 174.8L641.6 175L642.6 175L643.6 175.1L644.6 175.1L645.6 175.1L646.6 175.3L647.6 175.6L648.6 176L649.6 176.7L650.6 177.2L651.6 177.5L652.6 177.6L653.6 177.5L654.6 177.3L655.6 177.1L656.6 177L657.6 177.3L658.6 177.7L659.6 178.3L660.6 178.7L661.6 178.7L662.6 178.4L663.6 178.2L664.6 178.3L665.6 178.7L666.6 179.1L667.6 179.5L668.6 179.8L669.6 180L670.6 180L671.6 180L672.6 179.9L673.6 179.8L674.6 180L675.6 180.4L676.6 180.8L677.6 180.9L678.6 180.9L679.6 180.7L680.6 180.6L681.6 180.6L682.6 180.9L683.6 181.3L684.6 181.6L685.6 181.7L686.6 181.5L687.6 181.1L688.6 180.9L689.6 181L690.6 181.2L691.6 181.4L692.6 181.6L693.6 181.7L694.6 181.8L695.6 181.7L696.6 181.6L697.6 181.6L698.6 181.6L699.6 181.8L700.6 181.7L701.6 181.4L702.6 181L703.6 180.7L704.6 180.8L705.6 181.2L706.6 181.8L707.6 182L708.6 182L709.6 181.9L710.6 181.7L711.6 181.7L712.6 181.8L713.6 181.8L714.6 181.6L715.6 181.5L716.6 181.5L717.6 181.7L718.6 181.9L719.6 182L720.6 181.9L721.6 181.8L722.6 182L723.6 182.4L724.6 182.7L725.6 182.8L726.6 182.9L727.6 182.9L728.6 183L729.6 183.1L730.6 183L731.6 182.8L732.6 182.7L733.6 182.8L734.6 182.9L735.6 182.8L736.6 182.7L737.6 182.6L738.6 182.8L739.6 183L740.6 183.2L741.6 183.3L742.6 183.4L743.6 183.4L744.6 183.3L745.6 183.2L746.6 183.1L747.6 182.9L748.6 182.9L749.6 182.9L750.6 182.9L751.6 182.9L752.6 182.9L753.6 183L754.6 183.2L755.6 183.3L756.6 183.5L757.6 183.6L758.6 183.8" stroke="#f26a2a" stroke-width="1.4"/>
</g>
<path d="M9.8 0v3M9.8 202v-3M28.8 0v3M28.8 202v-3M47.7 0v5.5M66.6 0v3M66.6 202v-3M85.6 0v3M85.6 202v-3M104.5 0v3M104.5 202v-3M123.5 0v3M123.5 202v-3M142.4 0v5.5M161.3 0v3M161.3 202v-3M180.3 0v3M180.3 202v-3M199.2 0v3M199.2 202v-3M218.2 0v3M218.2 202v-3M237.1 0v5.5M256 0v3M256 202v-3M275 0v3M275 202v-3M293.9 0v3M293.9 202v-3M312.9 0v3M312.9 202v-3M331.8 0v5.5M350.7 0v3M350.7 202v-3M369.7 0v3M369.7 202v-3M388.6 0v3M388.6 202v-3M407.6 0v3M407.6 202v-3M426.5 0v5.5M445.4 0v3M445.4 202v-3M464.4 0v3M464.4 202v-3M0 4.3h3M473.8 4.3h-2.8M0 16.3h3M473.8 16.3h-2.8M0 28.3h3M473.8 28.3h-2.8M0 40.3h3M473.8 40.3h-2.8M0 52.3h6M473.8 52.3h-2.8M0 64.3h3M473.8 64.3h-2.8M0 76.3h3M473.8 76.3h-2.8M0 88.3h3M473.8 88.3h-2.8M0 100.3h3M473.8 100.3h-2.8M0 112.3h6M473.8 112.3h-2.8M0 124.3h3M473.8 124.3h-2.8M0 136.3h3M473.8 136.3h-2.8M0 148.3h3M473.8 148.3h-2.8M0 160.3h3M473.8 160.3h-2.8M0 172.3h6M473.8 172.3h-2.8M0 184.3h3M473.8 184.3h-2.8M0 196.3h3M473.8 196.3h-2.8" stroke="#858b8e" stroke-width="0.8" fill="none"/>
<g transform="translate(470.3,3.5)"><path d="M-19 0H0V18Z" fill="#6f7477"/><circle cx="-3.6" cy="3.4" r="1.9" fill="none" stroke="#d4d8da" stroke-width="1.2"/><path d="M-5 5Q-7.500 6.800 -8.800 9.600" stroke="#d4d8da" stroke-width="1.7" fill="none" stroke-linecap="round"/></g>
</svg>
<div class="lbl" style="left:17.7px;top:194.8px;width:60px;text-align:center;">-10 ns</div>
<div class="lbl" style="left:112.4px;top:194.8px;width:60px;text-align:center;">-5 ns</div>
<div class="lbl" style="left:207.1px;top:194.8px;width:60px;text-align:center;">0 s</div>
<div class="lbl" style="left:301.8px;top:194.8px;width:60px;text-align:center;">5 ns</div>
<div class="lbl" style="left:396.5px;top:194.8px;width:60px;text-align:center;">10 ns</div>
<div class="lbl" style="right:4px;top:48.3px;text-align:right;">2 V</div>
<div class="lbl" style="right:4px;top:108.3px;text-align:right;">1.5 V</div>
<div class="lbl" style="right:4px;top:168.3px;text-align:right;">1 V</div>
<div class="lbl" style="left:5.3px;top:158.6px;color:#f4f4f4;font-size:6.5px;text-shadow:0 0 .5px #fff">Eye:&nbsp;&nbsp; AllBits</div>
<div class="lbl" style="left:5.3px;top:169px;color:#f4f4f4;font-size:6.5px;text-shadow:0 0 .5px #fff">Offset:&nbsp; 1.574713</div>
<div class="lbl" style="left:5.3px;top:180px;color:#f4f4f4;font-size:6.5px;opacity:.7">UIs:&nbsp; 75000 &nbsp;Total:&nbsp; 5039360</div>
</div>
<div class="a" style="left:956.2px;top:274px;width:1.8px;height:1.8px;background:#e8e8e8;border-radius:1px"></div>
<div class="a" style="left:956.2px;top:278.3px;width:1.8px;height:1.8px;background:#e8e8e8;border-radius:1px"></div>
<div class="a" style="left:956.2px;top:282.6px;width:1.8px;height:1.8px;background:#e8e8e8;border-radius:1px"></div>
<div class="ptitle" style="left:0px;top:367px;width:315.9px;height:12.5px;">Plot 4 - Bathtub (Meas1)<svg class="x" style="right:7px" viewBox="0 0 7 7"><path d="M0.5 0.5L6.5 6.5M6.500 0.500L0.500 6.500" stroke="#cfd2d4" stroke-width="1.25" fill="none"/></svg></div>
<div class="a" style="left:315.9px;top:367px;width:3.4px;height:174px;background:#8a9194"></div>
<div class="a" style="left:0px;top:538.8px;width:953px;height:2.2px;background:#8a9194"></div>
<div class="plot" style="left:0px;top:379.5px;width:315.9px;height:159.3px">
<svg class="a" style="left:0;top:0" width="315.9" height="159.3" viewBox="0 0 315.9 159.3">
<path d="M32.6 0V159.3M95.6 0V159.3M158.6 0V159.3M221.6 0V159.3M284.6 0V159.3M0 19.5H315.9M0 47.5H315.9M0 75.5H315.9M0 103.5H315.9M0 131.5H315.9" stroke="#202427" stroke-width="0.8" stroke-dasharray="0.8 4.2" fill="none"/>
<path d="M1.6 2C3 12 4.6 28 6.2 50S8.6 90 9 110L9.4 160" stroke="#4ec24a" stroke-width="1.1" fill="none"/>
<path d="M314.9 2C313.5 12 311.9 28 310.5 50S308.5 90 308.2 110L307.9 160" stroke="#4ec24a" stroke-width="1.1" fill="none"/>
<path d="M11 112.5H305.9" stroke="#a24aa6" stroke-width="1.3"/>
<path d="M19 109.5L11 112.5L19 115.5M297.9 109.5L305.9 112.5L297.9 115.5" stroke="#a24aa6" stroke-width="1.3" fill="none"/>
<path d="M0 0.4h3M315.9 0.4h-3M0 0.8h5.5M315.9 0.8h-5.5M0 3.6h3M315.9 3.6h-3M0 5.3h3M315.9 5.3h-3M0 6.5h3M315.9 6.5h-3M0 7.4h3M315.9 7.4h-3M0 8.1h3M315.9 8.1h-3M0 8.7h3M315.9 8.7h-3M0 9.3h3M315.9 9.3h-3M0 9.7h3M315.9 9.7h-3M0 10.2h5.5M315.9 10.2h-5.5M0 13h3M315.9 13h-3M0 14.6h3M315.9 14.6h-3M0 15.8h3M315.9 15.8h-3M0 16.7h3M315.9 16.7h-3M0 17.4h3M315.9 17.4h-3M0 18.1h3M315.9 18.1h-3M0 18.6h3M315.9 18.6h-3M0 19.1h3M315.9 19.1h-3M0 19.5h5.5M315.9 19.5h-5.5M0 22.3h3M315.9 22.3h-3M0 24h3M315.9 24h-3M0 25.1h3M315.9 25.1h-3M0 26h3M315.9 26h-3M0 26.8h3M315.9 26.8h-3M0 27.4h3M315.9 27.4h-3M0 27.9h3M315.9 27.9h-3M0 28.4h3M315.9 28.4h-3M0 28.8h5.5M315.9 28.8h-5.5M0 31.6h3M315.9 31.6h-3M0 33.3h3M315.9 33.3h-3M0 34.5h3M315.9 34.5h-3M0 35.4h3M315.9 35.4h-3M0 36.1h3M315.9 36.1h-3M0 36.7h3M315.9 36.7h-3M0 37.3h3M315.9 37.3h-3M0 37.7h3M315.9 37.7h-3M0 38.2h5.5M315.9 38.2h-5.5M0 41h3M315.9 41h-3M0 42.6h3M315.9 42.6h-3M0 43.8h3M315.9 43.8h-3M0 44.7h3M315.9 44.7h-3M0 45.4h3M315.9 45.4h-3M0 46.1h3M315.9 46.1h-3M0 46.6h3M315.9 46.6h-3M0 47.1h3M315.9 47.1h-3M0 47.5h5.5M315.9 47.5h-5.5M0 50.3h3M315.9 50.3h-3M0 52h3M315.9 52h-3M0 53.1h3M315.9 53.1h-3M0 54h3M315.9 54h-3M0 54.8h3M315.9 54.8h-3M0 55.4h3M315.9 55.4h-3M0 55.9h3M315.9 55.9h-3M0 56.4h3M315.9 56.4h-3M0 56.8h5.5M315.9 56.8h-5.5M0 59.6h3M315.9 59.6h-3M0 61.3h3M315.9 61.3h-3M0 62.5h3M315.9 62.5h-3M0 63.4h3M315.9 63.4h-3M0 64.1h3M315.9 64.1h-3M0 64.7h3M315.9 64.7h-3M0 65.3h3M315.9 65.3h-3M0 65.7h3M315.9 65.7h-3M0 66.2h5.5M315.9 66.2h-5.5M0 69h3M315.9 69h-3M0 70.6h3M315.9 70.6h-3M0 71.8h3M315.9 71.8h-3M0 72.7h3M315.9 72.7h-3M0 73.4h3M315.9 73.4h-3M0 74.1h3M315.9 74.1h-3M0 74.6h3M315.9 74.6h-3M0 75.1h3M315.9 75.1h-3M0 75.5h5.5M315.9 75.5h-5.5M0 78.3h3M315.9 78.3h-3M0 80h3M315.9 80h-3M0 81.1h3M315.9 81.1h-3M0 82h3M315.9 82h-3M0 82.8h3M315.9 82.8h-3M0 83.4h3M315.9 83.4h-3M0 83.9h3M315.9 83.9h-3M0 84.4h3M315.9 84.4h-3M0 84.8h5.5M315.9 84.8h-5.5M0 87.6h3M315.9 87.6h-3M0 89.3h3M315.9 89.3h-3M0 90.5h3M315.9 90.5h-3M0 91.4h3M315.9 91.4h-3M0 92.1h3M315.9 92.1h-3M0 92.7h3M315.9 92.7h-3M0 93.3h3M315.9 93.3h-3M0 93.7h3M315.9 93.7h-3M0 94.2h5.5M315.9 94.2h-5.5M0 97h3M315.9 97h-3M0 98.6h3M315.9 98.6h-3M0 99.8h3M315.9 99.8h-3M0 100.7h3M315.9 100.7h-3M0 101.4h3M315.9 101.4h-3M0 102.1h3M315.9 102.1h-3M0 102.6h3M315.9 102.6h-3M0 103.1h3M315.9 103.1h-3M0 103.5h5.5M315.9 103.5h-5.5M0 106.3h3M315.9 106.3h-3M0 108h3M315.9 108h-3M0 109.1h3M315.9 109.1h-3M0 110h3M315.9 110h-3M0 110.8h3M315.9 110.8h-3M0 111.4h3M315.9 111.4h-3M0 111.9h3M315.9 111.9h-3M0 112.4h3M315.9 112.4h-3M0 112.8h5.5M315.9 112.8h-5.5M0 115.6h3M315.9 115.6h-3M0 117.3h3M315.9 117.3h-3M0 118.5h3M315.9 118.5h-3M0 119.4h3M315.9 119.4h-3M0 120.1h3M315.9 120.1h-3M0 120.7h3M315.9 120.7h-3M0 121.3h3M315.9 121.3h-3M0 121.7h3M315.9 121.7h-3M0 122.2h5.5M315.9 122.2h-5.5M0 125h3M315.9 125h-3M0 126.6h3M315.9 126.6h-3M0 127.8h3M315.9 127.8h-3M0 128.7h3M315.9 128.7h-3M0 129.4h3M315.9 129.4h-3M0 130.1h3M315.9 130.1h-3M0 130.6h3M315.9 130.6h-3M0 131.1h3M315.9 131.1h-3M0 131.5h5.5M315.9 131.5h-5.5M0 134.3h3M315.9 134.3h-3M0 136h3M315.9 136h-3M0 137.1h3M315.9 137.1h-3M0 138h3M315.9 138h-3M0 138.8h3M315.9 138.8h-3M0 139.4h3M315.9 139.4h-3M0 139.9h3M315.9 139.9h-3M0 140.4h3M315.9 140.4h-3M0 140.8h5.5M315.9 140.8h-5.5M0 143.6h3M315.9 143.6h-3M0 145.3h3M315.9 145.3h-3M0 146.5h3M315.9 146.5h-3M0 147.4h3M315.9 147.4h-3M0 148.1h3M315.9 148.1h-3M0 148.7h3M315.9 148.7h-3M0 149.3h3M315.9 149.3h-3M0 149.7h3M315.9 149.7h-3M0 150.2h5.5M315.9 150.2h-5.5M0 153h3M315.9 153h-3M0 154.6h3M315.9 154.6h-3M0 155.8h3M315.9 155.8h-3M0 156.7h3M315.9 156.7h-3M0 157.4h3M315.9 157.4h-3M0 158.1h3M315.9 158.1h-3M0 158.6h3M315.9 158.6h-3M0 159.1h3M315.9 159.1h-3" stroke="#9fa5a8" stroke-width="0.6" fill="none" opacity=".45"/>
<path d="M1.1 0v3M1.1 159.3v-3M16.9 0v3M16.9 159.3v-3M32.6 0v5.5M48.4 0v3M48.4 159.3v-3M64.1 0v3M64.1 159.3v-3M79.8 0v3M79.8 159.3v-3M95.6 0v5.5M111.3 0v3M111.3 159.3v-3M127.1 0v3M127.1 159.3v-3M142.8 0v3M142.8 159.3v-3M158.6 0v5.5M174.3 0v3M174.3 159.3v-3M190.1 0v3M190.1 159.3v-3M205.8 0v3M205.8 159.3v-3M221.6 0v5.5M237.3 0v3M237.3 159.3v-3M253.1 0v3M253.1 159.3v-3M268.9 0v3M268.9 159.3v-3M284.6 0v5.5M300.4 0v3M300.4 159.3v-3M316.1 0v3M316.1 159.3v-3" stroke="#858b8e" stroke-width="0.8" fill="none"/>
<g transform="translate(312.4,3.5)"><path d="M-19 0H0V18Z" fill="#6f7477"/><circle cx="-3.6" cy="3.4" r="1.9" fill="none" stroke="#d4d8da" stroke-width="1.2"/><path d="M-5 5Q-7.500 6.800 -8.800 9.600" stroke="#d4d8da" stroke-width="1.7" fill="none" stroke-linecap="round"/></g>
</svg>
<div class="lbl" style="left:2.6px;top:151.5px;width:60px;text-align:center;">-0.4 UI</div>
<div class="lbl" style="left:65.6px;top:151.5px;width:60px;text-align:center;">-0.2 UI</div>
<div class="lbl" style="left:128.6px;top:151.5px;width:60px;text-align:center;">0 UI</div>
<div class="lbl" style="left:191.6px;top:151.5px;width:60px;text-align:center;">0.2 UI</div>
<div class="lbl" style="left:254.6px;top:151.5px;width:60px;text-align:center;">0.4 UI</div>
<div class="lbl" style="right:3.5px;top:15.5px;text-align:right;">1E-2 BER</div>
<div class="lbl" style="right:3.5px;top:43.6px;text-align:right;">1E-5 BER</div>
<div class="lbl" style="right:3.5px;top:71.7px;text-align:right;">1E-8 BER</div>
<div class="lbl" style="right:3.5px;top:99.8px;text-align:right;">1E-11 BER</div>
<div class="lbl" style="right:3.5px;top:127.9px;text-align:right;">1E-14 BER</div>
</div>
<div class="ptitle" style="left:319.3px;top:367px;width:314px;height:12.5px;">Plot 2 - TIE Spectrum (Meas1)<svg class="x" style="right:7px" viewBox="0 0 7 7"><path d="M0.5 0.5L6.5 6.5M6.500 0.500L0.500 6.500" stroke="#cfd2d4" stroke-width="1.25" fill="none"/></svg></div>
<div class="a" style="left:633.3px;top:367px;width:3.2px;height:174px;background:#8a9194"></div>
<div class="plot" style="left:319.3px;top:379.5px;width:314px;height:159.3px">
<svg class="a" style="left:0;top:0" width="314" height="159.3" viewBox="0 0 314 159.3">
<path d="M38.7 0V159.3M78 0V159.3M117.3 0V159.3M156.6 0V159.3M195.9 0V159.3M235.2 0V159.3M274.5 0V159.3M313.8 0V159.3M0 2.2H314M0 33.5H314M0 64.8H314M0 96.1H314M0 127.4H314M0 158.7H314" stroke="#202427" stroke-width="0.8" stroke-dasharray="0.8 4.2" fill="none"/>
<path d="M56 28.1V73.9M134.3 43.5V90.6M156.9 29.5V92.6M178.7 52.2V94M192.3 59.5V94.5M216.7 64.1V95.2M228.4 61.5V95.4M239.7 68.5V95.5M253.5 46.9V95.5M274.5 64.1V95.5M145.3 63.5V91.7M67.6 54.5V78.3M43.4 46.5V69.4M49.7 54.5V71.8M9.7 55.5V66.7M23.7 53.5V66.5M76.7 64.5V81.6M101.7 67.5V86.6M204.7 71.5V94.9M265.7 71.5V95.5M283.7 73.5V95.1M296.7 69.5V93.8M308.7 64.5V90.6" stroke="#8d4f9c" stroke-width="0.9" fill="none"/>
<path d="M0 60.6V89.6M0.7 59.7V94.3M1.6 57.4V88.6M2.3 60V85.5M3.2 61V88.4M4.4 61.1V87.2M5.6 49.9V92.5M6.5 59.2V108.1M7.7 43.8V96.2M8.7 59.6V115.3M9.4 55.7V92.4M10.1 58.7V86.2M11.1 59.5V89.7M12.3 58.3V88.6M13.2 55.5V85.9M14.2 60.1V85.1M15.4 57.4V83.8M16.3 50.3V85.1M17 60.4V107.9M17.7 59.1V103.2M18.7 58.4V113.3M19.4 51.1V87.4M20.6 59.6V95.2M21.6 59.6V90.5M22.5 59.8V94.9M23.4 53.4V104.5M24.4 55.4V133.2M25.1 54.4V84.1M25.8 59.4V88M26.8 51V83.7M28 56.2V84.1M29 59.9V85.9M29.9 58.6V103.4M30.9 47.9V107.6M31.9 47.1V84M33.1 56.5V89.1M34 59.3V101M35.2 60.7V102.1M36.2 60V97.3M37.2 61.2V105.2M38.1 55.9V92M38.8 56V98.5M39.5 55.8V94.8M40.2 51V92.5M41.1 58.7V91M42.3 48.8V86.2M43.5 59.1V88.8M44.4 60.2V88.5M45.3 62.8V97M46.2 62.8V96.8M47.1 61.5V88.9M48.3 61.5V91.1M49.3 63.9V94.8M50.2 64.5V91.6M51.4 65.8V97.8M52.1 62.1V91.4M53 64V91.1M53.7 63.8V93.1M54.7 66.1V99.9M55.6 65.8V95.8M56.6 67V105.3M57.6 67.4V100.2M58.8 68.8V112.3M59.7 58.5V93.8M60.7 67.8V93.4M61.9 68.4V110M62.8 67.6V94.4M63.7 59.7V100.3M64.4 70.8V97.5M65.6 71V112.3M66.5 70.3V100.2M67.4 66.4V101.8M68.1 72.3V95.5M68.8 72.2V104.7M69.8 70.1V99.2M71 72.4V96.5M72.2 73.8V104.8M73.1 69.3V102.4M74.1 63.8V101.8M74.8 74.8V97M75.5 70V114.3M76.5 62.3V100.6M77.2 71.5V109.1M78.4 72.6V131.8M79.3 57.6V100.1M80.2 72.5V102.9M80.9 62.7V119.3M81.9 61.4V110.8M82.8 69.3V100M83.5 77.2V113.4M84.7 73.7V113.3M85.4 72.1V100.6M86.3 74.4V106.5M87.2 77.7V105.2M88.4 73.7V101.5M89.6 71.5V101.6M90.3 78.6V104M91.3 74.2V113M92.3 72.8V102.2M93.3 78.6V102.6M94 78.7V105.4M95 62.7V110.4M95.7 78.4V128.3M96.4 77.2V101.3M97.1 79.7V107.9M98.3 79.5V103.9M99 78.8V109M99.7 64.9V102.1M100.7 72.3V106.2M101.4 79.4V104.4M102.1 79.3V106.2M103.1 79.2V117.7M104 79.6V104.1M105 72.5V114.7M105.9 81.1V108.9M106.9 78.1V103.5M107.9 80.1V103.9M108.9 81.3V108.4M109.8 81.4V107.6M110.8 79.7V110.2M112 75.7V102.8M112.9 81.4V112M114.1 80.4V104.4M115.1 81.6V104.6M116.1 74.3V107M117.1 79.8V110.2M117.8 78.1V108.7M118.5 81.2V113.8M119.2 81.6V104.1M120.2 63.8V126.3M121.1 81.1V114.3M122 77.7V107.6M122.9 82.6V105M123.9 76.7V142.8M125.1 81.6V136.7M126 81.6V109M127.2 82.8V111.1M128.4 82.4V121.2M129.3 74.3V114.7M130 82.3V108M131.2 72.9V113.9M132.2 81.2V104.3M133.4 71V126.4M134.6 82.4V106.1M135.6 74V122.8M136.8 83.3V118.3M137.8 66.3V122.2M138.7 84.7V105.5M139.9 83.9V110.6M140.6 78V106.4M141.6 84.5V131.9M142.8 80.2V106.6M143.8 83.8V129.9M144.7 84.6V111.5M145.9 84.7V127.8M146.8 83.6V108.5M148 81.7V107.7M149 85.1V127.6M149.7 79V107.2M150.4 85.8V123.6M151.1 84.4V118.1M152.1 84.9V106.2M153.3 85.9V111.1M154.2 82.1V126.5M155.1 78.9V110.5M155.8 82.5V123.9M156.5 81.7V117.7M157.2 84.2V118M158.1 84.8V118.9M159.1 84.8V107.1M160 81.5V107.6M160.7 84.4V117.4M161.4 80.3V113.2M162.6 75V108.9M163.3 84.8V117.9M164.3 74.5V108.7M165.3 87.1V120.5M166 83.9V111.5M166.7 79.5V139M167.9 81.5V111.3M168.6 84.8V110.8M169.5 85.6V109M170.4 81.7V111.8M171.6 80.1V121.4M172.8 85.5V108.8M174 87.7V109.7M175.2 82.5V113.8M176.4 74.9V107.9M177.3 83.4V143.6M178.3 87.9V108.3M179.3 81.8V111.2M180.5 86.8V123.3M181.7 81.3V149M182.6 87.2V114.6M183.6 87.9V130.6M184.6 82.4V110.8M185.5 86V116.7M186.4 88.1V110.3M187.3 86.9V128.5M188.5 84.6V115.7M189.4 87.5V123.8M190.3 87.6V120M191.2 87.5V132.6M192.4 88.3V108.5M193.3 81.4V109.1M194.2 85.7V111.3M194.9 85.8V115.6M196.1 79.3V113.4M196.8 84.4V109.3M197.7 84.8V107.9M198.6 83.7V112M199.6 85.1V109M200.5 73.4V129.4M201.4 82.1V122M202.4 84.4V107.8M203.3 86.8V109.7M204.3 88.6V117.8M205.3 73.2V156.1M206.5 87.3V109.9M207.5 86V109M208.5 83.5V127M209.4 86V134.6M210.3 88.3V125.7M211.2 87.8V126.2M212.1 80.9V113.8M213.3 83.9V109.9M214.5 89V132.3M215.2 81.1V120.9M216.2 87V110.1M216.9 89.1V124.4M217.6 82V110.2M218.6 85.8V113.9M219.8 87.1V113.5M220.7 87V108.5M221.9 88.5V110.2M223.1 87.7V112.1M224 76.6V130M224.9 85.5V111.9M225.9 86.7V113.5M226.8 87.9V124.3M227.5 84.6V118.6M228.2 87.9V112.3M229.1 88V117.9M230.3 85.2V122M231.5 86.8V111M232.5 84.3V116.2M233.4 78.9V111.9M234.6 88.9V123.4M235.5 89.5V109.5M236.7 86.5V118M237.7 82.6V128.8M238.7 86.9V120.8M239.9 74.3V111.2M241.1 88.3V118.4M242 84.6V125.4M243.2 89.1V110.5M244.2 88.6V114.1M245.4 88.8V108.7M246.4 70.2V115.9M247.4 89.4V118.7M248.1 83.5V112.3M249.1 87V119.2M250 78.9V110.4M251 89.4V109.8M251.9 88.2V110M252.8 87.7V112.7M253.8 80V133.4M254.5 81.3V111.7M255.7 82.6V118.1M256.9 82.5V112.5M257.9 89.4V110.8M258.8 88.8V116.1M260 86.6V108.8M260.7 84.3V117.5M261.6 87.8V132.4M262.8 87.5V117.5M263.5 87.4V127.4M264.5 83.3V111.5M265.4 84.7V115M266.4 81V116.9M267.3 82.2V112.9M268.5 86.7V108.2M269.4 89.3V110.1M270.1 79.9V108.5M271.1 88.3V116.6M272.3 82.3V134.6M273.2 86.2V107.8M273.9 87.6V126.9M275.1 88.3V107.4M276.1 81.2V126.2M277.1 85.2V108.9M278.3 85.3V108.4M279.2 88.4V107.5M280.2 88.5V125.7M281.2 84.8V116.8M282.4 86.2V109.2M283.1 88.8V109.5M283.8 82.8V113.2M285 88.8V109.8M285.7 87V108.6M286.4 88.6V112.6M287.3 82.2V109.1M288.5 86.9V120.3M289.2 86V123.7M290.1 84.6V120.9M291 88.4V113.7M291.9 88.2V108M292.9 88.2V108M293.9 81.6V107.8M294.6 88.1V108.7M295.6 83.3V112.5M296.6 85.3V131.5M297.3 86.4V119M298 76.8V108.8M299 86.3V140M300.2 82V121.6M301.2 84.4V112.9M302.2 86.4V105.5M303.1 82.9V114.1M304.1 78.9V125.3M305 81.3V111.2M305.7 83.9V119.7M306.9 75.3V126.6M308.1 77.9V110.7M308.8 83.8V103.9M309.8 76.6V103.9M310.5 82.6V117M311.7 82.9V116M312.7 82.4V115.2M313.9 78.8V119" stroke="#bb75c7" stroke-width="0.9" fill="none"/>
<path d="M0 61.6V81M0.5 62V80.7M1 61.6V81M1.5 61.6V79.9M2 62.1V81.4M2.5 63.2V80M3 61.5V81.5M3.5 61.9V80.3M4 61.4V78.7M4.5 61.4V79.2M5 61.7V80.6M5.5 61.6V81.1M6 61.1V81.2M6.5 61.6V80.9M7 61.7V79.4M7.5 61.7V81M8 61.6V78.9M8.5 62.2V81.5M9 61V80.8M9.5 60.8V81M10 61V80.4M10.5 61V80M11 62.2V80.6M11.5 61.7V81M12 61.5V80M12.5 61.5V81.5M13 62V80.9M13.5 60.7V79.3M14 61.3V81M14.5 62.7V79.6M15 61.4V80.7M15.5 60.9V80.6M16 62.2V80.8M16.5 61.7V78.8M17 60.8V81.4M17.5 60.7V81.4M18 60.6V80.4M18.5 61.2V81.2M19 61.2V81.3M19.5 61.1V80.3M20 64V80.3M20.5 61V80.2M21 61.7V80.2M21.5 62.2V79.3M22 61.6V80.2M22.5 60.7V80.1M23 61.5V80.5M23.5 61V80.3M24 61.8V81.2M24.5 61.3V80.5M25 61.9V80.6M25.5 62.4V79M26 60.8V79M26.5 61.2V80.9M27 61V78.9M27.5 62.9V78.1M28 61.3V78.6M28.5 60.7V81M29 61.8V80.5M29.5 60.8V78.4M30 60.9V80.3M30.5 60.9V81.2M31 60.6V81M31.5 61.7V81.1M32 62V79.5M32.5 61.5V80.9M33 61.4V81.1M33.5 60.9V80.9M34 61.5V79.1M34.5 61.1V81.1M35 62.4V80.7M35.5 62.6V81.8M36 61.4V81.9M36.5 63.6V82M37 61.5V81.4M37.5 61.6V81.4M38 62.3V81.1M38.5 64.6V82.3M39 62.2V81.9M39.5 63.1V82.1M40 62.9V82.2M40.5 62.8V82.3M41 63.3V83.1M41.5 63.8V82.2M42 63.5V83.1M42.5 64.2V82.2M43 65.7V83.2M43.5 64.3V83.8M44 64.5V84M44.5 64.6V83.5M45 64.3V83.2M45.5 64.4V84.8M46 64.5V84.9M46.5 65V85.3M47 65.6V85.7M47.5 65.6V85.1M48 65.4V84.8M48.5 65.6V84.6M49 67V86.4M49.5 66.4V85.5M50 66.1V85.8M50.5 67.6V85M51 67.1V85.8M51.5 68.8V87.3M52 66.7V85.2M52.5 67.6V86M53 68V86.4M53.5 68.7V87.8M54 67.6V87.2M54.5 67.6V86.9M55 68.6V86.1M55.5 68.1V86.7M56 69V88.7M56.5 68.3V86.9M57 70.3V88.6M57.5 68.7V89M58 68.7V88.7M58.5 69.6V88.9M59 69.3V88.3M59.5 70.5V87.5M60 69.6V88M60.5 71.3V89.8M61 71.3V87.9M61.5 70.4V89.1M62 70.8V88M62.5 70.6V90.6M63 72.2V91M63.5 71.5V89.6M64 72.8V89.2M64.5 72.8V89.8M65 71.4V91.5M65.5 71.8V91.9M66 72.6V91.1M66.5 72V90.1M67 73.6V91.9M67.5 73.2V90.4M68 73.7V91.9M68.5 73.4V91.5M69 74.5V93M69.5 74.1V92.6M70 73.4V92.6M70.5 75.6V93.5M71 74.7V91.8M71.5 73.9V93.9M72 74.1V93.6M72.5 75V89.6M73 74.9V93M73.5 74.8V93.3M74 76.9V94M74.5 75.8V94M75 75.7V94.2M75.5 75.5V94.6M76 75.7V92.6M76.5 76.3V93.1M77 77V95.2M77.5 76.2V95M78 77.4V93.1M78.5 78.3V95.4M79 78.6V95.8M79.5 77.7V95.7M80 76.9V96.1M80.5 77.2V94.5M81 77.4V95.5M81.5 77.3V94.9M82 78.2V95.2M82.5 77.3V96.6M83 78.6V96.8M83.5 77.8V96.1M84 78.3V96M84.5 79.1V96.5M85 78.3V93.7M85.5 78V96.9M86 78.8V94.3M86.5 78.9V97.5M87 78.8V97.6M87.5 79.2V96.2M88 79.5V97.8M88.5 78.7V97.7M89 79.5V95.8M89.5 79.9V98M90 79.1V95M90.5 79.7V97.8M91 79.3V97.9M91.5 80.6V98M92 79.3V96.9M92.5 79.8V96M93 80.5V97.3M93.5 80.2V97.8M94 80.2V97.8M94.5 79.9V94.4M95 79.8V97.2M95.5 80V96.7M96 80.3V95.3M96.5 81.4V98.4M97 80.4V97.9M97.5 80.9V97.4M98 81.1V98.5M98.5 80.7V99.1M99 81.1V99.1M99.5 82.3V98.2M100 80.8V98M100.5 80.6V97.2M101 80.8V96.5M101.5 80.9V98.7M102 81V99M102.5 82.2V99.5M103 81.9V99.4M103.5 82.3V98.4M104 81.2V99.3M104.5 81.8V97.8M105 82V99.2M105.5 82V99.1M106 83.1V99.5M106.5 82V100M107 82.9V99.1M107.5 81.4V98.2M108 83.1V99.7M108.5 81.6V97.9M109 82.9V100.3M109.5 83.8V97.8M110 81.7V99.5M110.5 82.1V98.9M111 83.4V99.1M111.5 82.1V97.3M112 83.6V99.1M112.5 82.8V100M113 84.1V100.2M113.5 84.6V100.1M114 83.2V100.7M114.5 83.9V100.7M115 82.4V100.5M115.5 82.9V100.9M116 83.7V98.4M116.5 82.9V99.4M117 83.2V98.9M117.5 83.3V100.6M118 83.7V99.1M118.5 85.3V98.8M119 83.6V100.4M119.5 83.3V100.8M120 83.6V99.2M120.5 83.8V101.2M121 84.6V100.3M121.5 83.2V101.3M122 83.9V101.2M122.5 83.8V100.5M123 84.5V100.8M123.5 84.7V100.5M124 83.8V99.3M124.5 84.6V100.5M125 84V101.7M125.5 84.8V100.3M126 83.9V99.3M126.5 84.2V99.5M127 84.3V100.4M127.5 84.6V100.2M128 83.9V98.7M128.5 84.8V101.5M129 84.7V100.3M129.5 84.4V100.5M130 85.3V100.9M130.5 84.6V101M131 86.3V101.2M131.5 85.9V99.9M132 84.8V100.2M132.5 85.6V102M133 84.5V102M133.5 84.8V99.6M134 85.4V100.8M134.5 85.6V102.3M135 86.5V101.1M135.5 85.5V101.8M136 85.2V101M136.5 84.9V102.3M137 85.6V101.1M137.5 86.4V102.5M138 85.7V99.6M138.5 86.1V101.6M139 86.7V102.5M139.5 86.5V102.2M140 85.4V102.3M140.5 86V100.8M141 86.5V102.7M141.5 85.5V102.2M142 86.5V101.7M142.5 85.7V101.9M143 87.1V102.7M143.5 86.2V102.7M144 85.6V102.6M144.5 85.7V101.1M145 87.3V102.9M145.5 86.8V100.1M146 85.8V102.2M146.5 86.9V101.6M147 86.2V102.3M147.5 87.4V103.1M148 87V102.7M148.5 86.1V103.2M149 86.3V101.1M149.5 87.1V101.4M150 87.3V102.7M150.5 86.8V103.6M151 86.6V102.8M151.5 86.3V100.2M152 86.7V103.5M152.5 86.8V102.7M153 86.4V102.2M153.5 87.1V103.4M154 87.3V103M154.5 86.4V102.9M155 86.9V103.3M155.5 88V102.1M156 88V103.5M156.5 86.9V102.6M157 87.6V103.5M157.5 87.9V103.4M158 87V100.9M158.5 88.1V102.5M159 86.9V104M159.5 88.3V101.6M160 87.9V103M160.5 87.9V103.2M161 88.1V103.9M161.5 87.1V103.7M162 87.7V104.1M162.5 87.2V102.3M163 88.6V102.8M163.5 88.7V102.9M164 88.6V103.7M164.5 87.2V103.7M165 87.3V101.8M165.5 88.5V103.7M166 87.5V103.6M166.5 88.2V101.7M167 88.5V103.1M167.5 87.7V102.4M168 89.8V104.2M168.5 88.2V103.9M169 88V104M169.5 88.1V103.6M170 87.9V103.2M170.5 88.4V104.2M171 88V104.5M171.5 87.6V103M172 87.7V104.3M172.5 89.5V103.8M173 89V104.4M173.5 89.4V102.1M174 88V103.2M174.5 88.3V104.5M175 88.2V103.1M175.5 89V102.5M176 89.2V104M176.5 88.5V103.8M177 89.7V104.6M177.5 88V104M178 88.7V102.3M178.5 89.2V104.1M179 88.8V104.8M179.5 88.7V104.3M180 88.4V104.4M180.5 88.3V104.5M181 90.9V103.7M181.5 88.5V105.2M182 88.3V102.8M182.5 89V104.1M183 88.5V104.2M183.5 88.6V105.1M184 88.7V104.1M184.5 89.3V104.4M185 89.2V105.3M185.5 89.1V104.3M186 89.1V104.5M186.5 89.8V104M187 88.9V102.9M187.5 88.8V104.7M188 90.1V104.7M188.5 89.8V105M189 89.7V104.4M189.5 89.5V103.6M190 89.4V102.7M190.5 90.1V103.6M191 88.9V104.6M191.5 89.2V104.1M192 89V103.5M192.5 89.6V104.7M193 88.9V105.5M193.5 89.2V105M194 88.8V104.2M194.5 88.8V104.2M195 88.8V105.5M195.5 89.7V103.9M196 90V104.4M196.5 88.7V105M197 89V103.2M197.5 89.6V103.1M198 88.8V101.6M198.5 88.7V105.1M199 89.8V102M199.5 90V104.2M200 88.8V104.7M200.5 89.8V104.7M201 89.3V105.1M201.5 89.1V105M202 89.7V105M202.5 89V105.1M203 89.2V103.8M203.5 89.8V104.3M204 90V105.6M204.5 89.6V105.2M205 90V104.7M205.5 91V105.4M206 89.9V105.3M206.5 91.2V102.9M207 89.3V104.9M207.5 89.2V104.6M208 89V104.7M208.5 89.4V105.1M209 90.1V103.2M209.5 90V104.4M210 89.6V104M210.5 89.5V105.4M211 89.2V105.8M211.5 89.6V105.1M212 89.5V105.7M212.5 90.2V103.9M213 89.6V104.9M213.5 89.9V103.8M214 89.4V105.6M214.5 89.2V103.5M215 89.8V104.8M215.5 89.2V104.4M216 90V102.9M216.5 90.9V105.1M217 90.1V104M217.5 89.4V103.4M218 89.8V105.2M218.5 89.4V104.7M219 89.9V104.5M219.5 89.6V104.6M220 89.8V105.5M220.5 91.4V105.8M221 89.4V105.6M221.5 91.3V104.9M222 89.3V103.4M222.5 90.7V105.1M223 89.4V105.6M223.5 89.9V104.8M224 90.3V105.7M224.5 89.8V104.9M225 89.7V105.2M225.5 89.8V101.1M226 90V102.1M226.5 89.5V105M227 89.5V104.3M227.5 89.7V105.6M228 90.7V105.5M228.5 90.6V105.4M229 90.9V104.4M229.5 90V104.5M230 90.8V105.3M230.5 90V104.8M231 89.8V104.1M231.5 91.4V104.3M232 90.3V103.1M232.5 91.6V104.3M233 90.4V105.6M233.5 90.1V105.1M234 90V104M234.5 90V104.1M235 90V105M235.5 89.8V100.9M236 90.9V105.7M236.5 90.1V105.9M237 90.9V104.4M237.5 90.2V104.8M238 90.3V105.8M238.5 89.7V105.1M239 91.4V104.3M239.5 90.2V105.6M240 90.2V104M240.5 90.1V104.5M241 91.7V105.5M241.5 91.4V104.8M242 90.5V106M242.5 90.3V105.4M243 90.3V105.3M243.5 89.9V105.1M244 90.4V104.4M244.5 90.1V104.2M245 90.5V105.3M245.5 91.7V105.3M246 90.2V104.1M246.5 90V104.7M247 89.7V105.8M247.5 90.8V105.9M248 89.9V104M248.5 89.7V105.9M249 90.7V105.8M249.5 90.8V104.1M250 90.3V104.2M250.5 90.1V105.6M251 90.3V104.9M251.5 90.2V104.1M252 89.8V105.3M252.5 89.9V104.6M253 89.6V104.8M253.5 90.7V101.9M254 90.3V104.6M254.5 89.5V105.4M255 89.7V103.9M255.5 91.2V105.9M256 91.1V104.9M256.5 89.9V105.2M257 90.8V105.4M257.5 90.2V104.6M258 90.4V103.2M258.5 90.8V105.8M259 89.8V105.3M259.5 90.3V104.6M260 90V105.5M260.5 90.5V105.5M261 91.4V104.7M261.5 89.5V105.2M262 90.8V104.8M262.5 90.2V105.5M263 92.1V103M263.5 89.7V105.2M264 90.6V105.1M264.5 90.1V103.6M265 89.9V105.3M265.5 89.6V105.1M266 90.8V104.8M266.5 89.6V105.5M267 90.6V104.9M267.5 90.1V105.5M268 90.8V104.7M268.5 89.6V103.3M269 90.6V104.3M269.5 89.6V102.8M270 89.5V105.2M270.5 90.6V105M271 89.8V105.5M271.5 90.4V104.6M272 90.6V105.1M272.5 89.8V103.6M273 89.9V104.8M273.5 89.6V105.1M274 90.9V104.4M274.5 89.5V103.5M275 90.4V104.1M275.5 90.7V102.2M276 90.5V105.1M276.5 92V105.2M277 89.9V104.6M277.5 89.6V104.8M278 91.5V104.2M278.5 90.1V104.8M279 92.2V104.3M279.5 90.5V104.4M280 89.4V103.4M280.5 90V105.1M281 89.3V103.8M281.5 90.8V104M282 91V104.6M282.5 89.4V103.3M283 90.8V104.4M283.5 89.5V104.9M284 89.9V104.9M284.5 89.3V104.5M285 89.3V104M285.5 90.6V104.8M286 89.8V100.9M286.5 91.1V104M287 89.8V104.5M287.5 89.8V104.7M288 89.7V103.6M288.5 88.9V102.4M289 89.5V102.2M289.5 90.7V103.6M290 88.9V103.9M290.5 89.1V103.5M291 89.1V103.3M291.5 89.8V103.6M292 88.5V101.4M292.5 89.2V103.3M293 89V102.4M293.5 88.6V103.6M294 88.7V103.2M294.5 90.1V103.8M295 88.7V100.5M295.5 88.2V101.8M296 88.3V102.3M296.5 88.1V102.3M297 87.7V103.2M297.5 88.8V102.2M298 87.6V102.6M298.5 87.5V103.2M299 87.8V101.1M299.5 87.8V101.5M300 88.3V99.7M300.5 87.5V101.7M301 88V103M301.5 86.7V102.5M302 87.3V101.5M302.5 87V100.8M303 87.6V101M303.5 87.4V101.2M304 87.3V102M304.5 86.5V101.4M305 86V101.9M305.5 87.1V101.2M306 85.7V100.2M306.5 85.4V99.9M307 85.7V100.2M307.5 85.9V101.3M308 86.6V101.2M308.5 84.7V99.4M309 84.8V100.3M309.5 84.8V101M310 84.9V99.8M310.5 85.3V100.2M311 84.3V100.6M311.5 84.3V99.3M312 83.9V100.2M312.5 83.3V98.7M313 83.9V97.8M313.5 83.7V99.5" stroke="#c680d0" stroke-width="0.8" fill="none"/>
<path d="M0 2.2h5.5M314 2.2h-5.5M0 33.5h5.5M314 33.5h-5.5M0 24.1h3M314 24.1h-3M0 18.6h3M314 18.6h-3M0 14.7h3M314 14.7h-3M0 11.6h3M314 11.6h-3M0 9.1h3M314 9.1h-3M0 7h3M314 7h-3M0 5.2h3M314 5.2h-3M0 3.6h3M314 3.6h-3M0 64.8h5.5M314 64.8h-5.5M0 55.4h3M314 55.4h-3M0 49.9h3M314 49.9h-3M0 46h3M314 46h-3M0 42.9h3M314 42.9h-3M0 40.4h3M314 40.4h-3M0 38.3h3M314 38.3h-3M0 36.5h3M314 36.5h-3M0 34.9h3M314 34.9h-3M0 96.1h5.5M314 96.1h-5.5M0 86.7h3M314 86.7h-3M0 81.2h3M314 81.2h-3M0 77.3h3M314 77.3h-3M0 74.2h3M314 74.2h-3M0 71.7h3M314 71.7h-3M0 69.6h3M314 69.6h-3M0 67.8h3M314 67.8h-3M0 66.2h3M314 66.2h-3M0 127.4h5.5M314 127.4h-5.5M0 118h3M314 118h-3M0 112.5h3M314 112.5h-3M0 108.6h3M314 108.6h-3M0 105.5h3M314 105.5h-3M0 103h3M314 103h-3M0 100.9h3M314 100.9h-3M0 99.1h3M314 99.1h-3M0 97.5h3M314 97.5h-3M0 158.7h5.5M314 158.7h-5.5M0 149.3h3M314 149.3h-3M0 143.8h3M314 143.8h-3M0 139.9h3M314 139.9h-3M0 136.8h3M314 136.8h-3M0 134.3h3M314 134.3h-3M0 132.2h3M314 132.2h-3M0 130.4h3M314 130.4h-3M0 128.8h3M314 128.8h-3" stroke="#9fa5a8" stroke-width="0.6" fill="none" opacity=".45"/>
<path d="M7.3 0v3M7.3 159.3v-3M15.1 0v3M15.1 159.3v-3M23 0v3M23 159.3v-3M30.8 0v3M30.8 159.3v-3M38.7 0v5.5M46.6 0v3M46.6 159.3v-3M54.4 0v3M54.4 159.3v-3M62.3 0v3M62.3 159.3v-3M70.1 0v3M70.1 159.3v-3M78 0v5.5M85.9 0v3M85.9 159.3v-3M93.7 0v3M93.7 159.3v-3M101.6 0v3M101.6 159.3v-3M109.4 0v3M109.4 159.3v-3M117.3 0v5.5M125.2 0v3M125.2 159.3v-3M133 0v3M133 159.3v-3M140.9 0v3M140.9 159.3v-3M148.7 0v3M148.7 159.3v-3M156.6 0v5.5M164.5 0v3M164.5 159.3v-3M172.3 0v3M172.3 159.3v-3M180.2 0v3M180.2 159.3v-3M188 0v3M188 159.3v-3M195.9 0v5.5M203.8 0v3M203.8 159.3v-3M211.6 0v3M211.6 159.3v-3M219.5 0v3M219.5 159.3v-3M227.3 0v3M227.3 159.3v-3M235.2 0v5.5M243.1 0v3M243.1 159.3v-3M250.9 0v3M250.9 159.3v-3M258.8 0v3M258.8 159.3v-3M266.6 0v3M266.6 159.3v-3M274.5 0v5.5M282.4 0v3M282.4 159.3v-3M290.2 0v3M290.2 159.3v-3M298.1 0v3M298.1 159.3v-3M305.9 0v3M305.9 159.3v-3M313.8 0v5.5" stroke="#858b8e" stroke-width="0.8" fill="none"/>
<g transform="translate(310.5,3.5)"><path d="M-19 0H0V18Z" fill="#6f7477"/><circle cx="-3.6" cy="3.4" r="1.9" fill="none" stroke="#d4d8da" stroke-width="1.2"/><path d="M-5 5Q-7.500 6.800 -8.800 9.600" stroke="#d4d8da" stroke-width="1.7" fill="none" stroke-linecap="round"/></g>
</svg>
<div class="lbl" style="left:8.7px;top:151.5px;width:60px;text-align:center;">5 MHz</div>
<div class="lbl" style="left:48px;top:151.5px;width:60px;text-align:center;">10 MHz</div>
<div class="lbl" style="left:87.3px;top:151.5px;width:60px;text-align:center;">15 MHz</div>
<div class="lbl" style="left:126.6px;top:151.5px;width:60px;text-align:center;">20 MHz</div>
<div class="lbl" style="left:165.9px;top:151.5px;width:60px;text-align:center;">25 MHz</div>
<div class="lbl" style="left:205.2px;top:151.5px;width:60px;text-align:center;">30 MHz</div>
<div class="lbl" style="left:244.5px;top:151.5px;width:60px;text-align:center;">35 MHz</div>
<div class="lbl" style="right:4px;top:29.5px;text-align:right;">10 ps</div>
<div class="lbl" style="right:4px;top:60.8px;text-align:right;">1 ps</div>
<div class="lbl" style="right:4px;top:92.1px;text-align:right;">100 fs</div>
<div class="lbl" style="right:4px;top:123.4px;text-align:right;">10 fs</div>
</div>
<div class="ptitle" style="left:636.5px;top:367px;width:315px;height:12.5px;">Waveform View</div>
<svg class="a" style="left:739.5px;top:366px" width="120" height="16" viewBox="0 0 120 16"><path d="M3.5 3.5H1V12H3.5M105.5 3.5H108V12H105.5M1 7.8H108" stroke="#b4babd" stroke-width="1" fill="none"/><path d="M50.5 0.5h7l-3.5 3z" fill="#f08a30"/><rect x="50.6" y="4" width="6.8" height="7.2" rx="1.5" fill="#3a3d3f" stroke="#f08a30" stroke-width="1"/><text x="54" y="10" font-size="5.5" font-weight="bold" fill="#e8e8e8" text-anchor="middle" font-family="DejaVu Sans,sans-serif">T</text><path d="M50.5 12.5h7l-3.5 3.5z" fill="#f08a30"/></svg>
<div class="plot" style="left:636.5px;top:379.5px;width:315px;height:159.3px">
<svg class="a" style="left:0;top:0" width="315" height="159.3" viewBox="0 0 315 159.3">
<path d="M30.5 0V159.3M62.1 0V159.3M93.7 0V159.3M125.3 0V159.3M156.9 0V159.3M188.5 0V159.3M220.1 0V159.3M251.7 0V159.3M283.3 0V159.3M0 17.5H315M0 33.4H315M0 49.2H315M0 65H315M0 80.9H315M0 96.8H315M0 112.6H315M0 128.4H315M0 144.3H315" stroke="#3a3f42" stroke-width="0.8" stroke-dasharray="0.8 4.2" fill="none"/>
<path d="M0 8.9L0 9.1L1.3 9.2L2.6 8.6L3.9 8.8L5.2 8.5L6.5 9.5L7.8 8.8L9.1 9L10.4 9L11.7 8.6L13 9.2L14.3 9.4L15.6 9.4L16.9 8.5L18.2 8.6L19.5 8.9L20.8 9L22.1 8.5L23.4 9.3L24.7 9.3L26 8.7L27.3 9.3L28.6 8.6L29.9 8.5L31.2 9.5L32.5 8.8L33.8 8.8L35.1 9.3L36.4 8.7L37.7 9.4L39 9.2L40.3 8.8L41.6 9.2L42.9 9.1L44.2 9.4L45.5 9.3L46.8 9L48.1 9.4L49.4 9.3L50.7 9.5L52 8.6L53.3 8.6L54.6 9.4L55.9 9.1L57.2 8.8L58.5 8.8L59.8 9.2L61.1 9.4L62.4 9L63.7 8.6L65 9.2L66.3 8.7L67.6 9L68.9 9.1L70.2 9.5L71.5 8.5L72.8 8.6L74.1 9.4L75.4 9L76.7 8.7L78 8.8L79.3 8.9L80.6 9.5L81.9 9.2L83.2 9.2L84.5 9.4L85.8 9.3L87.1 8.8L88.4 8.6L89.7 9.4L91 9L92.3 9.2L93.6 9.1L94.9 8.7L96.2 8.4L97.5 8.5L98.8 8.9L100.1 9.4L101.4 8.7L102.7 9L104 8.5L105.3 8.7L106.6 8.5L107.9 8.5L109.2 8.5L110.5 8.5L111.8 9.3L113.1 9L114.4 9.2L115.7 8.4L117 8.7L118.3 9.1L119.6 8.4L120.9 8.8L122.2 8.4L123.5 8.8L124.8 9.4L126.1 8.4L127.4 8.9L128.7 9.1L130 9.3L131.3 8.6L132.6 9.3L133.9 9.3L135.2 8.5L136.5 9.1L137.8 9.3L139.1 9.5L140.4 8.8L141.7 9.4L143 9.4L144.3 8.4L145.6 8.7L146.9 9.1L148.2 8.7L149.5 8.9L150.8 9.2L152.1 9.3L153.4 8.6L154.7 8.4L156 8.6L157.3 9L158.6 9.3L159.9 8.8L161.2 8.8L162.5 8.8L163.8 9.1L165.1 9.4L166.4 8.6L167.7 9.5L169 9L170.3 8.7L171.6 9.1L172.9 9.3L174.2 8.9L175.5 8.4L176.8 9.1L178.1 9.1L179.4 9L180.7 9.2L182 9L183.3 8.8L184.6 9L185.9 8.7L187.2 8.7L188.5 9L189.8 8.5L191.1 9.3L192.4 9.5L193.7 8.6L195 9.1L196.3 8.8L197.6 9.5L198.9 9.4L200.2 9.1L201.5 8.5L202.8 9L204.1 8.6L205.4 9.3L206.7 8.7L208 9.1L209.3 9.2L210.6 9.4L211.9 9.4L213.2 9.3L214.5 9.3L215.8 9L217.1 8.8L218.4 9.2L219.7 8.9L221 9.3L222.3 8.6L223.6 9.4L224.9 9.4L226.2 8.8L227.5 8.6L228.8 9.3L230.1 8.4L231.4 9.1L232.7 8.4L234 9.3L235.3 9.4L236.6 9.1L237.9 8.8L239.2 8.7L240.5 8.8L241.8 9.4L243.1 8.8L244.4 9.1L245.7 9.3L247 8.4L248.3 8.4L249.6 9.2L250.9 8.7L252.2 8.8L253.5 8.8L254.8 8.9L256.1 8.7L257.4 9.4L258.7 8.9L260 9.5L261.3 9.3L262.6 8.9L263.9 9.4L265.2 9.2L266.5 9.4L267.8 8.6L269.1 8.7L270.4 8.5L271.7 8.4L273 9.4L274.3 8.7L275.6 8.8L276.9 9.1L278.2 9.5L279.5 8.6L280.8 8.5L282.1 9.3L283.4 9.3L284.7 9.2L286 8.5L287.3 9.3L288.6 8.9L289.9 8.9L291.2 8.6L292.5 9.4L293.8 9.2L295.1 9.3L296.4 8.6L297.7 9.4L299 8.5L300.3 8.7L301.6 9L302.9 8.8L304.2 9.2L305.5 8.9L306.8 8.8L308.1 8.9L309.4 9.1L310.7 9.1L312 8.8L313.3 8.8L314.6 9.4L315 101.2L315 101.2L313.7 100.8L312.4 101.3L311.1 100.6L309.8 100.7L308.5 101.3L307.2 101.2L305.9 101.4L304.6 101.4L303.3 100.7L302 101.6L300.7 100.7L299.4 100.7L298.1 101.7L296.8 101.7L295.5 101.2L294.2 100.6L292.9 100.8L291.6 101.2L290.3 101.3L289 101.2L287.7 101.7L286.4 101.2L285.1 101.5L283.8 101.7L282.5 100.7L281.2 101.7L279.9 101.5L278.6 101.7L277.3 100.8L276 100.7L274.7 101.4L273.4 100.6L272.1 100.9L270.8 101.7L269.5 100.8L268.2 100.7L266.9 101.5L265.6 101.6L264.3 100.9L263 101L261.7 100.6L260.4 101.1L259.1 100.9L257.8 101L256.5 101.1L255.2 101.7L253.9 101.4L252.6 100.9L251.3 101.1L250 101.2L248.7 101L247.4 100.8L246.1 101.4L244.8 101.6L243.5 101.5L242.2 101.6L240.9 101.3L239.6 100.9L238.3 101.2L237 101.7L235.7 101.4L234.4 101.4L233.1 101.7L231.8 101.5L230.5 101.3L229.2 100.7L227.9 101.3L226.6 100.6L225.3 101.4L224 101L222.7 101.2L221.4 101.4L220.1 101.1L218.8 101.3L217.5 101.1L216.2 101.2L214.9 101.1L213.6 101.3L212.3 101.1L211 101L209.7 101.2L208.4 101L207.1 101.5L205.8 101.5L204.5 101.6L203.2 101L201.9 100.7L200.6 101.7L199.3 100.9L198 101.3L196.7 101.5L195.4 100.7L194.1 101.5L192.8 101.3L191.5 101.6L190.2 101.4L188.9 100.9L187.6 101.5L186.3 101.5L185 101L183.7 101.2L182.4 101.2L181.1 101.7L179.8 100.7L178.5 101.4L177.2 101L175.9 100.8L174.6 100.8L173.3 101L172 101.3L170.7 100.8L169.4 101.3L168.1 100.8L166.8 101.6L165.5 101.5L164.2 101.3L162.9 101.6L161.6 101L160.3 101L159 101.5L157.7 101.1L156.4 101.1L155.1 101.4L153.8 101L152.5 101L151.2 101.3L149.9 101.2L148.6 100.9L147.3 101.3L146 100.9L144.7 100.9L143.4 101.1L142.1 100.7L140.8 101.3L139.5 101.4L138.2 100.8L136.9 101.2L135.6 100.6L134.3 100.7L133 101.1L131.7 101.3L130.4 101.3L129.1 101.2L127.8 101.5L126.5 100.9L125.2 101.2L123.9 100.6L122.6 100.9L121.3 101.2L120 100.9L118.7 101.2L117.4 101.6L116.1 100.9L114.8 100.9L113.5 101.1L112.2 101.2L110.9 101.1L109.6 100.7L108.3 100.7L107 101.7L105.7 100.9L104.4 101.5L103.1 101.6L101.8 101.4L100.5 101L99.2 100.6L97.9 101.4L96.6 101.7L95.3 101.1L94 101.3L92.7 100.9L91.4 100.9L90.1 101.5L88.8 100.7L87.5 101.3L86.2 101.7L84.9 101.5L83.6 101.2L82.3 100.7L81 100.8L79.7 101.5L78.4 100.7L77.1 101.1L75.8 101L74.5 101.1L73.2 101.6L71.9 101.3L70.6 101.5L69.3 100.7L68 101.2L66.7 101.6L65.4 101.4L64.1 101.1L62.8 101.7L61.5 100.8L60.2 100.7L58.9 101L57.6 100.7L56.3 101.4L55 100.6L53.7 100.9L52.4 100.8L51.1 101.2L49.8 101.6L48.5 100.9L47.2 101L45.9 101L44.6 101.1L43.3 100.7L42 101.5L40.7 101.2L39.4 100.6L38.1 101.1L36.8 101.5L35.5 100.8L34.2 101.1L32.9 101.5L31.6 100.8L30.3 101L29 101.5L27.7 101.2L26.4 101.4L25.1 101.5L23.8 100.8L22.5 101L21.2 100.7L19.9 101.3L18.6 101L17.3 100.8L16 101.7L14.7 100.8L13.4 101.2L12.1 101.2L10.8 100.7L9.5 101L8.2 101.3L6.9 100.9L5.6 101L4.3 101.6L3 101.3L1.7 100.9L0.4 100.9Z" fill="#f5e660"/>
<path d="M30.5 9.9V100.2M62.1 9.9V100.2M93.7 9.9V100.2M125.3 9.9V100.2M156.9 9.9V100.2M188.5 9.9V100.2M220.1 9.9V100.2M251.7 9.9V100.2M283.3 9.9V100.2" stroke="#f0e05c" stroke-width="0.8" fill="none"/>
<path d="M156.9 103.2V149.3" stroke="#c8c8c8" stroke-width="0.9" stroke-dasharray="2.2 2.4"/>
<path d="M156.9 17.5V101.2" stroke="#e0c868" stroke-width="0.8"/>
<path d="M152.9 0h8l-4 5z" fill="#f08a30"/>
<rect x="152.4" y="7.5" width="9" height="9.6" fill="#1a1a1a" stroke="#f08a30" stroke-width="1"/>
<text x="156.9" y="15.1" font-size="7" font-weight="bold" fill="#f4f4f4" text-anchor="middle" font-family="DejaVu Sans,sans-serif">T</text>
<path d="M155.1 17.5l1.8 2.2l1.8 -2.2z" fill="#f08a30"/>
<path d="M1.8 159.3V153.3H15.3L20.6 159.3Z" fill="#f2e24e"/><path d="M7 156.7h1.600M11 156.7h1.600" stroke="#7a7430" stroke-width="1"/>
<path d="M311.5 48.5L304 53L309.5 58.5M309.5 53.5H315" stroke="#8f8c6c" stroke-width="0.9" fill="none"/>
<path d="" stroke="#777c7f" stroke-width="0.8" fill="none"/>
<g transform="translate(311.5,3.5)"><path d="M-19 0H0V18Z" fill="#6f7477"/><circle cx="-3.6" cy="3.4" r="1.9" fill="none" stroke="#d4d8da" stroke-width="1.2"/><path d="M-5 5Q-7.500 6.800 -8.800 9.600" stroke="#d4d8da" stroke-width="1.7" fill="none" stroke-linecap="round"/></g>
</svg>
<div class="lbl" style="left:1.3px;top:150.2px;width:60px;text-align:center;color:#b4b8ba">-80 µs</div>
<div class="lbl" style="left:32.7px;top:150.2px;width:60px;text-align:center;color:#b4b8ba">-60 µs</div>
<div class="lbl" style="left:64.1px;top:150.2px;width:60px;text-align:center;color:#b4b8ba">-40 µs</div>
<div class="lbl" style="left:95.5px;top:150.2px;width:60px;text-align:center;color:#b4b8ba">-20 µs</div>
<div class="lbl" style="left:126.9px;top:150.2px;width:60px;text-align:center;color:#b4b8ba">0 s</div>
<div class="lbl" style="left:158.3px;top:150.2px;width:60px;text-align:center;color:#b4b8ba">20 µs</div>
<div class="lbl" style="left:189.7px;top:150.2px;width:60px;text-align:center;color:#b4b8ba">40 µs</div>
<div class="lbl" style="left:221.1px;top:150.2px;width:60px;text-align:center;color:#b4b8ba">60 µs</div>
<div class="lbl" style="left:252.5px;top:150.2px;width:60px;text-align:center;color:#b4b8ba">80 µs</div>
<div class="lbl" style="right:3.5px;top:13.5px;text-align:right;color:#4d4a26">2.16 V</div>
<div class="lbl" style="right:3.5px;top:29.3px;text-align:right;color:#4d4a26">1.92 V</div>
<div class="lbl" style="right:3.5px;top:45.1px;text-align:right;color:#4d4a26">1.68 V</div>
<div class="lbl" style="right:3.5px;top:60.9px;text-align:right;color:#4d4a26">1.44 V</div>
<div class="lbl" style="right:3.5px;top:76.7px;text-align:right;color:#4d4a26">1.20 V</div>
<div class="lbl" style="right:3.5px;top:92.5px;text-align:right;color:#4d4a26">960 mV</div>
<div class="lbl" style="right:3.5px;top:108.3px;text-align:right;color:#cfc45c">720 mV</div>
<div class="lbl" style="right:3.5px;top:124.1px;text-align:right;color:#cfc45c">480 mV</div>
<div class="lbl" style="right:3.5px;top:139.9px;text-align:right;color:#cfc45c">240 mV</div>
</div>
<div class="a" style="left:953px;top:14.5px;width:8px;height:526.5px;background:#2f3234"></div>
<div class="a" style="left:961px;top:14.5px;width:82px;height:1px;background:#4c5154"></div>
<div class="a" style="left:961px;top:14.5px;width:1px;height:526.5px;background:#4c5154"></div>
<div class="t" style="left:981px;top:16.4px;font-family:Liberation Sans,sans-serif;font-weight:bold;font-size:8.4px;color:#f4f4f4">Add New...</div>
<div class="btn" style="left:964.8px;top:29px;width:33.8px;height:20.4px;font-size:7.5px;line-height:18.4px;">Cursors</div>
<div class="btn" style="left:1003.3px;top:29px;width:33.8px;height:20.4px;font-size:7.5px;line-height:18.4px;">Note</div>
<div class="btn" style="left:965px;top:53.5px;width:33.5px;height:20px;font-size:7.5px;line-height:18px;">Measure</div>
<div class="btn" style="left:1003.5px;top:53.5px;width:33.5px;height:20px;font-size:7.5px;line-height:18px;">Search</div>
<div class="btn" style="left:965px;top:77.5px;width:33.5px;height:20.5px;font-size:7.5px;line-height:8.2px;padding-top:1.5px">Results<br>Table</div>
<div class="btn" style="left:1003.5px;top:77.5px;width:33.5px;height:20.5px;font-size:7.5px;line-height:18.5px;">Plot</div>
<div class="a" style="left:963.3px;top:109.3px;width:79.7px;height:8.7px;background:#0d0d0d"></div>
<div class="t cd" style="left:966.8px;top:109.6px;color:#f0e04a;font-size:8.2px">Meas 1</div>
<div class="a" style="left:1027px;top:111.5px;width:10.7px;height:4.8px;background:#f0e04a;border-radius:1px;color:#555;font-size:4.5px;line-height:4.8px;text-align:center">1</div>
<div class="a" style="left:963.3px;top:118px;width:79.7px;height:94.6px;background:#c9d0d3"></div>
<div class="t cd" style="left:966.8px;top:120.4px;color:#1e1e1e;font-size:8.3px;line-height:10.27px;text-shadow:0 0 .3px #333">Jitter Summary<br>TIE(σ): 65.19 ps<br>TJ@: 560.5 ps<br>EW@: 11.94 ns<br>RJ-δδ: 27.34 ps<br>DJ-δδ: 177.8 ps<br>PJ: 126.6 ps<br>DDJ: 0.000 s<br>DCD: 110.2 ps</div>
<div class="a" style="left:962px;top:512px;width:81px;height:1px;background:#494e51"></div>
<div class="a" style="left:962px;top:539.6px;width:81px;height:1px;background:#494e51"></div>
<div class="btn" style="left:964.7px;top:516.9px;width:34px;height:20px;background:#2e3133"></div>
<svg class="a" style="left:964.7px;top:516.9px" width="34" height="20" viewBox="0 0 34 20"><path d="M11 4.5V9M11 4.500H19M19 3.500V6" stroke="#c8c8c8" stroke-width="0.7" stroke-dasharray="1.2 1" fill="none"/><circle cx="17" cy="10.5" r="3" fill="none" stroke="#e0e0e0" stroke-width="1.2"/><path d="M19.3 12.8L23 16.5" stroke="#e8e8e8" stroke-width="1.8" stroke-linecap="round"/><path d="M10.500 10.500H14" stroke="#e0e0e0" stroke-width="0.8"/></svg>
<svg class="a" style="left:1013.5px;top:517.6px" width="18" height="20" viewBox="0 0 18 20"><ellipse cx="9" cy="3.2" rx="7.3" ry="1.9" fill="none" stroke="#c8ccce" stroke-width="0.95"/><path d="M1.8 3.5L3.6 17.2Q9 19.6 14.4 17.2L16.200 3.500" fill="none" stroke="#c8ccce" stroke-width="0.95"/><path d="M6 6.5V16.500M9 6.800V17M12 6.500V16.500" stroke="#b8bcbe" stroke-width="0.8"/></svg>
<div class="a" style="left:0px;top:541px;width:1043px;height:45px;background:#383c3e"></div>
<div class="a" style="left:1px;top:542.5px;width:49.3px;height:9.8px;background:#f3e35a;border-radius:1px 1px 0 0"></div>
<div class="t cd" style="left:4px;top:544.2px;color:#2a2a20;font-size:8.3px">Ch 1</div>
<div class="a" style="left:1px;top:552.3px;width:49.3px;height:33px;background:#c9d0d3"></div>
<div class="t cd" style="left:4.8px;top:554.4px;color:#1e1e1e;font-size:8.3px;line-height:10.3px;text-shadow:0 0 .3px #333">240 mV/div<br>50 Ω<br>500 MHz</div>
<svg class="a" style="left:41.5px;top:576.5px" width="6" height="6" viewBox="0 0 6 6"><path d="M0.5 0.5h2v2h-2zM2.5 2.5L4 4M3.500 3.500h2v1.800h-2z" fill="#333" stroke="#333" stroke-width="0.5"/></svg>
<div class="btn" style="left:360px;top:542px;width:21.5px;height:43.2px;border-radius:3px;font-size:11px;line-height:40px"><i style="position:absolute;left:2px;right:2px;top:3.2px;height:1.3px;background:#3fc8c8"></i>2</div>
<div class="btn" style="left:384.5px;top:542px;width:21.5px;height:43.2px;border-radius:3px;font-size:11px;line-height:40px"><i style="position:absolute;left:2px;right:2px;top:3.2px;height:1.3px;background:#d8455f"></i>3</div>
<div class="btn" style="left:409.1px;top:542px;width:21.5px;height:43.2px;border-radius:3px;font-size:11px;line-height:40px"><i style="position:absolute;left:2px;right:2px;top:3.2px;height:1.3px;background:#84c83f"></i>4</div>
<div class="btn" style="left:433.6px;top:542px;width:21.5px;height:43.2px;border-radius:3px;font-size:11px;line-height:40px"><i style="position:absolute;left:2px;right:2px;top:3.2px;height:1.3px;background:#e8902f"></i>5</div>
<div class="btn" style="left:458.1px;top:542px;width:21.5px;height:43.2px;border-radius:3px;font-size:11px;line-height:40px"><i style="position:absolute;left:2px;right:2px;top:3.2px;height:1.3px;background:#3a4fd8"></i>6</div>
<div class="btn" style="left:482.6px;top:542px;width:21.5px;height:43.2px;border-radius:3px;font-size:11px;line-height:40px"><i style="position:absolute;left:2px;right:2px;top:3.2px;height:1.3px;background:#c040b8"></i>7</div>
<div class="btn" style="left:507.2px;top:542px;width:21.5px;height:43.2px;border-radius:3px;font-size:11px;line-height:40px"><i style="position:absolute;left:2px;right:2px;top:3.2px;height:1.3px;background:#30c088"></i>8</div>
<div class="a" style="left:534px;top:542px;width:1px;height:44px;background:#2c2f31"></div>
<div class="btn" style="left:540px;top:542px;width:21px;height:43.2px;border-radius:3px;font-size:7.4px;line-height:8.85px;padding-top:8.6px"><i style="position:absolute;left:2px;right:2px;top:3.2px;height:1.3px;background:#d98a30"></i>Add<br>New<br>Math</div>
<div class="btn" style="left:564.6px;top:542px;width:21px;height:43.2px;border-radius:3px;font-size:7.4px;line-height:8.85px;padding-top:8.6px"><i style="position:absolute;left:2px;right:2px;top:3.2px;height:1.3px;background:#aeb2b4"></i>Add<br>New<br>Ref</div>
<div class="btn" style="left:589px;top:542px;width:21px;height:43.2px;border-radius:3px;font-size:7.4px;line-height:8.85px;padding-top:8.6px"><i style="position:absolute;left:2px;right:2px;top:3.2px;height:1.3px;background:#6c5cd0"></i>Add<br>New<br>Bus</div>
<div class="a" style="left:616.4px;top:542px;width:1px;height:44px;background:#2c2f31"></div>
<div class="btn" style="left:621.8px;top:542px;width:21.8px;height:43.2px;border-radius:3px;font-size:7.8px;line-height:41.5px"><i style="position:absolute;left:2px;right:2px;top:3.2px;height:1.3px;background:#2b2e30"></i>DVM</div>
<div class="btn" style="left:649px;top:542px;width:21.8px;height:43.2px;border-radius:3px;font-size:7.8px;line-height:41.5px"><i style="position:absolute;left:2px;right:2px;top:3.2px;height:1.3px;background:#2b2e30"></i>AFG</div>
<div class="a" style="left:676.3px;top:542px;width:1px;height:44px;background:#2c2f31"></div>
<div class="bdg" style="left:682.6px;top:542.8px;width:121.6px;height:43px"><div class="h">Horizontal</div><div class="t" style="left:3.8px;top:11.5px;line-height:10.25px;font-size:8.3px;text-shadow:0 0 .3px #333">20 µs/div<br>SR: 3.125 GS/s<br>RL: 625 kpts</div><div class="t" style="left:61.2px;top:11.5px;line-height:10.25px;font-size:8.3px;text-shadow:0 0 .3px #333">200 µs<br>320 ps/pt<br><span style="display:inline-block;width:5px;height:6px;background:#e89a50;color:#6a3a10;font-size:4px;line-height:6px;text-align:center;border-radius:1px;vertical-align:1px;font-weight:bold">M</span>&nbsp; 50%</div></div>
<div class="bdg" style="left:809.6px;top:542.8px;width:87.2px;height:43px"><div class="h">Trigger</div><div class="a" style="left:4px;top:13px;width:16px;height:8.2px;background:#f3e35a;border:1px solid #8a7f20;border-radius:2.5px;color:#333;font-size:6px;line-height:6.4px;text-align:center;font-weight:bold">1</div><svg class="a" style="left:25px;top:13px" width="9" height="9" viewBox="0 0 9 9"><path d="M0.5 7.500H3L6 1.500H8.500" stroke="#5a6064" stroke-width="1.1" fill="none"/></svg><div class="t" style="left:40.4px;top:13.2px;font-size:8.3px;text-shadow:0 0 .3px #333">1.6 V</div></div>
<div class="bdg" style="left:901.8px;top:542.8px;width:82.2px;height:43px"><div class="h">Acquisition</div><div class="t" style="left:4px;top:11.500px;line-height:10.25px;font-size:8.3px;text-shadow:0 0 .3px #333">Auto,&nbsp;&nbsp;&nbsp;&nbsp; Analyze<br>High Res: 12 bits<br>316 Acqs</div></div>
<div class="a" style="left:989.2px;top:542.8px;width:48.7px;height:18.6px;background:#4fba48;border-radius:2px;color:#eaf6e8;font-size:5.2px;font-weight:bold;line-height:18px;text-align:center">Triggered</div>
</div></body></html>
